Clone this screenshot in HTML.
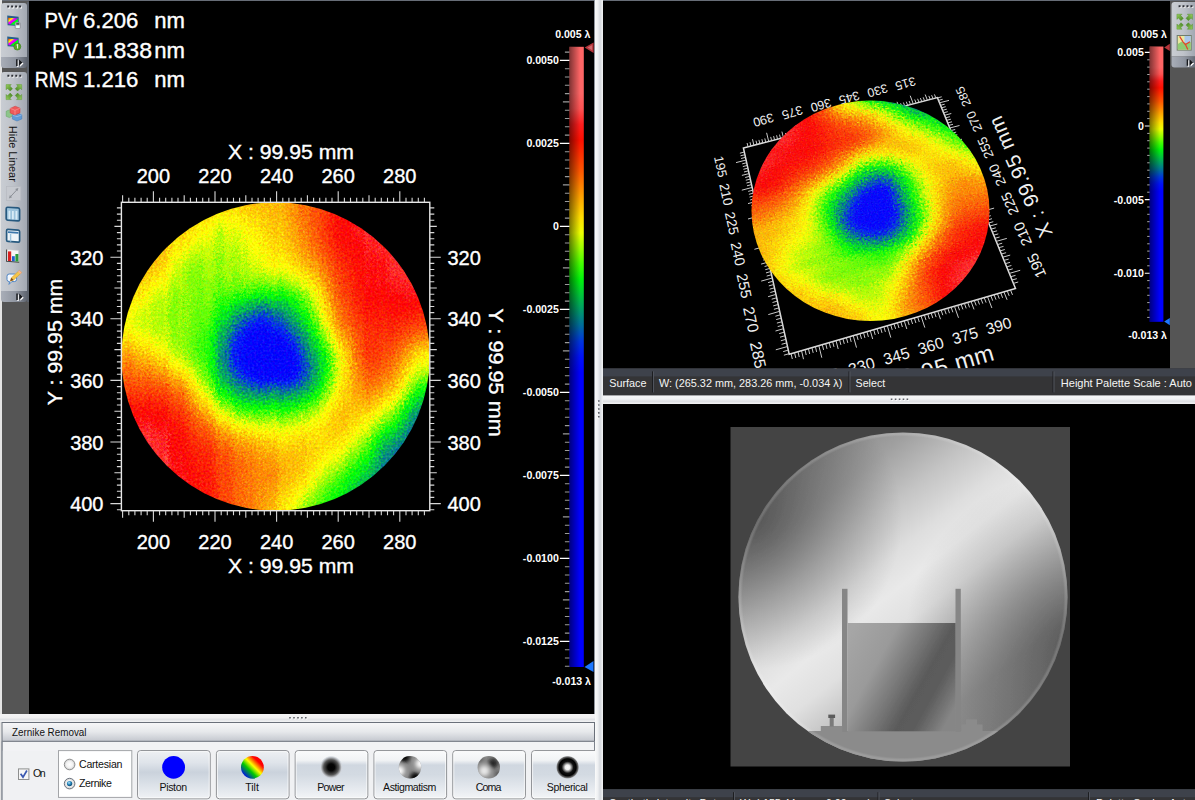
<!DOCTYPE html>
<html><head><meta charset="utf-8"><title>Zernike Removal</title>
<style>
html,body{margin:0;padding:0;background:#f0f0f0;}
body{width:1195px;height:800px;overflow:hidden;position:relative;font-family:"Liberation Sans",sans-serif;font-size:11px;color:#000;}
.abs{position:absolute;}
svg{position:absolute;left:0;top:0;}
svg text{font-family:"Liberation Sans",sans-serif;}
.tb{position:absolute;left:1px;width:26px;border-radius:3px 3px 0 0;background:linear-gradient(90deg,#c9cdd3 0%,#bfc3ca 45%,#a2a8b2 100%);}
.tbc{position:absolute;left:1px;width:26px;background:linear-gradient(90deg,#a9aeb8 0%,#9096a1 55%,#5f6570 100%);border-radius:0 0 3px 3px;}
</style></head><body>


<div class="abs" style="left:0;top:0;width:1195px;height:1px;background:#676d77"></div>
<!-- left toolbar strip -->
<div class="abs" style="left:1px;top:1px;width:28px;height:713px;background:#555"></div>
<div class="abs" style="left:0;top:0;width:2px;height:800px;background:#e4e4e4"></div>
<div class="tb" style="top:3px;height:54px"></div><div class="tbc" style="top:57px;height:11px"></div>
<div class="tb" style="top:72px;height:219px"></div><div class="tbc" style="top:291px;height:11px"></div>
<div class="abs" style="left:27px;top:2px;width:2px;height:300px;background:#5b616b"></div>
<!-- main black panels -->
<div class="abs" style="left:29px;top:1px;width:566px;height:713px;background:#000"></div>
<div class="abs" style="left:603px;top:1px;width:567px;height:368px;background:#000"></div>
<div class="abs" style="left:1170px;top:1px;width:25px;height:368px;background:#555"></div>
<div class="abs" style="left:603px;top:404px;width:592px;height:386px;background:#000"></div>
<!-- splitters -->
<div class="abs" style="left:595px;top:0;width:8px;height:800px;background:linear-gradient(90deg,#fafafa 0%,#eef0f2 35%,#d6d9de 65%,#f2f3f4 100%)"></div>
<div class="abs" style="left:594px;top:0;width:1px;height:714px;background:#8d929a"></div>
<div class="abs" style="left:603px;top:395px;width:592px;height:9px;background:linear-gradient(180deg,#f7f7f8 0%,#f1f2f3 45%,#dddfe3 70%,#f4f4f5 100%)"></div>
<div class="abs" style="left:0;top:714px;width:595px;height:8px;background:linear-gradient(180deg,#f4f4f5 0%,#f0f0f1 50%,#dfe1e5 65%,#f3f3f4 100%)"></div>

<svg width="1195" height="800" viewBox="0 0 1195 800">
<defs>
<g id="hm" stroke-width=".45" stroke-linejoin="miter"><path fill="#0000ff" stroke="#0000ff" d="M70 78v13h1v-13zM71 80v9h1v-9zM72 76v17h1v-17zM73 78v13h1v-13zM74 75v19h1v-19zM75 74v20h1v-20zM76 74v21h1v-21zM77 73v23h1v-23zM78 71v26h1v-26zM79 74v21h1v-21zM80 72v25h1v-25zM81 74v22h1v-22zM82 75v21h1v-21zM83 74v23h1v-23zM84 76v20h1v-20zM85 77v18h1v-18zM86 77v19h1v-19zM87 77v19h1v-19zM88 76v21h1v-21zM89 79v17h1v-17zM90 80v16h1v-16zM91 81v14h1v-14zM92 82v13h1v-13zM93 86v8h1v-8zM94 87v7h1v-7z"/>
<path fill="#0000ff" stroke="#0000ff" d="M70 75v3h1v-3zM70 91v2h1v-2zM71 77v3h1v-3zM71 89v3h1v-3zM72 74v2h1v-2zM72 93v1h1v-1zM73 75v3h1v-3zM73 91v2h1v-2zM74 73v2h1v-2zM74 94v1h1v-1zM75 73v1h1v-1zM75 94v2h1v-2zM76 72v2h1v-2zM76 95v1h1v-1zM77 72v1h1v-1zM77 96v1h1v-1zM78 70v1h1v-1zM78 97v1h1v-1zM79 73v1h1v-1zM79 95v1h1v-1zM80 70v2h1v-2zM80 97v1h1v-1zM81 72v2h1v-2zM81 96v1h1v-1zM82 73v2h1v-2zM82 96v1h1v-1zM83 73v1h1v-1zM84 74v2h1v-2zM84 96v1h1v-1zM85 76v1h1v-1zM85 95v1h1v-1zM86 76v1h1v-1zM86 96v1h1v-1zM87 75v2h1v-2zM87 96v1h1v-1zM88 74v2h1v-2zM88 97v1h1v-1zM89 77v2h1v-2zM89 96v1h1v-1zM90 78v2h1v-2zM90 96v1h1v-1zM91 79v2h1v-2zM91 95v2h1v-2zM92 80v2h1v-2zM92 95v2h1v-2zM93 83v3h1v-3zM93 94v1h1v-1zM94 84v3h1v-3zM94 94v2h1v-2zM95 87v7h1v-7zM163 163v9h1v-9zM166 159v13h1v-13zM168 161v11h1v-11zM171 164v8h1v-8z"/>
<path fill="#000afa" stroke="#000afa" d="M67 79v12h1v-12zM68 79v11h1v-11zM69 80v9h1v-9zM70 73v2h1v-2zM70 93v2h1v-2zM71 74v3h1v-3zM71 92v2h1v-2zM72 72v2h1v-2zM72 94v2h1v-2zM73 73v2h1v-2zM73 93v2h1v-2zM74 71v2h1v-2zM74 95v2h1v-2zM75 71v2h1v-2zM75 96v1h1v-1zM76 71v1h1v-1zM76 96v1h1v-1zM77 70v2h1v-2zM77 97v1h1v-1zM78 68v2h1v-2zM78 98v1h1v-1zM79 71v2h1v-2zM79 96v1h1v-1zM80 68v2h1v-2zM80 98v1h1v-1zM81 71v1h1v-1zM81 97v1h1v-1zM82 72v1h1v-1zM82 97v1h1v-1zM83 71v2h1v-2zM83 97v1h1v-1zM84 73v1h1v-1zM84 97v1h1v-1zM85 74v2h1v-2zM85 96v1h1v-1zM86 74v2h1v-2zM86 97v1h1v-1zM87 74v1h1v-1zM87 97v1h1v-1zM88 73v1h1v-1zM88 98v1h1v-1zM89 75v2h1v-2zM89 97v1h1v-1zM90 77v1h1v-1zM90 97v1h1v-1zM91 78v1h1v-1zM91 97v1h1v-1zM92 78v2h1v-2zM92 97v1h1v-1zM93 81v2h1v-2zM93 95v2h1v-2zM94 81v3h1v-3zM94 96v1h1v-1zM95 84v3h1v-3zM95 94v2h1v-2zM96 88v6h1v-6zM97 87v7h1v-7zM156 161v11h1v-11zM160 155v17h1v-17zM161 162v10h1v-10zM162 158v14h1v-14zM163 151v12h1v-12zM165 157v15h1v-15zM166 150v9h1v-9zM168 151v10h1v-10zM169 160v12h1v-12zM170 163v9h1v-9zM171 153v11h1v-11z"/>
<path fill="#0016f4" stroke="#0016f4" d="M66 81v8h1v-8zM67 76v3h1v-3zM67 91v2h1v-2zM68 76v3h1v-3zM68 90v3h1v-3zM69 77v3h1v-3zM69 89v3h1v-3zM70 71v2h1v-2zM70 95v1h1v-1zM71 72v2h1v-2zM71 94v2h1v-2zM72 70v2h1v-2zM72 96v1h1v-1zM73 72v1h1v-1zM73 95v1h1v-1zM74 70v1h1v-1zM74 97v1h1v-1zM75 69v2h1v-2zM75 97v1h1v-1zM76 69v2h1v-2zM76 97v1h1v-1zM77 68v2h1v-2zM77 98v1h1v-1zM78 67v1h1v-1zM78 99v1h1v-1zM79 69v2h1v-2zM79 97v1h1v-1zM80 67v1h1v-1zM80 99v1h1v-1zM81 69v2h1v-2zM81 98v1h1v-1zM82 70v2h1v-2zM82 98v1h1v-1zM83 69v2h1v-2zM83 98v1h1v-1zM84 71v2h1v-2zM84 98v1h1v-1zM85 73v1h1v-1zM85 97v1h1v-1zM86 73v1h1v-1zM87 73v1h1v-1zM87 98v1h1v-1zM88 72v1h1v-1zM88 99v1h1v-1zM89 74v1h1v-1zM89 98v1h1v-1zM90 75v2h1v-2zM90 98v1h1v-1zM91 76v2h1v-2zM91 98v1h1v-1zM92 77v1h1v-1zM92 98v1h1v-1zM93 79v2h1v-2zM93 97v1h1v-1zM94 79v2h1v-2zM94 97v1h1v-1zM95 81v3h1v-3zM95 96v1h1v-1zM96 84v4h1v-4zM96 94v2h1v-2zM97 84v3h1v-3zM97 94v2h1v-2zM98 88v6h1v-6zM150 155v17h1v-17zM152 148v24h1v-24zM153 157v15h1v-15zM154 154v18h1v-18zM155 157v15h1v-15zM156 148v13h1v-13zM157 151v21h1v-21zM158 150v22h1v-22zM159 157v15h1v-15zM160 146v9h1v-9zM161 150v12h1v-12zM162 148v10h1v-10zM163 144v7h1v-7zM165 149v8h1v-8zM166 143v7h1v-7zM167 156v16h1v-16zM168 145v6h1v-6zM169 150v10h1v-10zM170 153v10h1v-10zM171 146v7h1v-7z"/>
<path fill="#0022ee" stroke="#0022ee" d="M64 81v9h1v-9zM65 80v10h1v-10zM66 77v4h1v-4zM66 89v3h1v-3zM67 74v2h1v-2zM67 93v2h1v-2zM68 74v2h1v-2zM68 93v2h1v-2zM69 74v3h1v-3zM69 92v2h1v-2zM70 70v1h1v-1zM70 96v2h1v-2zM71 71v1h1v-1zM71 96v1h1v-1zM72 69v1h1v-1zM72 97v1h1v-1zM73 70v2h1v-2zM73 96v2h1v-2zM74 68v2h1v-2zM74 98v1h1v-1zM75 68v1h1v-1zM75 98v1h1v-1zM76 67v2h1v-2zM76 98v1h1v-1zM77 67v1h1v-1zM77 99v1h1v-1zM78 65v2h1v-2zM78 100v1h1v-1zM79 68v1h1v-1zM79 98v1h1v-1zM80 65v2h1v-2zM80 100v1h1v-1zM81 67v2h1v-2zM81 99v1h1v-1zM82 68v2h1v-2zM82 99v1h1v-1zM83 68v1h1v-1zM83 99v1h1v-1zM84 70v1h1v-1zM85 72v1h1v-1zM85 98v1h1v-1zM86 71v2h1v-2zM86 98v1h1v-1zM87 71v2h1v-2zM87 99v1h1v-1zM88 70v2h1v-2zM88 100v1h1v-1zM89 73v1h1v-1zM89 99v1h1v-1zM90 74v1h1v-1zM90 99v1h1v-1zM91 74v2h1v-2zM91 99v1h1v-1zM92 75v2h1v-2zM92 99v1h1v-1zM93 77v2h1v-2zM93 98v1h1v-1zM94 77v2h1v-2zM94 98v1h1v-1zM95 79v2h1v-2zM95 97v2h1v-2zM96 82v2h1v-2zM96 96v1h1v-1zM97 82v2h1v-2zM97 96v2h1v-2zM98 85v3h1v-3zM98 94v2h1v-2zM147 154v18h1v-18zM149 154v18h1v-18zM150 144v11h1v-11zM151 155v17h1v-17zM152 141v7h1v-7zM153 146v11h1v-11zM154 145v9h1v-9zM155 146v11h1v-11zM156 141v7h1v-7zM157 143v8h1v-8zM158 143v7h1v-7zM159 147v10h1v-10zM160 140v6h1v-6zM161 143v7h1v-7zM162 142v6h1v-6zM163 138v6h1v-6zM164 154v18h1v-18zM165 142v7h1v-7zM166 137v6h1v-6zM167 148v8h1v-8zM168 139v6h1v-6zM169 144v6h1v-6zM170 146v7h1v-7zM171 140v6h1v-6z"/>
<path fill="#0033de" stroke="#0033de" d="M64 78v3h1v-3zM64 90v2h1v-2zM65 77v3h1v-3zM65 90v3h1v-3zM66 75v2h1v-2zM66 92v2h1v-2zM67 72v2h1v-2zM67 95v2h1v-2zM68 72v2h1v-2zM68 95v1h1v-1zM69 72v2h1v-2zM69 94v2h1v-2zM70 68v2h1v-2zM70 98v1h1v-1zM71 69v2h1v-2zM71 97v1h1v-1zM72 68v1h1v-1zM72 98v2h1v-2zM73 69v1h1v-1zM73 98v1h1v-1zM74 67v1h1v-1zM74 99v1h1v-1zM75 67v1h1v-1zM75 99v1h1v-1zM76 66v1h1v-1zM76 99v2h1v-2zM77 66v1h1v-1zM77 100v1h1v-1zM78 64v1h1v-1zM78 101v1h1v-1zM79 66v2h1v-2zM79 99v1h1v-1zM80 64v1h1v-1zM80 101v1h1v-1zM81 66v1h1v-1zM81 100v1h1v-1zM82 67v1h1v-1zM83 66v2h1v-2zM83 100v1h1v-1zM84 68v2h1v-2zM84 99v1h1v-1zM85 70v2h1v-2zM85 99v1h1v-1zM86 70v1h1v-1zM86 99v1h1v-1zM87 70v1h1v-1zM87 100v1h1v-1zM88 68v2h1v-2zM88 101v1h1v-1zM89 71v2h1v-2zM89 100v1h1v-1zM90 72v2h1v-2zM90 100v1h1v-1zM91 73v1h1v-1zM91 100v1h1v-1zM92 73v2h1v-2zM92 100v1h1v-1zM93 76v1h1v-1zM93 99v1h1v-1zM94 76v1h1v-1zM94 99v1h1v-1zM95 77v2h1v-2zM95 99v1h1v-1zM96 80v2h1v-2zM96 97v2h1v-2zM97 80v2h1v-2zM97 98v1h1v-1zM98 82v3h1v-3zM98 96v2h1v-2zM101 90v3h1v-3zM139 159v13h1v-13zM144 148v24h1v-24zM145 154v18h1v-18zM146 149v23h1v-23zM147 144v10h1v-10zM148 147v25h1v-25zM149 144v10h1v-10zM150 137v7h1v-7zM151 144v11h1v-11zM152 135v6h1v-6zM153 139v7h1v-7zM154 138v7h1v-7zM155 140v6h1v-6zM156 136v5h1v-5zM157 138v5h1v-5zM158 138v5h1v-5zM159 141v6h1v-6zM160 135v5h1v-5zM161 138v5h1v-5zM162 136v6h1v-6zM163 131v7h1v-7zM164 146v8h1v-8zM165 136v6h1v-6zM166 129v8h1v-8zM167 142v6h1v-6zM168 132v7h1v-7zM169 138v6h1v-6zM170 140v6h1v-6zM171 134v6h1v-6z"/>
<path fill="#0048c5" stroke="#0048c5" d="M62 82v7h1v-7zM63 83v5h1v-5zM64 75v3h1v-3zM64 92v3h1v-3zM65 74v3h1v-3zM65 93v2h1v-2zM66 73v2h1v-2zM66 94v2h1v-2zM67 70v2h1v-2zM67 97v1h1v-1zM68 70v2h1v-2zM68 96v2h1v-2zM69 71v1h1v-1zM69 96v1h1v-1zM70 67v1h1v-1zM70 99v2h1v-2zM71 68v1h1v-1zM71 98v2h1v-2zM72 66v2h1v-2zM72 100v1h1v-1zM73 67v2h1v-2zM73 99v1h1v-1zM74 66v1h1v-1zM74 100v1h1v-1zM75 65v2h1v-2zM75 100v1h1v-1zM76 65v1h1v-1zM76 101v1h1v-1zM77 64v2h1v-2zM77 101v1h1v-1zM78 63v1h1v-1zM78 102v1h1v-1zM79 65v1h1v-1zM79 100v1h1v-1zM80 63v1h1v-1zM80 102v1h1v-1zM81 64v2h1v-2zM81 101v1h1v-1zM82 65v2h1v-2zM82 100v1h1v-1zM83 65v1h1v-1zM83 101v1h1v-1zM84 66v2h1v-2zM84 100v1h1v-1zM85 68v2h1v-2zM86 68v2h1v-2zM86 100v1h1v-1zM87 68v2h1v-2zM87 101v1h1v-1zM88 66v2h1v-2zM88 102v1h1v-1zM89 69v2h1v-2zM89 101v1h1v-1zM90 70v2h1v-2zM90 101v1h1v-1zM91 71v2h1v-2zM91 101v1h1v-1zM92 72v1h1v-1zM92 101v1h1v-1zM93 74v2h1v-2zM93 100v1h1v-1zM94 74v2h1v-2zM94 100v1h1v-1zM95 76v1h1v-1zM95 100v1h1v-1zM96 78v2h1v-2zM96 99v1h1v-1zM97 77v3h1v-3zM97 99v2h1v-2zM98 80v2h1v-2zM98 98v2h1v-2zM99 86v10h1v-10zM100 87v9h1v-9zM101 86v4h1v-4zM101 93v4h1v-4zM138 160v12h1v-12zM139 149v10h1v-10zM140 150v22h1v-22zM141 152v20h1v-20zM142 149v23h1v-23zM143 152v20h1v-20zM144 140v8h1v-8zM145 144v10h1v-10zM146 140v9h1v-9zM147 136v8h1v-8zM148 139v8h1v-8zM149 137v7h1v-7zM150 132v5h1v-5zM151 137v7h1v-7zM152 130v5h1v-5zM153 133v6h1v-6zM154 133v5h1v-5zM155 134v6h1v-6zM156 129v7h1v-7zM157 133v5h1v-5zM158 132v6h1v-6zM159 136v5h1v-5zM160 121v14h1v-14zM161 131v7h1v-7zM162 125v11h1v-11zM163 120v11h1v-11zM164 140v6h1v-6zM165 127v9h1v-9zM166 121v8h1v-8zM167 136v6h1v-6zM168 124v8h1v-8zM169 131v7h1v-7zM170 133v7h1v-7zM171 128v6h1v-6z"/>
<path fill="#005cad" stroke="#005cad" d="M62 78v4h1v-4zM62 89v3h1v-3zM63 79v4h1v-4zM63 88v4h1v-4zM64 73v2h1v-2zM64 95v2h1v-2zM65 72v2h1v-2zM65 95v2h1v-2zM66 71v2h1v-2zM66 96v2h1v-2zM67 68v2h1v-2zM67 98v2h1v-2zM68 69v1h1v-1zM68 98v1h1v-1zM69 69v2h1v-2zM69 97v2h1v-2zM70 66v1h1v-1zM70 101v1h1v-1zM71 66v2h1v-2zM71 100v1h1v-1zM72 65v1h1v-1zM72 101v1h1v-1zM73 66v1h1v-1zM73 100v1h1v-1zM74 65v1h1v-1zM74 101v1h1v-1zM75 64v1h1v-1zM75 101v1h1v-1zM76 64v1h1v-1zM76 102v1h1v-1zM77 63v1h1v-1zM77 102v1h1v-1zM78 62v1h1v-1zM78 103v1h1v-1zM79 64v1h1v-1zM79 101v1h1v-1zM80 62v1h1v-1zM80 103v1h1v-1zM81 63v1h1v-1zM81 102v1h1v-1zM82 64v1h1v-1zM82 101v1h1v-1zM83 63v2h1v-2zM83 102v1h1v-1zM84 65v1h1v-1zM84 101v1h1v-1zM85 66v2h1v-2zM85 100v1h1v-1zM86 66v2h1v-2zM86 101v1h1v-1zM87 66v2h1v-2zM87 102v1h1v-1zM88 65v1h1v-1zM88 103v1h1v-1zM89 68v1h1v-1zM89 102v1h1v-1zM90 69v1h1v-1zM90 102v1h1v-1zM91 70v1h1v-1zM91 102v1h1v-1zM92 70v2h1v-2zM92 102v1h1v-1zM93 72v2h1v-2zM93 101v1h1v-1zM94 72v2h1v-2zM94 101v1h1v-1zM95 74v2h1v-2zM95 101v1h1v-1zM96 76v2h1v-2zM96 100v1h1v-1zM97 75v2h1v-2zM97 101v1h1v-1zM98 78v2h1v-2zM98 100v1h1v-1zM99 83v3h1v-3zM99 96v2h1v-2zM100 84v3h1v-3zM100 96v2h1v-2zM101 83v3h1v-3zM101 97v2h1v-2zM102 88v7h1v-7zM135 161v11h1v-11zM136 156v16h1v-16zM138 150v10h1v-10zM139 143v6h1v-6zM140 143v7h1v-7zM141 144v8h1v-8zM142 142v7h1v-7zM143 144v8h1v-8zM144 134v6h1v-6zM145 137v7h1v-7zM146 134v6h1v-6zM147 132v4h1v-4zM148 134v5h1v-5zM149 132v5h1v-5zM150 129v3h1v-3zM151 132v5h1v-5zM152 126v4h1v-4zM153 128v5h1v-5zM154 126v7h1v-7zM155 127v7h1v-7zM156 119v10h1v-10zM157 120v13h1v-13zM158 118v14h1v-14zM159 123v13h1v-13zM160 117v4h1v-4zM161 118v13h1v-13zM162 118v7h1v-7zM163 116v4h1v-4zM164 135v5h1v-5zM165 120v7h1v-7zM166 117v4h1v-4zM167 127v9h1v-9zM168 119v5h1v-5zM169 124v7h1v-7zM170 127v6h1v-6zM171 123v5h1v-5z"/>
<path fill="#007194" stroke="#007194" d="M59 83v6h1v-6zM61 82v8h1v-8zM62 75v3h1v-3zM62 92v3h1v-3zM63 76v3h1v-3zM63 92v2h1v-2zM64 71v2h1v-2zM64 97v1h1v-1zM65 70v2h1v-2zM65 97v2h1v-2zM66 69v2h1v-2zM66 98v2h1v-2zM67 67v1h1v-1zM67 100v1h1v-1zM68 67v2h1v-2zM68 99v2h1v-2zM69 67v2h1v-2zM69 99v1h1v-1zM70 64v2h1v-2zM70 102v1h1v-1zM71 65v1h1v-1zM71 101v1h1v-1zM72 64v1h1v-1zM72 102v1h1v-1zM73 65v1h1v-1zM73 101v1h1v-1zM74 63v2h1v-2zM74 102v1h1v-1zM75 63v1h1v-1zM75 102v1h1v-1zM76 63v1h1v-1zM76 103v1h1v-1zM77 62v1h1v-1zM77 103v1h1v-1zM78 61v1h1v-1zM78 104v1h1v-1zM79 63v1h1v-1zM79 102v1h1v-1zM80 61v1h1v-1zM80 104v1h1v-1zM81 62v1h1v-1zM81 103v1h1v-1zM82 63v1h1v-1zM82 102v1h1v-1zM83 62v1h1v-1zM83 103v1h1v-1zM84 63v2h1v-2zM84 102v1h1v-1zM85 65v1h1v-1zM85 101v1h1v-1zM86 64v2h1v-2zM86 102v1h1v-1zM87 64v2h1v-2zM87 103v1h1v-1zM88 63v2h1v-2zM88 104v1h1v-1zM89 66v2h1v-2zM89 103v1h1v-1zM90 67v2h1v-2zM90 103v1h1v-1zM91 68v2h1v-2zM91 103v1h1v-1zM92 68v2h1v-2zM92 103v1h1v-1zM93 71v1h1v-1zM93 102v1h1v-1zM94 70v2h1v-2zM94 102v1h1v-1zM95 72v2h1v-2zM95 102v1h1v-1zM96 74v2h1v-2zM96 101v1h1v-1zM97 74v1h1v-1zM97 102v1h1v-1zM98 76v2h1v-2zM98 101v1h1v-1zM99 81v2h1v-2zM99 98v2h1v-2zM100 81v3h1v-3zM100 98v2h1v-2zM101 80v3h1v-3zM101 99v2h1v-2zM102 85v3h1v-3zM102 95v3h1v-3zM103 91v2h1v-2zM133 158v14h1v-14zM134 161v11h1v-11zM135 152v9h1v-9zM136 150v6h1v-6zM137 152v20h1v-20zM138 144v6h1v-6zM139 139v4h1v-4zM140 138v5h1v-5zM141 139v5h1v-5zM142 136v6h1v-6zM143 137v7h1v-7zM144 131v3h1v-3zM145 133v4h1v-4zM146 131v3h1v-3zM147 130v2h1v-2zM148 130v4h1v-4zM149 129v3h1v-3zM150 126v3h1v-3zM151 128v4h1v-4zM152 122v4h1v-4zM153 123v5h1v-5zM154 121v5h1v-5zM155 119v8h1v-8zM156 116v3h1v-3zM157 116v4h1v-4zM158 115v3h1v-3zM159 117v6h1v-6zM160 114v3h1v-3zM161 115v3h1v-3zM162 115v3h1v-3zM163 114v2h1v-2zM164 123v12h1v-12zM165 116v4h1v-4zM166 114v3h1v-3zM167 121v6h1v-6zM168 116v3h1v-3zM169 120v4h1v-4zM170 122v5h1v-5zM171 119v4h1v-4z"/>
<path fill="#008480" stroke="#008480" d="M59 78v5h1v-5zM59 89v4h1v-4zM60 81v9h1v-9zM61 78v4h1v-4zM61 90v3h1v-3zM62 73v2h1v-2zM62 95v2h1v-2zM63 74v2h1v-2zM63 94v2h1v-2zM64 69v2h1v-2zM64 98v2h1v-2zM65 68v2h1v-2zM65 99v1h1v-1zM66 67v2h1v-2zM66 100v1h1v-1zM67 65v2h1v-2zM67 101v2h1v-2zM68 66v1h1v-1zM68 101v1h1v-1zM69 66v1h1v-1zM69 100v1h1v-1zM70 63v1h1v-1zM70 103v1h1v-1zM71 64v1h1v-1zM71 102v1h1v-1zM72 63v1h1v-1zM72 103v1h1v-1zM73 64v1h1v-1zM73 102v1h1v-1zM74 62v1h1v-1zM74 103v1h1v-1zM75 62v1h1v-1zM75 103v2h1v-2zM76 62v1h1v-1zM76 104v1h1v-1zM77 61v1h1v-1zM77 104v1h1v-1zM78 60v1h1v-1zM78 105v1h1v-1zM79 62v1h1v-1zM79 103v1h1v-1zM80 60v1h1v-1zM80 105v1h1v-1zM81 61v1h1v-1zM81 104v1h1v-1zM82 62v1h1v-1zM82 103v1h1v-1zM83 61v1h1v-1zM83 104v1h1v-1zM84 62v1h1v-1zM84 103v1h1v-1zM85 63v2h1v-2zM85 102v1h1v-1zM86 63v1h1v-1zM86 103v1h1v-1zM87 63v1h1v-1zM87 104v1h1v-1zM88 62v1h1v-1zM88 105v1h1v-1zM89 64v2h1v-2zM89 104v1h1v-1zM90 65v2h1v-2zM90 104v1h1v-1zM91 66v2h1v-2zM91 104v1h1v-1zM92 66v2h1v-2zM92 104v1h1v-1zM93 69v2h1v-2zM93 103v1h1v-1zM94 69v1h1v-1zM94 103v2h1v-2zM95 70v2h1v-2zM95 103v1h1v-1zM96 72v2h1v-2zM96 102v1h1v-1zM97 72v2h1v-2zM97 103v1h1v-1zM98 74v2h1v-2zM98 102v1h1v-1zM99 78v3h1v-3zM99 100v1h1v-1zM100 79v2h1v-2zM100 100v1h1v-1zM101 78v2h1v-2zM101 101v1h1v-1zM102 82v3h1v-3zM102 98v2h1v-2zM103 86v5h1v-5zM103 93v4h1v-4zM129 163v9h1v-9zM130 162v10h1v-10zM132 160v12h1v-12zM133 151v7h1v-7zM134 152v9h1v-9zM135 147v5h1v-5zM136 145v5h1v-5zM137 146v6h1v-6zM138 140v4h1v-4zM139 135v4h1v-4zM140 134v4h1v-4zM141 134v5h1v-5zM142 133v3h1v-3zM143 133v4h1v-4zM144 129v2h1v-2zM145 130v3h1v-3zM146 129v2h1v-2zM147 127v3h1v-3zM148 128v2h1v-2zM149 126v3h1v-3zM150 123v3h1v-3zM151 125v3h1v-3zM152 119v3h1v-3zM153 119v4h1v-4zM154 117v4h1v-4zM155 116v3h1v-3zM156 114v2h1v-2zM157 114v2h1v-2zM158 113v2h1v-2zM159 114v3h1v-3zM160 112v2h1v-2zM161 113v2h1v-2zM162 113v2h1v-2zM163 112v2h1v-2zM164 118v5h1v-5zM165 114v2h1v-2zM166 112v2h1v-2zM167 117v4h1v-4zM168 114v2h1v-2zM169 117v3h1v-3zM170 118v4h1v-4zM171 116v3h1v-3z"/>
<path fill="#00956e" stroke="#00956e" d="M58 81v8h1v-8zM59 74v4h1v-4zM59 93v3h1v-3zM60 77v4h1v-4zM60 90v4h1v-4zM61 75v3h1v-3zM61 93v3h1v-3zM62 71v2h1v-2zM62 97v2h1v-2zM63 71v3h1v-3zM63 96v2h1v-2zM64 67v2h1v-2zM64 100v2h1v-2zM65 67v1h1v-1zM65 100v2h1v-2zM66 66v1h1v-1zM66 101v1h1v-1zM67 64v1h1v-1zM67 103v1h1v-1zM68 64v2h1v-2zM68 102v1h1v-1zM69 65v1h1v-1zM69 101v2h1v-2zM70 62v1h1v-1zM70 104v1h1v-1zM71 63v1h1v-1zM71 103v1h1v-1zM72 62v1h1v-1zM72 104v2h1v-2zM73 63v1h1v-1zM73 103v1h1v-1zM74 61v1h1v-1zM74 104v2h1v-2zM75 61v1h1v-1zM75 105v1h1v-1zM76 61v1h1v-1zM76 105v1h1v-1zM77 60v1h1v-1zM77 105v1h1v-1zM78 59v1h1v-1zM78 106v1h1v-1zM79 61v1h1v-1zM79 104v1h1v-1zM80 59v1h1v-1zM80 106v1h1v-1zM81 60v1h1v-1zM81 105v1h1v-1zM82 61v1h1v-1zM82 104v1h1v-1zM83 60v1h1v-1zM83 105v1h1v-1zM84 61v1h1v-1zM84 104v1h1v-1zM85 62v1h1v-1zM85 103v2h1v-2zM86 62v1h1v-1zM86 104v1h1v-1zM87 62v1h1v-1zM87 105v1h1v-1zM88 61v1h1v-1zM88 106v1h1v-1zM89 63v1h1v-1zM89 105v1h1v-1zM90 64v1h1v-1zM90 105v1h1v-1zM91 64v2h1v-2zM91 105v1h1v-1zM92 65v1h1v-1zM92 105v1h1v-1zM93 67v2h1v-2zM93 104v1h1v-1zM94 67v2h1v-2zM94 105v1h1v-1zM95 68v2h1v-2zM95 104v1h1v-1zM96 70v2h1v-2zM96 103v1h1v-1zM97 70v2h1v-2zM97 104v1h1v-1zM98 72v2h1v-2zM98 103v1h1v-1zM99 76v2h1v-2zM99 101v1h1v-1zM100 76v3h1v-3zM100 101v2h1v-2zM101 75v3h1v-3zM101 102v2h1v-2zM102 79v3h1v-3zM102 100v2h1v-2zM103 83v3h1v-3zM103 97v3h1v-3zM104 87v9h1v-9zM105 89v6h1v-6zM128 157v15h1v-15zM129 154v9h1v-9zM130 154v8h1v-8zM131 160v12h1v-12zM132 153v7h1v-7zM133 147v4h1v-4zM134 148v4h1v-4zM135 143v4h1v-4zM136 141v4h1v-4zM137 142v4h1v-4zM138 136v4h1v-4zM139 132v3h1v-3zM140 132v2h1v-2zM141 132v2h1v-2zM142 130v3h1v-3zM143 131v2h1v-2zM144 128v1h1v-1zM145 128v2h1v-2zM146 127v2h1v-2zM147 125v2h1v-2zM148 126v2h1v-2zM149 124v2h1v-2zM150 121v2h1v-2zM151 122v3h1v-3zM152 117v2h1v-2zM153 116v3h1v-3zM154 115v2h1v-2zM155 114v2h1v-2zM156 112v2h1v-2zM157 112v2h1v-2zM158 112v1h1v-1zM159 112v2h1v-2zM160 110v2h1v-2zM161 111v2h1v-2zM162 111v2h1v-2zM163 110v2h1v-2zM164 115v3h1v-3zM165 112v2h1v-2zM166 110v2h1v-2zM167 114v3h1v-3zM168 112v2h1v-2zM169 114v3h1v-3zM170 115v3h1v-3zM171 114v2h1v-2z"/>
<path fill="#00a75c" stroke="#00a75c" d="M57 77v17h1v-17zM58 77v4h1v-4zM58 89v5h1v-5zM59 72v2h1v-2zM59 96v3h1v-3zM60 74v3h1v-3zM60 94v2h1v-2zM61 72v3h1v-3zM61 96v2h1v-2zM62 68v3h1v-3zM62 99v2h1v-2zM63 69v2h1v-2zM63 98v2h1v-2zM64 65v2h1v-2zM64 102v1h1v-1zM65 65v2h1v-2zM65 102v1h1v-1zM66 64v2h1v-2zM66 102v2h1v-2zM67 62v2h1v-2zM67 104v1h1v-1zM68 63v1h1v-1zM68 103v2h1v-2zM69 64v1h1v-1zM69 103v1h1v-1zM70 61v1h1v-1zM70 105v2h1v-2zM71 62v1h1v-1zM71 104v2h1v-2zM72 61v1h1v-1zM72 106v1h1v-1zM73 61v2h1v-2zM73 104v2h1v-2zM74 60v1h1v-1zM74 106v1h1v-1zM75 60v1h1v-1zM75 106v1h1v-1zM76 60v1h1v-1zM76 106v1h1v-1zM77 59v1h1v-1zM77 106v1h1v-1zM78 58v1h1v-1zM78 107v1h1v-1zM79 60v1h1v-1zM79 105v1h1v-1zM80 58v1h1v-1zM80 107v1h1v-1zM81 59v1h1v-1zM81 106v1h1v-1zM82 60v1h1v-1zM82 105v1h1v-1zM83 59v1h1v-1zM83 106v1h1v-1zM84 60v1h1v-1zM84 105v1h1v-1zM85 61v1h1v-1zM85 105v1h1v-1zM86 61v1h1v-1zM86 105v1h1v-1zM87 60v2h1v-2zM87 106v1h1v-1zM88 59v2h1v-2zM88 107v1h1v-1zM89 61v2h1v-2zM89 106v1h1v-1zM90 62v2h1v-2zM90 106v1h1v-1zM91 63v1h1v-1zM91 106v1h1v-1zM92 63v2h1v-2zM92 106v1h1v-1zM93 65v2h1v-2zM93 105v1h1v-1zM94 65v2h1v-2zM94 106v1h1v-1zM95 66v2h1v-2zM95 105v1h1v-1zM96 68v2h1v-2zM96 104v2h1v-2zM97 68v2h1v-2zM97 105v1h1v-1zM98 70v2h1v-2zM98 104v2h1v-2zM99 74v2h1v-2zM99 102v1h1v-1zM100 74v2h1v-2zM100 103v1h1v-1zM101 73v2h1v-2zM101 104v1h1v-1zM102 77v2h1v-2zM102 102v1h1v-1zM103 80v3h1v-3zM103 100v1h1v-1zM104 84v3h1v-3zM104 96v3h1v-3zM105 84v5h1v-5zM105 95v3h1v-3zM106 86v11h1v-11zM123 159v13h1v-13zM125 165v7h1v-7zM126 158v14h1v-14zM127 157v15h1v-15zM128 152v5h1v-5zM129 150v4h1v-4zM130 150v4h1v-4zM131 153v7h1v-7zM132 148v5h1v-5zM133 143v4h1v-4zM134 144v4h1v-4zM135 139v4h1v-4zM136 137v4h1v-4zM137 138v4h1v-4zM138 133v3h1v-3zM139 130v2h1v-2zM140 130v2h1v-2zM141 130v2h1v-2zM142 129v1h1v-1zM143 129v2h1v-2zM144 126v2h1v-2zM145 126v2h1v-2zM146 125v2h1v-2zM147 124v1h1v-1zM148 124v2h1v-2zM149 122v2h1v-2zM150 119v2h1v-2zM151 119v3h1v-3zM152 115v2h1v-2zM153 115v1h1v-1zM154 113v2h1v-2zM155 113v1h1v-1zM156 111v1h1v-1zM157 111v1h1v-1zM158 110v2h1v-2zM159 111v1h1v-1zM160 108v2h1v-2zM161 109v2h1v-2zM162 109v2h1v-2zM163 108v2h1v-2zM164 113v2h1v-2zM165 110v2h1v-2zM166 109v1h1v-1zM167 112v2h1v-2zM168 110v2h1v-2zM169 112v2h1v-2zM170 113v2h1v-2zM171 112v2h1v-2z"/>
<path fill="#00b849" stroke="#00b849" d="M57 73v4h1v-4zM57 94v3h1v-3zM58 73v4h1v-4zM58 94v3h1v-3zM59 69v3h1v-3zM59 99v2h1v-2zM60 72v2h1v-2zM60 96v3h1v-3zM61 70v2h1v-2zM61 98v2h1v-2zM62 66v2h1v-2zM62 101v1h1v-1zM63 67v2h1v-2zM63 100v1h1v-1zM64 64v1h1v-1zM64 103v1h1v-1zM65 64v1h1v-1zM65 103v1h1v-1zM66 63v1h1v-1zM66 104v1h1v-1zM67 61v1h1v-1zM67 105v2h1v-2zM68 62v1h1v-1zM68 105v1h1v-1zM69 62v2h1v-2zM69 104v1h1v-1zM70 60v1h1v-1zM70 107v1h1v-1zM71 61v1h1v-1zM71 106v1h1v-1zM72 59v2h1v-2zM72 107v1h1v-1zM73 60v1h1v-1zM73 106v1h1v-1zM74 59v1h1v-1zM74 107v1h1v-1zM75 59v1h1v-1zM75 107v1h1v-1zM76 59v1h1v-1zM76 107v1h1v-1zM77 58v1h1v-1zM77 107v1h1v-1zM78 57v1h1v-1zM78 108v1h1v-1zM79 59v1h1v-1zM79 106v1h1v-1zM80 57v1h1v-1zM80 108v1h1v-1zM81 58v1h1v-1zM81 107v1h1v-1zM82 59v1h1v-1zM82 106v2h1v-2zM83 58v1h1v-1zM83 107v1h1v-1zM84 59v1h1v-1zM84 106v2h1v-2zM85 60v1h1v-1zM85 106v1h1v-1zM86 59v2h1v-2zM86 106v2h1v-2zM87 59v1h1v-1zM87 107v1h1v-1zM88 58v1h1v-1zM88 108v2h1v-2zM89 60v1h1v-1zM89 107v1h1v-1zM90 61v1h1v-1zM90 107v1h1v-1zM91 61v2h1v-2zM91 107v1h1v-1zM92 61v2h1v-2zM92 107v1h1v-1zM93 63v2h1v-2zM93 106v1h1v-1zM94 63v2h1v-2zM94 107v1h1v-1zM95 65v1h1v-1zM95 106v1h1v-1zM96 66v2h1v-2zM96 106v1h1v-1zM97 66v2h1v-2zM97 106v1h1v-1zM98 68v2h1v-2zM98 106v1h1v-1zM99 72v2h1v-2zM99 103v2h1v-2zM100 72v2h1v-2zM100 104v1h1v-1zM101 71v2h1v-2zM101 105v1h1v-1zM102 75v2h1v-2zM102 103v1h1v-1zM103 78v2h1v-2zM103 101v2h1v-2zM104 81v3h1v-3zM104 99v2h1v-2zM105 82v2h1v-2zM105 98v2h1v-2zM106 83v3h1v-3zM106 97v2h1v-2zM107 86v11h1v-11zM122 159v13h1v-13zM123 153v6h1v-6zM124 158v14h1v-14zM125 155v10h1v-10zM126 153v5h1v-5zM127 152v5h1v-5zM128 148v4h1v-4zM129 146v4h1v-4zM130 146v4h1v-4zM131 149v4h1v-4zM132 144v4h1v-4zM133 140v3h1v-3zM134 140v4h1v-4zM135 136v3h1v-3zM136 135v2h1v-2zM137 135v3h1v-3zM138 131v2h1v-2zM139 128v2h1v-2zM140 128v2h1v-2zM141 128v2h1v-2zM142 127v2h1v-2zM143 127v2h1v-2zM144 124v2h1v-2zM145 125v1h1v-1zM146 123v2h1v-2zM147 122v2h1v-2zM148 122v2h1v-2zM149 120v2h1v-2zM150 117v2h1v-2zM151 117v2h1v-2zM152 113v2h1v-2zM153 113v2h1v-2zM154 112v1h1v-1zM155 111v2h1v-2zM156 109v2h1v-2zM157 109v2h1v-2zM158 108v2h1v-2zM159 109v2h1v-2zM160 107v1h1v-1zM161 107v2h1v-2zM162 107v2h1v-2zM163 106v2h1v-2zM164 111v2h1v-2zM165 108v2h1v-2zM166 107v2h1v-2zM167 110v2h1v-2zM168 108v2h1v-2zM169 110v2h1v-2zM170 111v2h1v-2zM171 110v2h1v-2z"/>
<path fill="#00ca37" stroke="#00ca37" d="M55 77v15h1v-15zM56 80v10h1v-10zM57 70v3h1v-3zM57 97v3h1v-3zM58 70v3h1v-3zM58 97v3h1v-3zM59 66v3h1v-3zM59 101v1h1v-1zM60 69v3h1v-3zM60 99v1h1v-1zM61 68v2h1v-2zM61 100v1h1v-1zM62 64v2h1v-2zM62 102v2h1v-2zM63 65v2h1v-2zM63 101v2h1v-2zM64 62v2h1v-2zM64 104v2h1v-2zM65 62v2h1v-2zM65 104v2h1v-2zM66 61v2h1v-2zM66 105v1h1v-1zM67 60v1h1v-1zM67 107v1h1v-1zM68 60v2h1v-2zM68 106v1h1v-1zM69 61v1h1v-1zM69 105v2h1v-2zM70 58v2h1v-2zM70 108v1h1v-1zM71 59v2h1v-2zM71 107v1h1v-1zM72 58v1h1v-1zM72 108v1h1v-1zM73 59v1h1v-1zM73 107v1h1v-1zM74 58v1h1v-1zM74 108v1h1v-1zM75 58v1h1v-1zM75 108v1h1v-1zM76 58v1h1v-1zM76 108v1h1v-1zM77 57v1h1v-1zM77 108v1h1v-1zM78 56v1h1v-1zM78 109v1h1v-1zM79 58v1h1v-1zM79 107v1h1v-1zM80 56v1h1v-1zM80 109v1h1v-1zM81 57v1h1v-1zM81 108v1h1v-1zM82 58v1h1v-1zM82 108v1h1v-1zM83 57v1h1v-1zM83 108v2h1v-2zM84 58v1h1v-1zM84 108v1h1v-1zM85 59v1h1v-1zM85 107v1h1v-1zM86 58v1h1v-1zM86 108v1h1v-1zM87 58v1h1v-1zM87 108v1h1v-1zM88 57v1h1v-1zM88 110v1h1v-1zM89 59v1h1v-1zM89 108v1h1v-1zM90 59v2h1v-2zM90 108v1h1v-1zM91 60v1h1v-1zM91 108v1h1v-1zM92 60v1h1v-1zM92 108v1h1v-1zM93 62v1h1v-1zM93 107v1h1v-1zM94 61v2h1v-2zM94 108v1h1v-1zM95 63v2h1v-2zM95 107v1h1v-1zM96 65v1h1v-1zM96 107v1h1v-1zM97 64v2h1v-2zM97 107v2h1v-2zM98 66v2h1v-2zM98 107v1h1v-1zM99 70v2h1v-2zM99 105v1h1v-1zM100 70v2h1v-2zM100 105v1h1v-1zM101 69v2h1v-2zM101 106v1h1v-1zM102 72v3h1v-3zM102 104v2h1v-2zM103 75v3h1v-3zM103 103v1h1v-1zM104 78v3h1v-3zM104 101v2h1v-2zM105 79v3h1v-3zM105 100v2h1v-2zM106 80v3h1v-3zM106 99v2h1v-2zM107 83v3h1v-3zM107 97v3h1v-3zM118 164v8h1v-8zM120 157v15h1v-15zM121 160v12h1v-12zM122 153v6h1v-6zM123 149v4h1v-4zM124 152v6h1v-6zM125 151v4h1v-4zM126 149v4h1v-4zM127 148v4h1v-4zM128 145v3h1v-3zM129 143v3h1v-3zM130 143v3h1v-3zM131 145v4h1v-4zM132 141v3h1v-3zM133 137v3h1v-3zM134 137v3h1v-3zM135 134v2h1v-2zM136 132v3h1v-3zM137 132v3h1v-3zM138 129v2h1v-2zM139 127v1h1v-1zM140 126v2h1v-2zM141 126v2h1v-2zM142 125v2h1v-2zM143 126v1h1v-1zM144 123v1h1v-1zM145 123v2h1v-2zM146 122v1h1v-1zM147 120v2h1v-2zM148 120v2h1v-2zM149 118v2h1v-2zM150 115v2h1v-2zM151 115v2h1v-2zM152 111v2h1v-2zM153 111v2h1v-2zM154 110v2h1v-2zM155 110v1h1v-1zM156 107v2h1v-2zM157 107v2h1v-2zM158 106v2h1v-2zM159 107v2h1v-2zM160 105v2h1v-2zM161 106v1h1v-1zM162 105v2h1v-2zM163 104v2h1v-2zM164 109v2h1v-2zM165 106v2h1v-2zM166 105v2h1v-2zM167 109v1h1v-1zM168 107v1h1v-1zM169 109v1h1v-1zM170 110v1h1v-1zM171 109v1h1v-1z"/>
<path fill="#00db25" stroke="#00db25" d="M55 73v4h1v-4zM55 92v5h1v-5zM56 75v5h1v-5zM56 90v6h1v-6zM57 66v4h1v-4zM57 100v2h1v-2zM58 67v3h1v-3zM58 100v2h1v-2zM59 63v3h1v-3zM59 102v2h1v-2zM60 66v3h1v-3zM60 100v2h1v-2zM61 65v3h1v-3zM61 101v2h1v-2zM62 62v2h1v-2zM62 104v1h1v-1zM63 64v1h1v-1zM63 103v1h1v-1zM64 60v2h1v-2zM64 106v1h1v-1zM65 60v2h1v-2zM65 106v1h1v-1zM66 60v1h1v-1zM66 106v2h1v-2zM67 58v2h1v-2zM67 108v1h1v-1zM68 59v1h1v-1zM68 107v2h1v-2zM69 60v1h1v-1zM69 107v1h1v-1zM70 57v1h1v-1zM70 109v1h1v-1zM71 58v1h1v-1zM71 108v1h1v-1zM72 57v1h1v-1zM72 109v1h1v-1zM73 58v1h1v-1zM73 108v1h1v-1zM74 57v1h1v-1zM74 109v1h1v-1zM75 57v1h1v-1zM75 109v1h1v-1zM76 57v1h1v-1zM76 109v1h1v-1zM77 56v1h1v-1zM77 109v1h1v-1zM78 55v1h1v-1zM78 110v2h1v-2zM79 57v1h1v-1zM79 108v2h1v-2zM80 55v1h1v-1zM80 110v1h1v-1zM81 56v1h1v-1zM81 109v1h1v-1zM82 57v1h1v-1zM82 109v1h1v-1zM83 56v1h1v-1zM83 110v1h1v-1zM84 57v1h1v-1zM84 109v1h1v-1zM85 58v1h1v-1zM85 108v1h1v-1zM86 57v1h1v-1zM86 109v1h1v-1zM87 57v1h1v-1zM87 109v2h1v-2zM88 55v2h1v-2zM88 111v1h1v-1zM89 57v2h1v-2zM89 109v2h1v-2zM90 58v1h1v-1zM90 109v1h1v-1zM91 58v2h1v-2zM91 109v1h1v-1zM92 58v2h1v-2zM92 109v1h1v-1zM93 60v2h1v-2zM93 108v1h1v-1zM94 60v1h1v-1zM94 109v1h1v-1zM95 61v2h1v-2zM95 108v2h1v-2zM96 63v2h1v-2zM96 108v1h1v-1zM97 62v2h1v-2zM97 109v1h1v-1zM98 64v2h1v-2zM98 108v1h1v-1zM99 68v2h1v-2zM99 106v1h1v-1zM100 68v2h1v-2zM100 106v1h1v-1zM101 67v2h1v-2zM101 107v1h1v-1zM102 70v2h1v-2zM102 106v1h1v-1zM103 73v2h1v-2zM103 104v2h1v-2zM104 76v2h1v-2zM104 103v1h1v-1zM105 77v2h1v-2zM105 102v2h1v-2zM106 78v2h1v-2zM106 101v2h1v-2zM107 80v3h1v-3zM107 100v2h1v-2zM108 85v13h1v-13zM109 88v6h1v-6zM118 155v9h1v-9zM119 163v9h1v-9zM120 152v5h1v-5zM121 153v7h1v-7zM122 149v4h1v-4zM123 146v3h1v-3zM124 149v3h1v-3zM125 148v3h1v-3zM126 146v3h1v-3zM127 145v3h1v-3zM128 142v3h1v-3zM129 141v2h1v-2zM130 140v3h1v-3zM131 142v3h1v-3zM132 138v3h1v-3zM133 135v2h1v-2zM134 135v2h1v-2zM135 132v2h1v-2zM136 130v2h1v-2zM137 130v2h1v-2zM138 127v2h1v-2zM139 125v2h1v-2zM140 125v1h1v-1zM141 125v1h1v-1zM142 124v1h1v-1zM143 124v2h1v-2zM144 121v2h1v-2zM145 122v1h1v-1zM146 120v2h1v-2zM147 119v1h1v-1zM148 118v2h1v-2zM149 116v2h1v-2zM150 113v2h1v-2zM151 114v1h1v-1zM152 110v1h1v-1zM153 110v1h1v-1zM154 109v1h1v-1zM155 108v2h1v-2zM156 106v1h1v-1zM157 106v1h1v-1zM158 105v1h1v-1zM159 105v2h1v-2zM160 103v2h1v-2zM161 104v2h1v-2zM162 104v1h1v-1zM163 103v1h1v-1zM164 107v2h1v-2zM165 105v1h1v-1zM166 104v1h1v-1zM167 107v2h1v-2zM168 105v2h1v-2zM169 107v2h1v-2zM170 108v2h1v-2zM171 107v2h1v-2z"/>
<path fill="#00ed13" stroke="#00ed13" d="M54 81v1h1v-1zM55 69v4h1v-4zM55 97v2h1v-2zM56 71v4h1v-4zM56 96v2h1v-2zM57 63v3h1v-3zM57 102v1h1v-1zM58 64v3h1v-3zM58 102v1h1v-1zM59 60v3h1v-3zM59 104v1h1v-1zM60 64v2h1v-2zM60 102v2h1v-2zM61 63v2h1v-2zM61 103v1h1v-1zM62 60v2h1v-2zM62 105v2h1v-2zM63 62v2h1v-2zM63 104v2h1v-2zM64 58v2h1v-2zM64 107v1h1v-1zM65 59v1h1v-1zM65 107v1h1v-1zM66 58v2h1v-2zM66 108v1h1v-1zM67 57v1h1v-1zM67 109v1h1v-1zM68 58v1h1v-1zM68 109v1h1v-1zM69 59v1h1v-1zM69 108v1h1v-1zM70 56v1h1v-1zM70 110v2h1v-2zM71 57v1h1v-1zM71 109v1h1v-1zM72 56v1h1v-1zM72 110v2h1v-2zM73 57v1h1v-1zM73 109v1h1v-1zM74 56v1h1v-1zM74 110v1h1v-1zM75 56v1h1v-1zM75 110v1h1v-1zM76 56v1h1v-1zM76 110v1h1v-1zM77 55v1h1v-1zM77 110v2h1v-2zM78 54v1h1v-1zM78 112v1h1v-1zM79 56v1h1v-1zM79 110v1h1v-1zM80 54v1h1v-1zM80 111v2h1v-2zM81 55v1h1v-1zM81 110v1h1v-1zM82 56v1h1v-1zM82 110v1h1v-1zM83 55v1h1v-1zM83 111v1h1v-1zM84 56v1h1v-1zM84 110v1h1v-1zM85 57v1h1v-1zM85 109v1h1v-1zM86 56v1h1v-1zM86 110v1h1v-1zM87 55v2h1v-2zM87 111v1h1v-1zM88 54v1h1v-1zM88 112v1h1v-1zM89 56v1h1v-1zM89 111v1h1v-1zM90 56v2h1v-2zM90 110v1h1v-1zM91 57v1h1v-1zM91 110v1h1v-1zM92 57v1h1v-1zM92 110v2h1v-2zM93 58v2h1v-2zM93 109v2h1v-2zM94 58v2h1v-2zM94 110v1h1v-1zM95 59v2h1v-2zM95 110v1h1v-1zM96 61v2h1v-2zM96 109v1h1v-1zM97 60v2h1v-2zM97 110v1h1v-1zM98 62v2h1v-2zM98 109v1h1v-1zM99 66v2h1v-2zM99 107v1h1v-1zM100 66v2h1v-2zM100 107v2h1v-2zM101 65v2h1v-2zM101 108v2h1v-2zM102 68v2h1v-2zM102 107v1h1v-1zM103 71v2h1v-2zM103 106v1h1v-1zM104 74v2h1v-2zM104 104v1h1v-1zM105 75v2h1v-2zM105 104v1h1v-1zM106 76v2h1v-2zM106 103v2h1v-2zM107 78v2h1v-2zM107 102v2h1v-2zM108 82v3h1v-3zM108 98v2h1v-2zM109 84v4h1v-4zM109 94v4h1v-4zM110 86v10h1v-10zM114 158v14h1v-14zM115 162v10h1v-10zM116 160v12h1v-12zM117 156v16h1v-16zM118 151v4h1v-4zM119 155v8h1v-8zM120 149v3h1v-3zM121 150v3h1v-3zM122 146v3h1v-3zM123 144v2h1v-2zM124 146v3h1v-3zM125 145v3h1v-3zM126 143v3h1v-3zM127 142v3h1v-3zM128 140v2h1v-2zM129 138v3h1v-3zM130 138v2h1v-2zM131 139v3h1v-3zM132 136v2h1v-2zM133 133v2h1v-2zM134 133v2h1v-2zM135 130v2h1v-2zM136 128v2h1v-2zM137 128v2h1v-2zM138 126v1h1v-1zM139 124v1h1v-1zM140 123v2h1v-2zM141 123v2h1v-2zM142 122v2h1v-2zM143 122v2h1v-2zM144 120v1h1v-1zM145 120v2h1v-2zM146 119v1h1v-1zM147 117v2h1v-2zM148 117v1h1v-1zM149 114v2h1v-2zM150 111v2h1v-2zM151 112v2h1v-2zM152 108v2h1v-2zM153 108v2h1v-2zM154 107v2h1v-2zM155 106v2h1v-2zM156 104v2h1v-2zM157 104v2h1v-2zM158 103v2h1v-2zM159 104v1h1v-1zM160 101v2h1v-2zM161 102v2h1v-2zM162 102v2h1v-2zM163 101v2h1v-2zM164 105v2h1v-2zM165 103v2h1v-2zM166 102v2h1v-2zM167 105v2h1v-2zM168 104v1h1v-1zM169 105v2h1v-2zM170 106v2h1v-2zM171 105v2h1v-2z"/>
<path fill="#00fe01" stroke="#00fe01" d="M53 76v15h1v-15zM54 74v7h1v-7zM54 82v13h1v-13zM55 64v5h1v-5zM55 99v3h1v-3zM56 67v4h1v-4zM56 98v3h1v-3zM57 59v4h1v-4zM57 103v2h1v-2zM58 61v3h1v-3zM58 103v2h1v-2zM59 57v3h1v-3zM59 105v2h1v-2zM60 61v3h1v-3zM60 104v1h1v-1zM61 61v2h1v-2zM61 104v2h1v-2zM62 58v2h1v-2zM62 107v1h1v-1zM63 60v2h1v-2zM63 106v1h1v-1zM64 56v2h1v-2zM64 108v2h1v-2zM65 57v2h1v-2zM65 108v2h1v-2zM66 57v1h1v-1zM66 109v1h1v-1zM67 55v2h1v-2zM67 110v2h1v-2zM68 56v2h1v-2zM68 110v1h1v-1zM69 57v2h1v-2zM69 109v1h1v-1zM70 54v2h1v-2zM70 112v1h1v-1zM71 56v1h1v-1zM71 110v2h1v-2zM72 54v2h1v-2zM72 112v1h1v-1zM73 56v1h1v-1zM73 110v1h1v-1zM74 54v2h1v-2zM74 111v2h1v-2zM75 54v2h1v-2zM75 111v1h1v-1zM76 54v2h1v-2zM76 111v2h1v-2zM77 54v1h1v-1zM77 112v1h1v-1zM78 52v2h1v-2zM78 113v1h1v-1zM79 55v1h1v-1zM79 111v1h1v-1zM80 52v2h1v-2zM80 113v1h1v-1zM81 54v1h1v-1zM81 111v2h1v-2zM82 54v2h1v-2zM82 111v1h1v-1zM83 53v2h1v-2zM83 112v1h1v-1zM84 54v2h1v-2zM84 111v1h1v-1zM85 55v2h1v-2zM85 110v2h1v-2zM86 55v1h1v-1zM86 111v1h1v-1zM87 54v1h1v-1zM87 112v1h1v-1zM88 52v2h1v-2zM88 113v2h1v-2zM89 54v2h1v-2zM89 112v1h1v-1zM90 55v1h1v-1zM90 111v2h1v-2zM91 55v2h1v-2zM91 111v2h1v-2zM92 55v2h1v-2zM92 112v1h1v-1zM93 57v1h1v-1zM93 111v1h1v-1zM94 56v2h1v-2zM94 111v1h1v-1zM95 57v2h1v-2zM95 111v1h1v-1zM96 59v2h1v-2zM96 110v1h1v-1zM97 58v2h1v-2zM97 111v1h1v-1zM98 59v3h1v-3zM98 110v1h1v-1zM99 64v2h1v-2zM99 108v1h1v-1zM100 64v2h1v-2zM100 109v1h1v-1zM101 62v3h1v-3zM101 110v1h1v-1zM102 66v2h1v-2zM102 108v1h1v-1zM103 69v2h1v-2zM103 107v1h1v-1zM104 72v2h1v-2zM104 105v2h1v-2zM105 72v3h1v-3zM105 105v2h1v-2zM106 74v2h1v-2zM106 105v1h1v-1zM107 76v2h1v-2zM107 104v1h1v-1zM108 80v2h1v-2zM108 100v2h1v-2zM109 81v3h1v-3zM109 98v3h1v-3zM110 83v3h1v-3zM110 96v4h1v-4zM110 163v5h1v-5zM111 86v9h1v-9zM111 161v11h1v-11zM112 158v14h1v-14zM113 160v12h1v-12zM114 153v5h1v-5zM115 155v7h1v-7zM116 154v6h1v-6zM117 152v4h1v-4zM118 148v3h1v-3zM119 151v4h1v-4zM120 146v3h1v-3zM121 147v3h1v-3zM122 144v2h1v-2zM123 142v2h1v-2zM124 143v3h1v-3zM125 142v3h1v-3zM126 141v2h1v-2zM127 140v2h1v-2zM128 137v3h1v-3zM129 136v2h1v-2zM130 135v3h1v-3zM131 137v2h1v-2zM132 134v2h1v-2zM133 131v2h1v-2zM134 130v3h1v-3zM135 128v2h1v-2zM136 126v2h1v-2zM137 127v1h1v-1zM138 124v2h1v-2zM139 122v2h1v-2zM140 122v1h1v-1zM141 122v1h1v-1zM142 121v1h1v-1zM143 121v1h1v-1zM144 118v2h1v-2zM145 119v1h1v-1zM146 117v2h1v-2zM147 115v2h1v-2zM148 115v2h1v-2zM149 113v1h1v-1zM150 110v1h1v-1zM151 110v2h1v-2zM152 107v1h1v-1zM153 107v1h1v-1zM154 105v2h1v-2zM155 105v1h1v-1zM156 102v2h1v-2zM157 102v2h1v-2zM158 101v2h1v-2zM159 102v2h1v-2zM160 100v1h1v-1zM161 101v1h1v-1zM162 101v1h1v-1zM163 100v1h1v-1zM164 104v1h1v-1zM165 102v1h1v-1zM166 101v1h1v-1zM167 104v1h1v-1zM168 102v2h1v-2zM169 104v1h1v-1zM170 105v1h1v-1zM171 104v1h1v-1z"/>
<path fill="#20ff00" stroke="#20ff00" d="M48 69v20h1v-20zM49 78v5h1v-5zM51 75v13h1v-13zM52 73v20h1v-20zM53 71v5h1v-5zM53 91v5h1v-5zM54 70v4h1v-4zM54 95v3h1v-3zM55 59v5h1v-5zM55 102v1h1v-1zM56 63v4h1v-4zM56 101v2h1v-2zM57 55v4h1v-4zM57 105v1h1v-1zM58 57v4h1v-4zM58 105v1h1v-1zM59 53v4h1v-4zM59 107v1h1v-1zM60 59v2h1v-2zM60 105v2h1v-2zM61 58v3h1v-3zM61 106v1h1v-1zM62 55v3h1v-3zM62 108v1h1v-1zM63 58v2h1v-2zM63 107v1h1v-1zM64 54v2h1v-2zM64 110v1h1v-1zM65 55v2h1v-2zM65 110v1h1v-1zM66 55v2h1v-2zM66 110v2h1v-2zM67 53v2h1v-2zM67 112v1h1v-1zM68 54v2h1v-2zM68 111v1h1v-1zM69 56v1h1v-1zM69 110v2h1v-2zM70 52v2h1v-2zM70 113v1h1v-1zM71 54v2h1v-2zM71 112v1h1v-1zM72 53v1h1v-1zM72 113v1h1v-1zM73 54v2h1v-2zM73 111v2h1v-2zM74 53v1h1v-1zM74 113v1h1v-1zM75 53v1h1v-1zM75 112v2h1v-2zM76 53v1h1v-1zM76 113v1h1v-1zM77 52v2h1v-2zM77 113v1h1v-1zM78 51v1h1v-1zM78 114v1h1v-1zM79 53v2h1v-2zM79 112v1h1v-1zM80 51v1h1v-1zM80 114v1h1v-1zM81 53v1h1v-1zM81 113v1h1v-1zM82 53v1h1v-1zM82 112v1h1v-1zM83 52v1h1v-1zM83 113v1h1v-1zM84 53v1h1v-1zM84 112v2h1v-2zM85 54v1h1v-1zM85 112v1h1v-1zM86 53v2h1v-2zM86 112v2h1v-2zM87 53v1h1v-1zM87 113v1h1v-1zM88 51v1h1v-1zM88 115v1h1v-1zM89 53v1h1v-1zM89 113v1h1v-1zM90 53v2h1v-2zM90 113v1h1v-1zM91 54v1h1v-1zM91 113v1h1v-1zM92 54v1h1v-1zM92 113v1h1v-1zM93 55v2h1v-2zM93 112v1h1v-1zM94 55v1h1v-1zM94 112v2h1v-2zM95 56v1h1v-1zM95 112v1h1v-1zM96 57v2h1v-2zM96 111v1h1v-1zM97 56v2h1v-2zM97 112v1h1v-1zM98 57v2h1v-2zM98 111v2h1v-2zM99 62v2h1v-2zM99 109v1h1v-1zM100 61v3h1v-3zM100 110v1h1v-1zM101 60v2h1v-2zM101 111v1h1v-1zM102 63v3h1v-3zM102 109v2h1v-2zM103 66v3h1v-3zM103 108v2h1v-2zM104 69v3h1v-3zM104 107v1h1v-1zM105 70v2h1v-2zM105 107v1h1v-1zM106 71v3h1v-3zM106 106v2h1v-2zM107 73v3h1v-3zM107 105v2h1v-2zM107 161v9h1v-9zM108 77v3h1v-3zM108 102v2h1v-2zM109 79v2h1v-2zM109 101v2h1v-2zM109 161v10h1v-10zM110 80v3h1v-3zM110 100v2h1v-2zM110 156v7h1v-7zM110 168v4h1v-4zM111 83v3h1v-3zM111 95v4h1v-4zM111 155v6h1v-6zM112 85v11h1v-11zM112 153v5h1v-5zM113 154v6h1v-6zM114 150v3h1v-3zM115 151v4h1v-4zM116 150v4h1v-4zM117 148v4h1v-4zM118 145v3h1v-3zM119 148v3h1v-3zM120 144v2h1v-2zM121 144v3h1v-3zM122 142v2h1v-2zM123 139v3h1v-3zM124 141v2h1v-2zM125 140v2h1v-2zM126 138v3h1v-3zM127 138v2h1v-2zM128 135v2h1v-2zM129 134v2h1v-2zM130 133v2h1v-2zM131 135v2h1v-2zM132 132v2h1v-2zM133 128v3h1v-3zM134 128v2h1v-2zM135 126v2h1v-2zM136 125v1h1v-1zM137 125v2h1v-2zM138 123v1h1v-1zM139 121v1h1v-1zM140 120v2h1v-2zM141 120v2h1v-2zM142 119v2h1v-2zM143 120v1h1v-1zM144 117v1h1v-1zM145 117v2h1v-2zM146 116v1h1v-1zM147 113v2h1v-2zM148 113v2h1v-2zM149 111v2h1v-2zM150 108v2h1v-2zM151 109v1h1v-1zM152 105v2h1v-2zM153 105v2h1v-2zM154 104v1h1v-1zM155 103v2h1v-2zM156 101v1h1v-1zM157 100v2h1v-2zM158 100v1h1v-1zM159 100v2h1v-2zM160 99v1h1v-1zM161 99v2h1v-2zM162 99v2h1v-2zM163 99v1h1v-1zM164 102v2h1v-2zM165 100v2h1v-2zM166 100v1h1v-1zM167 103v1h1v-1zM168 101v1h1v-1zM169 103v1h1v-1zM170 103v2h1v-2zM171 103v1h1v-1z"/>
<path fill="#42ff00" stroke="#42ff00" d="M43 77v5h1v-5zM46 74v11h1v-11zM47 77v7h1v-7zM48 49v20h1v-20zM48 89v4h1v-4zM49 68v10h1v-10zM49 83v8h1v-8zM50 72v18h1v-18zM51 69v6h1v-6zM51 88v6h1v-6zM52 67v6h1v-6zM52 93v4h1v-4zM53 64v7h1v-7zM53 96v3h1v-3zM54 64v6h1v-6zM54 98v3h1v-3zM55 52v7h1v-7zM55 103v2h1v-2zM56 58v5h1v-5zM56 103v1h1v-1zM57 48v7h1v-7zM57 106v2h1v-2zM58 53v4h1v-4zM58 106v2h1v-2zM59 47v6h1v-6zM59 108v2h1v-2zM60 56v3h1v-3zM60 107v1h1v-1zM61 56v2h1v-2zM61 107v2h1v-2zM62 52v3h1v-3zM62 109v2h1v-2zM63 56v2h1v-2zM63 108v2h1v-2zM64 51v3h1v-3zM64 111v1h1v-1zM65 52v3h1v-3zM65 111v1h1v-1zM66 52v3h1v-3zM66 112v1h1v-1zM67 49v4h1v-4zM67 113v1h1v-1zM68 52v2h1v-2zM68 112v2h1v-2zM69 54v2h1v-2zM69 112v1h1v-1zM70 49v3h1v-3zM70 114v2h1v-2zM71 52v2h1v-2zM71 113v1h1v-1zM72 51v2h1v-2zM72 114v1h1v-1zM73 53v1h1v-1zM73 113v1h1v-1zM74 51v2h1v-2zM74 114v1h1v-1zM75 51v2h1v-2zM75 114v1h1v-1zM76 51v2h1v-2zM76 114v1h1v-1zM77 51v1h1v-1zM77 114v1h1v-1zM78 49v2h1v-2zM78 115v2h1v-2zM79 52v1h1v-1zM79 113v1h1v-1zM80 49v2h1v-2zM80 115v1h1v-1zM81 51v2h1v-2zM81 114v1h1v-1zM82 52v1h1v-1zM82 113v2h1v-2zM83 50v2h1v-2zM83 114v2h1v-2zM84 51v2h1v-2zM84 114v1h1v-1zM85 53v1h1v-1zM85 113v1h1v-1zM86 52v1h1v-1zM86 114v1h1v-1zM87 51v2h1v-2zM87 114v2h1v-2zM88 49v2h1v-2zM88 116v1h1v-1zM89 51v2h1v-2zM89 114v2h1v-2zM90 52v1h1v-1zM90 114v1h1v-1zM91 52v2h1v-2zM91 114v1h1v-1zM92 52v2h1v-2zM92 114v2h1v-2zM93 54v1h1v-1zM93 113v1h1v-1zM94 53v2h1v-2zM94 114v1h1v-1zM95 54v2h1v-2zM95 113v2h1v-2zM96 55v2h1v-2zM96 112v2h1v-2zM97 54v2h1v-2zM97 113v2h1v-2zM98 55v2h1v-2zM98 113v1h1v-1zM99 59v3h1v-3zM99 110v2h1v-2zM100 59v2h1v-2zM100 111v1h1v-1zM101 57v3h1v-3zM101 112v2h1v-2zM102 61v2h1v-2zM102 111v1h1v-1zM103 64v2h1v-2zM103 110v1h1v-1zM104 67v2h1v-2zM104 108v2h1v-2zM105 68v2h1v-2zM105 108v2h1v-2zM105 162v4h1v-4zM106 69v2h1v-2zM106 108v1h1v-1zM106 158v14h1v-14zM107 71v2h1v-2zM107 107v2h1v-2zM107 156v5h1v-5zM107 170v2h1v-2zM108 75v2h1v-2zM108 104v2h1v-2zM108 158v14h1v-14zM109 77v2h1v-2zM109 103v2h1v-2zM109 156v5h1v-5zM109 171v1h1v-1zM110 78v2h1v-2zM110 102v2h1v-2zM110 153v3h1v-3zM111 81v2h1v-2zM111 99v3h1v-3zM111 152v3h1v-3zM112 83v2h1v-2zM112 96v3h1v-3zM112 150v3h1v-3zM113 151v3h1v-3zM114 147v3h1v-3zM115 148v3h1v-3zM116 147v3h1v-3zM117 146v2h1v-2zM118 143v2h1v-2zM119 145v3h1v-3zM120 141v3h1v-3zM121 142v2h1v-2zM122 139v3h1v-3zM123 137v2h1v-2zM124 139v2h1v-2zM125 138v2h1v-2zM126 136v2h1v-2zM127 135v3h1v-3zM128 133v2h1v-2zM129 132v2h1v-2zM130 131v2h1v-2zM131 132v3h1v-3zM132 129v3h1v-3zM133 126v2h1v-2zM134 126v2h1v-2zM135 124v2h1v-2zM136 123v2h1v-2zM137 123v2h1v-2zM138 121v2h1v-2zM139 119v2h1v-2zM140 119v1h1v-1zM141 119v1h1v-1zM142 118v1h1v-1zM143 118v2h1v-2zM144 115v2h1v-2zM145 115v2h1v-2zM146 114v2h1v-2zM147 112v1h1v-1zM148 111v2h1v-2zM149 110v1h1v-1zM150 107v1h1v-1zM151 107v2h1v-2zM152 104v1h1v-1zM153 104v1h1v-1zM154 102v2h1v-2zM155 101v2h1v-2zM156 99v2h1v-2zM157 99v1h1v-1zM158 98v2h1v-2zM159 99v1h1v-1zM160 97v2h1v-2zM161 98v1h1v-1zM162 98v1h1v-1zM163 97v2h1v-2zM164 101v1h1v-1zM165 99v1h1v-1zM166 98v2h1v-2zM167 101v2h1v-2zM168 100v1h1v-1zM169 101v2h1v-2zM170 102v1h1v-1zM171 101v2h1v-2z"/>
<path fill="#64ff00" stroke="#64ff00" d="M35 55v21h1v-21zM40 53v31h1v-31zM43 44v33h1v-33zM43 82v6h1v-6zM44 64v22h1v-22zM45 57v31h1v-31zM46 48v26h1v-26zM46 85v5h1v-5zM47 62v15h1v-15zM47 84v6h1v-6zM48 39v10h1v-10zM48 93v3h1v-3zM49 52v16h1v-16zM49 91v4h1v-4zM50 62v10h1v-10zM50 90v5h1v-5zM51 59v10h1v-10zM51 94v4h1v-4zM52 59v8h1v-8zM52 97v2h1v-2zM53 57v7h1v-7zM53 99v2h1v-2zM54 57v7h1v-7zM54 101v2h1v-2zM55 43v9h1v-9zM55 105v1h1v-1zM56 53v5h1v-5zM56 104v2h1v-2zM57 37v11h1v-11zM57 108v1h1v-1zM58 46v7h1v-7zM58 108v1h1v-1zM59 36v11h1v-11zM59 110v1h1v-1zM60 52v4h1v-4zM60 108v1h1v-1zM61 52v4h1v-4zM61 109v1h1v-1zM62 47v5h1v-5zM62 111v1h1v-1zM63 53v3h1v-3zM63 110v1h1v-1zM64 46v5h1v-5zM64 112v2h1v-2zM65 48v4h1v-4zM65 112v2h1v-2zM66 48v4h1v-4zM66 113v1h1v-1zM67 45v4h1v-4zM67 114v2h1v-2zM68 49v3h1v-3zM68 114v1h1v-1zM69 52v2h1v-2zM69 113v1h1v-1zM70 46v3h1v-3zM70 116v1h1v-1zM71 50v2h1v-2zM71 114v2h1v-2zM72 48v3h1v-3zM72 115v2h1v-2zM73 51v2h1v-2zM73 114v1h1v-1zM74 49v2h1v-2zM74 115v1h1v-1zM75 49v2h1v-2zM75 115v1h1v-1zM76 49v2h1v-2zM76 115v1h1v-1zM77 49v2h1v-2zM77 115v2h1v-2zM78 47v2h1v-2zM78 117v1h1v-1zM79 50v2h1v-2zM79 114v2h1v-2zM80 47v2h1v-2zM80 116v2h1v-2zM81 49v2h1v-2zM81 115v1h1v-1zM82 50v2h1v-2zM82 115v1h1v-1zM83 49v1h1v-1zM83 116v1h1v-1zM84 50v1h1v-1zM84 115v1h1v-1zM85 51v2h1v-2zM85 114v1h1v-1zM86 50v2h1v-2zM86 115v1h1v-1zM87 49v2h1v-2zM87 116v1h1v-1zM88 47v2h1v-2zM88 117v2h1v-2zM89 50v1h1v-1zM89 116v1h1v-1zM90 50v2h1v-2zM90 115v2h1v-2zM91 51v1h1v-1zM91 115v2h1v-2zM92 50v2h1v-2zM92 116v1h1v-1zM93 52v2h1v-2zM93 114v2h1v-2zM94 51v2h1v-2zM94 115v1h1v-1zM95 52v2h1v-2zM95 115v1h1v-1zM96 53v2h1v-2zM96 114v1h1v-1zM97 52v2h1v-2zM97 115v1h1v-1zM98 54v1h1v-1zM98 114v2h1v-2zM99 57v2h1v-2zM99 112v1h1v-1zM100 57v2h1v-2zM100 112v2h1v-2zM101 55v2h1v-2zM101 114v1h1v-1zM101 159v10h1v-10zM102 58v3h1v-3zM102 112v2h1v-2zM102 161v5h1v-5zM103 61v3h1v-3zM103 111v1h1v-1zM103 161v5h1v-5zM104 65v2h1v-2zM104 110v1h1v-1zM104 162v4h1v-4zM105 65v3h1v-3zM105 110v1h1v-1zM105 157v5h1v-5zM105 166v6h1v-6zM106 67v2h1v-2zM106 109v2h1v-2zM106 154v4h1v-4zM107 69v2h1v-2zM107 109v1h1v-1zM107 153v3h1v-3zM108 73v2h1v-2zM108 106v2h1v-2zM108 154v4h1v-4zM109 75v2h1v-2zM109 105v2h1v-2zM109 152v4h1v-4zM110 76v2h1v-2zM110 104v2h1v-2zM110 150v3h1v-3zM111 78v3h1v-3zM111 102v2h1v-2zM111 149v3h1v-3zM112 80v3h1v-3zM112 99v3h1v-3zM112 147v3h1v-3zM113 84v13h1v-13zM113 148v3h1v-3zM114 85v11h1v-11zM114 145v2h1v-2zM115 145v3h1v-3zM116 145v2h1v-2zM117 143v3h1v-3zM118 141v2h1v-2zM119 143v2h1v-2zM120 139v2h1v-2zM121 140v2h1v-2zM122 137v2h1v-2zM123 135v2h1v-2zM124 136v3h1v-3zM125 135v3h1v-3zM126 134v2h1v-2zM127 133v2h1v-2zM128 131v2h1v-2zM129 129v3h1v-3zM130 129v2h1v-2zM131 130v2h1v-2zM132 127v2h1v-2zM133 124v2h1v-2zM134 124v2h1v-2zM135 122v2h1v-2zM136 121v2h1v-2zM137 122v1h1v-1zM138 119v2h1v-2zM139 117v2h1v-2zM140 117v2h1v-2zM141 117v2h1v-2zM142 116v2h1v-2zM143 117v1h1v-1zM144 114v1h1v-1zM145 114v1h1v-1zM146 112v2h1v-2zM147 110v2h1v-2zM148 110v1h1v-1zM149 108v2h1v-2zM150 105v2h1v-2zM151 106v1h1v-1zM152 102v2h1v-2zM153 102v2h1v-2zM154 100v2h1v-2zM155 100v1h1v-1zM156 98v1h1v-1zM157 97v2h1v-2zM158 97v1h1v-1zM159 97v2h1v-2zM160 96v1h1v-1zM161 96v2h1v-2zM162 96v2h1v-2zM163 96v1h1v-1zM164 100v1h1v-1zM165 98v1h1v-1zM166 97v1h1v-1zM167 100v1h1v-1zM168 98v2h1v-2zM169 100v1h1v-1zM170 101v1h1v-1zM171 100v1h1v-1z"/>
<path fill="#86ff00" stroke="#86ff00" d="M32 56v19h1v-19zM33 59v12h1v-12zM34 56v18h1v-18zM35 49v6h1v-6zM35 76v7h1v-7zM36 53v26h1v-26zM37 51v31h1v-31zM39 54v28h1v-28zM40 40v13h1v-13zM40 84v3h1v-3zM41 73v10h1v-10zM42 43v44h1v-44zM43 38v6h1v-6zM43 88v2h1v-2zM44 40v24h1v-24zM44 86v4h1v-4zM45 40v17h1v-17zM45 88v3h1v-3zM46 39v9h1v-9zM46 90v3h1v-3zM47 41v21h1v-21zM47 90v3h1v-3zM48 34v5h1v-5zM48 96v2h1v-2zM49 39v13h1v-13zM49 95v3h1v-3zM50 47v15h1v-15zM50 95v3h1v-3zM51 45v14h1v-14zM51 98v2h1v-2zM52 47v12h1v-12zM52 99v3h1v-3zM53 47v10h1v-10zM53 101v2h1v-2zM54 49v8h1v-8zM54 103v1h1v-1zM55 32v11h1v-11zM55 106v2h1v-2zM56 45v8h1v-8zM56 106v1h1v-1zM57 27v10h1v-10zM57 109v2h1v-2zM58 34v12h1v-12zM58 109v2h1v-2zM59 26v10h1v-10zM59 111v2h1v-2zM60 46v6h1v-6zM60 109v2h1v-2zM61 47v5h1v-5zM61 110v1h1v-1zM62 38v9h1v-9zM62 112v1h1v-1zM63 49v4h1v-4zM63 111v1h1v-1zM64 35v11h1v-11zM64 114v1h1v-1zM65 42v6h1v-6zM65 114v1h1v-1zM66 42v6h1v-6zM66 114v2h1v-2zM67 36v9h1v-9zM67 116v1h1v-1zM68 44v5h1v-5zM68 115v1h1v-1zM69 49v3h1v-3zM69 114v1h1v-1zM70 39v7h1v-7zM70 117v1h1v-1zM71 46v4h1v-4zM71 116v1h1v-1zM72 44v4h1v-4zM72 117v1h1v-1zM73 48v3h1v-3zM73 115v2h1v-2zM74 46v3h1v-3zM74 116v2h1v-2zM75 47v2h1v-2zM75 116v2h1v-2zM76 47v2h1v-2zM76 116v2h1v-2zM77 47v2h1v-2zM77 117v1h1v-1zM78 44v3h1v-3zM78 118v1h1v-1zM79 48v2h1v-2zM79 116v1h1v-1zM80 45v2h1v-2zM80 118v1h1v-1zM81 47v2h1v-2zM81 116v2h1v-2zM82 48v2h1v-2zM82 116v1h1v-1zM83 47v2h1v-2zM83 117v2h1v-2zM84 48v2h1v-2zM84 116v2h1v-2zM85 49v2h1v-2zM85 115v2h1v-2zM86 48v2h1v-2zM86 116v2h1v-2zM87 48v1h1v-1zM87 117v1h1v-1zM88 45v2h1v-2zM88 119v1h1v-1zM89 48v2h1v-2zM89 117v2h1v-2zM90 49v1h1v-1zM90 117v1h1v-1zM91 49v2h1v-2zM91 117v1h1v-1zM92 49v1h1v-1zM92 117v1h1v-1zM93 50v2h1v-2zM93 116v1h1v-1zM94 50v1h1v-1zM94 116v2h1v-2zM95 51v1h1v-1zM95 116v1h1v-1zM96 52v1h1v-1zM96 115v2h1v-2zM97 51v1h1v-1zM97 116v2h1v-2zM98 52v2h1v-2zM98 116v1h1v-1zM99 55v2h1v-2zM99 113v2h1v-2zM100 55v2h1v-2zM100 114v1h1v-1zM101 53v2h1v-2zM101 115v2h1v-2zM101 156v3h1v-3zM101 169v3h1v-3zM102 56v2h1v-2zM102 114v1h1v-1zM102 157v4h1v-4zM102 166v6h1v-6zM103 59v2h1v-2zM103 112v2h1v-2zM103 157v4h1v-4zM103 166v6h1v-6zM104 62v3h1v-3zM104 111v2h1v-2zM104 157v5h1v-5zM104 166v6h1v-6zM105 63v2h1v-2zM105 111v2h1v-2zM105 154v3h1v-3zM106 64v3h1v-3zM106 111v2h1v-2zM106 152v2h1v-2zM107 66v3h1v-3zM107 110v2h1v-2zM107 150v3h1v-3zM108 71v2h1v-2zM108 108v1h1v-1zM108 151v3h1v-3zM109 73v2h1v-2zM109 107v1h1v-1zM109 149v3h1v-3zM110 74v2h1v-2zM110 106v2h1v-2zM110 147v3h1v-3zM111 76v2h1v-2zM111 104v2h1v-2zM111 146v3h1v-3zM112 78v2h1v-2zM112 102v3h1v-3zM112 145v2h1v-2zM113 82v2h1v-2zM113 97v3h1v-3zM113 145v3h1v-3zM114 82v3h1v-3zM114 96v4h1v-4zM114 142v3h1v-3zM115 88v3h1v-3zM115 143v2h1v-2zM116 143v2h1v-2zM117 141v2h1v-2zM118 139v2h1v-2zM119 141v2h1v-2zM120 137v2h1v-2zM121 138v2h1v-2zM122 135v2h1v-2zM123 133v2h1v-2zM124 134v2h1v-2zM125 133v2h1v-2zM126 132v2h1v-2zM127 131v2h1v-2zM128 128v3h1v-3zM129 127v2h1v-2zM130 127v2h1v-2zM131 128v2h1v-2zM132 125v2h1v-2zM133 122v2h1v-2zM134 123v1h1v-1zM135 120v2h1v-2zM136 120v1h1v-1zM137 120v2h1v-2zM138 118v1h1v-1zM139 116v1h1v-1zM140 116v1h1v-1zM141 116v1h1v-1zM142 115v1h1v-1zM143 115v2h1v-2zM144 112v2h1v-2zM145 112v2h1v-2zM146 110v2h1v-2zM147 109v1h1v-1zM148 108v2h1v-2zM149 106v2h1v-2zM150 104v1h1v-1zM151 104v2h1v-2zM152 100v2h1v-2zM153 100v2h1v-2zM154 99v1h1v-1zM155 98v2h1v-2zM156 96v2h1v-2zM157 96v1h1v-1zM158 95v2h1v-2zM159 96v1h1v-1zM160 94v2h1v-2zM161 95v1h1v-1zM162 95v1h1v-1zM163 94v2h1v-2zM164 98v2h1v-2zM165 96v2h1v-2zM166 95v2h1v-2zM167 99v1h1v-1zM168 97v1h1v-1zM169 99v1h1v-1zM170 99v2h1v-2zM171 99v1h1v-1z"/>
<path fill="#a7ff00" stroke="#a7ff00" d="M20 66v4h1v-4zM24 60v14h1v-14zM25 59v14h1v-14zM27 58v15h1v-15zM28 55v21h1v-21zM29 56v19h1v-19zM30 60v11h1v-11zM32 51v5h1v-5zM32 75v6h1v-6zM33 52v7h1v-7zM33 71v9h1v-9zM34 50v6h1v-6zM34 74v8h1v-8zM35 43v6h1v-6zM35 83v3h1v-3zM36 46v7h1v-7zM36 79v6h1v-6zM37 43v8h1v-8zM37 82v4h1v-4zM38 53v29h1v-29zM39 42v12h1v-12zM39 82v5h1v-5zM40 37v3h1v-3zM40 87v3h1v-3zM41 41v32h1v-32zM41 83v4h1v-4zM42 38v5h1v-5zM42 87v3h1v-3zM43 35v3h1v-3zM43 90v2h1v-2zM44 36v4h1v-4zM44 90v2h1v-2zM45 36v4h1v-4zM45 91v2h1v-2zM46 35v4h1v-4zM46 93v2h1v-2zM47 36v5h1v-5zM47 93v3h1v-3zM48 30v4h1v-4zM48 98v3h1v-3zM49 34v5h1v-5zM49 98v2h1v-2zM50 38v9h1v-9zM50 98v2h1v-2zM51 36v9h1v-9zM51 100v2h1v-2zM52 37v10h1v-10zM52 102v1h1v-1zM53 37v10h1v-10zM53 103v2h1v-2zM54 38v11h1v-11zM54 104v2h1v-2zM55 25v7h1v-7zM55 108v1h1v-1zM56 33v12h1v-12zM56 107v2h1v-2zM57 22v5h1v-5zM57 111v1h1v-1zM58 25v9h1v-9zM58 111v1h1v-1zM59 22v4h1v-4zM59 113v1h1v-1zM60 34v12h1v-12zM60 111v1h1v-1zM61 36v11h1v-11zM61 111v2h1v-2zM62 28v10h1v-10zM62 113v2h1v-2zM63 41v8h1v-8zM63 112v2h1v-2zM64 27v8h1v-8zM64 115v1h1v-1zM65 31v11h1v-11zM65 115v1h1v-1zM66 32v10h1v-10zM66 116v1h1v-1zM67 28v8h1v-8zM67 117v1h1v-1zM68 36v8h1v-8zM68 116v2h1v-2zM69 44v5h1v-5zM69 115v2h1v-2zM70 32v7h1v-7zM70 118v1h1v-1zM71 41v5h1v-5zM71 117v1h1v-1zM72 38v6h1v-6zM72 118v1h1v-1zM73 45v3h1v-3zM73 117v1h1v-1zM74 42v4h1v-4zM74 118v1h1v-1zM75 44v3h1v-3zM75 118v1h1v-1zM76 44v3h1v-3zM76 118v1h1v-1zM77 44v3h1v-3zM77 118v1h1v-1zM78 41v3h1v-3zM78 119v2h1v-2zM79 46v2h1v-2zM79 117v1h1v-1zM80 42v3h1v-3zM80 119v2h1v-2zM81 45v2h1v-2zM81 118v1h1v-1zM82 46v2h1v-2zM82 117v2h1v-2zM83 45v2h1v-2zM83 119v1h1v-1zM84 46v2h1v-2zM84 118v1h1v-1zM85 48v1h1v-1zM85 117v1h1v-1zM86 46v2h1v-2zM86 118v1h1v-1zM87 46v2h1v-2zM87 118v2h1v-2zM88 43v2h1v-2zM88 120v2h1v-2zM89 46v2h1v-2zM89 119v1h1v-1zM90 47v2h1v-2zM90 118v2h1v-2zM91 47v2h1v-2zM91 118v2h1v-2zM92 47v2h1v-2zM92 118v2h1v-2zM93 49v1h1v-1zM93 117v2h1v-2zM94 48v2h1v-2zM94 118v2h1v-2zM95 49v2h1v-2zM95 117v2h1v-2zM96 50v2h1v-2zM96 117v1h1v-1zM97 49v2h1v-2zM97 118v1h1v-1zM97 161v6h1v-6zM98 50v2h1v-2zM98 117v2h1v-2zM98 160v9h1v-9zM99 53v2h1v-2zM99 115v1h1v-1zM100 53v2h1v-2zM100 115v2h1v-2zM100 158v13h1v-13zM101 51v2h1v-2zM101 117v2h1v-2zM101 154v2h1v-2zM102 54v2h1v-2zM102 115v2h1v-2zM102 154v3h1v-3zM103 56v3h1v-3zM103 114v2h1v-2zM103 154v3h1v-3zM104 59v3h1v-3zM104 113v1h1v-1zM104 154v3h1v-3zM105 60v3h1v-3zM105 113v2h1v-2zM105 151v3h1v-3zM106 61v3h1v-3zM106 113v1h1v-1zM106 149v3h1v-3zM107 64v2h1v-2zM107 112v2h1v-2zM107 148v2h1v-2zM108 68v3h1v-3zM108 109v2h1v-2zM108 149v2h1v-2zM109 71v2h1v-2zM109 108v2h1v-2zM109 147v2h1v-2zM110 72v2h1v-2zM110 108v2h1v-2zM110 144v3h1v-3zM111 74v2h1v-2zM111 106v2h1v-2zM111 144v2h1v-2zM112 76v2h1v-2zM112 105v2h1v-2zM112 142v3h1v-3zM113 80v2h1v-2zM113 100v3h1v-3zM113 143v2h1v-2zM114 80v2h1v-2zM114 100v3h1v-3zM114 140v2h1v-2zM115 84v4h1v-4zM115 91v7h1v-7zM115 141v2h1v-2zM116 140v3h1v-3zM117 139v2h1v-2zM118 136v3h1v-3zM119 138v3h1v-3zM120 135v2h1v-2zM121 135v3h1v-3zM122 133v2h1v-2zM123 130v3h1v-3zM124 132v2h1v-2zM125 131v2h1v-2zM126 129v3h1v-3zM127 129v2h1v-2zM128 126v2h1v-2zM129 125v2h1v-2zM130 124v3h1v-3zM131 126v2h1v-2zM132 123v2h1v-2zM133 121v1h1v-1zM134 121v2h1v-2zM135 119v1h1v-1zM136 118v2h1v-2zM137 118v2h1v-2zM138 116v2h1v-2zM139 114v2h1v-2zM140 114v2h1v-2zM141 114v2h1v-2zM142 113v2h1v-2zM143 113v2h1v-2zM144 110v2h1v-2zM145 110v2h1v-2zM146 109v1h1v-1zM147 107v2h1v-2zM148 107v1h1v-1zM149 105v1h1v-1zM150 102v2h1v-2zM151 103v1h1v-1zM152 98v2h1v-2zM153 98v2h1v-2zM154 97v2h1v-2zM155 96v2h1v-2zM156 94v2h1v-2zM157 94v2h1v-2zM158 93v2h1v-2zM159 94v2h1v-2zM160 92v2h1v-2zM161 93v2h1v-2zM162 93v2h1v-2zM163 92v2h1v-2zM164 97v1h1v-1zM165 95v1h1v-1zM166 94v1h1v-1zM167 97v2h1v-2zM168 96v1h1v-1zM169 97v2h1v-2zM170 98v1h1v-1zM171 97v2h1v-2z"/>
<path fill="#c7ff00" stroke="#c7ff00" d="M16 67v3h1v-3zM17 62v12h1v-12zM19 62v12h1v-12zM20 60v6h1v-6zM20 70v5h1v-5zM21 62v11h1v-11zM23 60v14h1v-14zM24 54v6h1v-6zM24 74v3h1v-3zM25 54v5h1v-5zM25 73v4h1v-4zM26 56v19h1v-19zM27 54v4h1v-4zM27 73v4h1v-4zM28 52v3h1v-3zM28 76v4h1v-4zM29 52v4h1v-4zM29 75v4h1v-4zM30 54v6h1v-6zM30 71v7h1v-7zM31 57v17h1v-17zM32 47v4h1v-4zM32 81v3h1v-3zM33 47v5h1v-5zM33 80v4h1v-4zM34 45v5h1v-5zM34 82v3h1v-3zM35 39v4h1v-4zM35 86v3h1v-3zM36 40v6h1v-6zM36 85v2h1v-2zM37 38v5h1v-5zM37 86v2h1v-2zM38 43v10h1v-10zM38 82v4h1v-4zM39 38v4h1v-4zM39 87v2h1v-2zM40 34v3h1v-3zM40 90v2h1v-2zM41 37v4h1v-4zM41 87v3h1v-3zM42 35v3h1v-3zM42 90v2h1v-2zM43 32v3h1v-3zM43 92v2h1v-2zM44 33v3h1v-3zM44 92v2h1v-2zM45 32v4h1v-4zM45 93v3h1v-3zM46 31v4h1v-4zM46 95v2h1v-2zM47 32v4h1v-4zM47 96v2h1v-2zM48 26v4h1v-4zM48 101v2h1v-2zM49 30v4h1v-4zM49 100v2h1v-2zM50 32v6h1v-6zM50 100v2h1v-2zM51 31v5h1v-5zM51 102v2h1v-2zM52 30v7h1v-7zM52 103v2h1v-2zM53 29v8h1v-8zM53 105v2h1v-2zM54 30v8h1v-8zM54 106v1h1v-1zM55 21v4h1v-4zM55 109v2h1v-2zM56 25v8h1v-8zM56 109v1h1v-1zM57 19v3h1v-3zM57 112v2h1v-2zM58 21v4h1v-4zM58 112v1h1v-1zM59 19v3h1v-3zM59 114v1h1v-1zM60 25v9h1v-9zM60 112v2h1v-2zM61 27v9h1v-9zM61 113v1h1v-1zM62 23v5h1v-5zM62 115v1h1v-1zM63 30v11h1v-11zM63 114v1h1v-1zM64 22v5h1v-5zM64 116v2h1v-2zM65 25v6h1v-6zM65 116v2h1v-2zM66 25v7h1v-7zM66 117v1h1v-1zM67 23v5h1v-5zM67 118v2h1v-2zM68 28v8h1v-8zM68 118v1h1v-1zM69 37v7h1v-7zM69 117v1h1v-1zM70 25v7h1v-7zM70 119v2h1v-2zM71 35v6h1v-6zM71 118v1h1v-1zM72 32v6h1v-6zM72 119v2h1v-2zM73 41v4h1v-4zM73 118v1h1v-1zM74 37v5h1v-5zM74 119v1h1v-1zM75 39v5h1v-5zM75 119v1h1v-1zM76 40v4h1v-4zM76 119v1h1v-1zM77 40v4h1v-4zM77 119v2h1v-2zM78 36v5h1v-5zM78 121v1h1v-1zM79 44v2h1v-2zM79 118v2h1v-2zM80 39v3h1v-3zM80 121v1h1v-1zM81 43v2h1v-2zM81 119v2h1v-2zM82 44v2h1v-2zM82 119v1h1v-1zM83 42v3h1v-3zM83 120v2h1v-2zM84 44v2h1v-2zM84 119v2h1v-2zM85 46v2h1v-2zM85 118v2h1v-2zM86 44v2h1v-2zM86 119v2h1v-2zM87 44v2h1v-2zM87 120v2h1v-2zM88 41v2h1v-2zM88 122v2h1v-2zM89 44v2h1v-2zM89 120v2h1v-2zM90 45v2h1v-2zM90 120v1h1v-1zM91 45v2h1v-2zM91 120v1h1v-1zM92 45v2h1v-2zM92 120v2h1v-2zM93 47v2h1v-2zM93 119v1h1v-1zM94 46v2h1v-2zM94 120v1h1v-1zM95 47v2h1v-2zM95 119v2h1v-2zM96 48v2h1v-2zM96 118v2h1v-2zM97 47v2h1v-2zM97 119v2h1v-2zM97 157v4h1v-4zM97 167v5h1v-5zM98 48v2h1v-2zM98 119v1h1v-1zM98 156v4h1v-4zM98 169v3h1v-3zM99 52v1h1v-1zM99 116v2h1v-2zM99 159v10h1v-10zM100 51v2h1v-2zM100 117v2h1v-2zM100 156v2h1v-2zM100 171v1h1v-1zM101 50v1h1v-1zM101 119v2h1v-2zM101 151v3h1v-3zM102 52v2h1v-2zM102 117v2h1v-2zM102 152v2h1v-2zM103 54v2h1v-2zM103 116v1h1v-1zM103 152v2h1v-2zM104 57v2h1v-2zM104 114v2h1v-2zM104 152v2h1v-2zM105 57v3h1v-3zM105 115v1h1v-1zM105 149v2h1v-2zM106 58v3h1v-3zM106 114v2h1v-2zM106 146v3h1v-3zM107 61v3h1v-3zM107 114v2h1v-2zM107 145v3h1v-3zM108 66v2h1v-2zM108 111v2h1v-2zM108 146v3h1v-3zM109 68v3h1v-3zM109 110v2h1v-2zM109 144v3h1v-3zM110 69v3h1v-3zM110 110v2h1v-2zM110 142v2h1v-2zM111 72v2h1v-2zM111 108v2h1v-2zM111 141v3h1v-3zM112 74v2h1v-2zM112 107v2h1v-2zM112 140v2h1v-2zM113 78v2h1v-2zM113 103v3h1v-3zM113 140v3h1v-3zM114 78v2h1v-2zM114 103v3h1v-3zM114 137v3h1v-3zM115 81v3h1v-3zM115 98v4h1v-4zM115 138v3h1v-3zM116 84v13h1v-13zM116 138v2h1v-2zM117 137v2h1v-2zM118 134v2h1v-2zM119 136v2h1v-2zM120 132v3h1v-3zM121 133v2h1v-2zM122 130v3h1v-3zM123 128v2h1v-2zM124 130v2h1v-2zM125 129v2h1v-2zM126 127v2h1v-2zM127 126v3h1v-3zM128 124v2h1v-2zM129 122v3h1v-3zM130 122v2h1v-2zM131 124v2h1v-2zM132 121v2h1v-2zM133 119v2h1v-2zM134 119v2h1v-2zM135 117v2h1v-2zM136 116v2h1v-2zM137 117v1h1v-1zM138 115v1h1v-1zM139 113v1h1v-1zM140 112v2h1v-2zM141 113v1h1v-1zM142 112v1h1v-1zM143 112v1h1v-1zM144 109v1h1v-1zM145 109v1h1v-1zM146 107v2h1v-2zM147 106v1h1v-1zM148 105v2h1v-2zM149 103v2h1v-2zM150 100v2h1v-2zM151 101v2h1v-2zM152 97v1h1v-1zM153 97v1h1v-1zM154 95v2h1v-2zM155 95v1h1v-1zM156 92v2h1v-2zM157 92v2h1v-2zM158 91v2h1v-2zM159 92v2h1v-2zM160 90v2h1v-2zM161 91v2h1v-2zM162 91v2h1v-2zM163 90v2h1v-2zM164 95v2h1v-2zM165 93v2h1v-2zM166 92v2h1v-2zM167 96v1h1v-1zM168 94v2h1v-2zM169 96v1h1v-1zM170 97v1h1v-1zM171 96v1h1v-1z"/>
<path fill="#e6ff00" stroke="#e6ff00" d="M3 61v10h1v-10zM9 66v4h1v-4zM10 62v11h1v-11zM14 64v8h1v-8zM15 63v11h1v-11zM16 62v5h1v-5zM16 70v5h1v-5zM17 59v3h1v-3zM17 74v3h1v-3zM18 64v8h1v-8zM19 58v4h1v-4zM19 74v3h1v-3zM20 56v4h1v-4zM20 75v3h1v-3zM21 57v5h1v-5zM21 73v4h1v-4zM22 60v14h1v-14zM23 55v5h1v-5zM23 74v3h1v-3zM24 52v2h1v-2zM24 77v3h1v-3zM25 51v3h1v-3zM25 77v3h1v-3zM26 53v3h1v-3zM26 75v4h1v-4zM27 51v3h1v-3zM27 77v4h1v-4zM28 49v3h1v-3zM28 80v3h1v-3zM29 49v3h1v-3zM29 79v3h1v-3zM30 50v4h1v-4zM30 78v4h1v-4zM31 52v5h1v-5zM31 74v6h1v-6zM32 44v3h1v-3zM32 84v3h1v-3zM33 43v4h1v-4zM33 84v3h1v-3zM34 41v4h1v-4zM34 85v3h1v-3zM35 35v4h1v-4zM35 89v1h1v-1zM36 36v4h1v-4zM36 87v2h1v-2zM37 35v3h1v-3zM37 88v2h1v-2zM38 38v5h1v-5zM38 86v3h1v-3zM39 35v3h1v-3zM39 89v2h1v-2zM40 31v3h1v-3zM40 92v1h1v-1zM41 34v3h1v-3zM41 90v2h1v-2zM42 32v3h1v-3zM42 92v2h1v-2zM43 29v3h1v-3zM43 94v2h1v-2zM44 30v3h1v-3zM44 94v2h1v-2zM45 29v3h1v-3zM45 96v2h1v-2zM46 28v3h1v-3zM46 97v3h1v-3zM47 29v3h1v-3zM47 98v2h1v-2zM48 22v4h1v-4zM48 103v1h1v-1zM49 26v4h1v-4zM49 102v2h1v-2zM50 28v4h1v-4zM50 102v2h1v-2zM51 26v5h1v-5zM51 104v2h1v-2zM52 25v5h1v-5zM52 105v2h1v-2zM53 24v5h1v-5zM53 107v1h1v-1zM54 24v6h1v-6zM54 107v2h1v-2zM55 18v3h1v-3zM55 111v1h1v-1zM56 21v4h1v-4zM56 110v2h1v-2zM57 15v4h1v-4zM57 114v1h1v-1zM58 18v3h1v-3zM58 113v2h1v-2zM59 15v4h1v-4zM59 115v2h1v-2zM60 21v4h1v-4zM60 114v1h1v-1zM61 22v5h1v-5zM61 114v2h1v-2zM62 19v4h1v-4zM62 116v2h1v-2zM63 24v6h1v-6zM63 115v2h1v-2zM64 19v3h1v-3zM64 118v1h1v-1zM65 21v4h1v-4zM65 118v1h1v-1zM66 21v4h1v-4zM66 118v2h1v-2zM67 19v4h1v-4zM67 120v1h1v-1zM68 23v5h1v-5zM68 119v1h1v-1zM69 29v8h1v-8zM69 118v1h1v-1zM70 21v4h1v-4zM70 121v1h1v-1zM71 27v8h1v-8zM71 119v2h1v-2zM72 25v7h1v-7zM72 121v1h1v-1zM73 34v7h1v-7zM73 119v1h1v-1zM74 31v6h1v-6zM74 120v2h1v-2zM75 33v6h1v-6zM75 120v2h1v-2zM76 35v5h1v-5zM76 120v2h1v-2zM77 35v5h1v-5zM77 121v1h1v-1zM78 30v6h1v-6zM78 122v2h1v-2zM79 41v3h1v-3zM79 120v1h1v-1zM80 34v5h1v-5zM80 122v2h1v-2zM81 40v3h1v-3zM81 121v1h1v-1zM82 41v3h1v-3zM82 120v2h1v-2zM83 39v3h1v-3zM83 122v1h1v-1zM84 42v2h1v-2zM84 121v1h1v-1zM85 44v2h1v-2zM85 120v1h1v-1zM86 42v2h1v-2zM86 121v2h1v-2zM87 41v3h1v-3zM87 122v2h1v-2zM88 38v3h1v-3zM88 124v2h1v-2zM89 42v2h1v-2zM89 122v2h1v-2zM90 43v2h1v-2zM90 121v2h1v-2zM91 43v2h1v-2zM91 121v2h1v-2zM92 43v2h1v-2zM92 122v2h1v-2zM93 45v2h1v-2zM93 120v2h1v-2zM94 44v2h1v-2zM94 121v2h1v-2zM94 160v9h1v-9zM95 45v2h1v-2zM95 121v2h1v-2zM95 159v13h1v-13zM96 47v1h1v-1zM96 120v2h1v-2zM96 158v14h1v-14zM97 45v2h1v-2zM97 121v2h1v-2zM97 154v3h1v-3zM98 47v1h1v-1zM98 120v2h1v-2zM98 153v3h1v-3zM99 50v2h1v-2zM99 118v1h1v-1zM99 156v3h1v-3zM99 169v3h1v-3zM100 49v2h1v-2zM100 119v1h1v-1zM100 153v3h1v-3zM101 48v2h1v-2zM101 121v2h1v-2zM101 149v2h1v-2zM102 50v2h1v-2zM102 119v2h1v-2zM102 149v3h1v-3zM103 52v2h1v-2zM103 117v2h1v-2zM103 149v3h1v-3zM104 54v3h1v-3zM104 116v2h1v-2zM104 149v3h1v-3zM105 54v3h1v-3zM105 116v3h1v-3zM105 146v3h1v-3zM106 56v2h1v-2zM106 116v3h1v-3zM106 143v3h1v-3zM107 58v3h1v-3zM107 116v2h1v-2zM107 142v3h1v-3zM108 63v3h1v-3zM108 113v2h1v-2zM108 143v3h1v-3zM109 65v3h1v-3zM109 112v2h1v-2zM109 141v3h1v-3zM110 67v2h1v-2zM110 112v2h1v-2zM110 139v3h1v-3zM111 70v2h1v-2zM111 110v2h1v-2zM111 138v3h1v-3zM112 72v2h1v-2zM112 109v2h1v-2zM112 137v3h1v-3zM113 76v2h1v-2zM113 106v2h1v-2zM113 138v2h1v-2zM114 76v2h1v-2zM114 106v3h1v-3zM114 135v2h1v-2zM115 79v2h1v-2zM115 102v3h1v-3zM115 136v2h1v-2zM116 82v2h1v-2zM116 97v4h1v-4zM116 136v2h1v-2zM117 84v14h1v-14zM117 134v3h1v-3zM118 85v13h1v-13zM118 131v3h1v-3zM119 134v2h1v-2zM120 130v2h1v-2zM121 131v2h1v-2zM122 128v2h1v-2zM123 125v3h1v-3zM124 127v3h1v-3zM125 126v3h1v-3zM126 125v2h1v-2zM127 124v2h1v-2zM128 121v3h1v-3zM129 120v2h1v-2zM130 120v2h1v-2zM131 122v2h1v-2zM132 119v2h1v-2zM133 117v2h1v-2zM134 117v2h1v-2zM135 115v2h1v-2zM136 114v2h1v-2zM137 115v2h1v-2zM138 113v2h1v-2zM139 111v2h1v-2zM140 111v1h1v-1zM141 111v2h1v-2zM142 110v2h1v-2zM143 110v2h1v-2zM144 107v2h1v-2zM145 107v2h1v-2zM146 106v1h1v-1zM147 104v2h1v-2zM148 104v1h1v-1zM149 102v1h1v-1zM150 98v2h1v-2zM151 99v2h1v-2zM152 94v3h1v-3zM153 95v2h1v-2zM154 93v2h1v-2zM155 93v2h1v-2zM156 90v2h1v-2zM157 90v2h1v-2zM158 89v2h1v-2zM159 90v2h1v-2zM160 87v3h1v-3zM161 89v2h1v-2zM162 88v3h1v-3zM163 87v3h1v-3zM164 93v2h1v-2zM165 90v3h1v-3zM166 89v3h1v-3zM167 94v2h1v-2zM168 92v2h1v-2zM169 94v2h1v-2zM170 95v2h1v-2zM171 94v2h1v-2z"/>
<path fill="#fffb00" stroke="#fffb00" d="M2 62v7h1v-7zM3 55v6h1v-6zM3 71v4h1v-4zM4 61v11h1v-11zM5 60v12h1v-12zM6 61v11h1v-11zM7 60v14h1v-14zM8 61v12h1v-12zM9 60v6h1v-6zM9 70v4h1v-4zM10 58v4h1v-4zM10 73v3h1v-3zM11 63v10h1v-10zM12 63v10h1v-10zM13 65v7h1v-7zM14 60v4h1v-4zM14 72v4h1v-4zM15 59v4h1v-4zM15 74v3h1v-3zM16 58v4h1v-4zM16 75v2h1v-2zM17 56v3h1v-3zM17 77v2h1v-2zM18 60v4h1v-4zM18 72v4h1v-4zM19 54v4h1v-4zM19 77v3h1v-3zM20 53v3h1v-3zM20 78v2h1v-2zM21 53v4h1v-4zM21 77v2h1v-2zM22 55v5h1v-5zM22 74v3h1v-3zM23 52v3h1v-3zM23 77v3h1v-3zM24 49v3h1v-3zM24 80v3h1v-3zM25 49v2h1v-2zM25 80v3h1v-3zM26 50v3h1v-3zM26 79v3h1v-3zM27 48v3h1v-3zM27 81v2h1v-2zM28 46v3h1v-3zM28 83v2h1v-2zM29 46v3h1v-3zM29 82v3h1v-3zM30 47v3h1v-3zM30 82v2h1v-2zM31 48v4h1v-4zM31 80v3h1v-3zM32 39v5h1v-5zM32 87v2h1v-2zM33 39v4h1v-4zM33 87v2h1v-2zM34 36v5h1v-5zM34 88v2h1v-2zM35 30v5h1v-5zM35 90v2h1v-2zM36 33v3h1v-3zM36 89v2h1v-2zM37 32v3h1v-3zM37 90v2h1v-2zM38 35v3h1v-3zM38 89v2h1v-2zM39 32v3h1v-3zM39 91v2h1v-2zM40 28v3h1v-3zM40 93v2h1v-2zM41 32v2h1v-2zM41 92v1h1v-1zM42 29v3h1v-3zM42 94v2h1v-2zM43 26v3h1v-3zM43 96v2h1v-2zM44 27v3h1v-3zM44 96v2h1v-2zM45 26v3h1v-3zM45 98v2h1v-2zM46 24v4h1v-4zM46 100v1h1v-1zM47 25v4h1v-4zM47 100v2h1v-2zM48 16v6h1v-6zM48 104v2h1v-2zM49 21v5h1v-5zM49 104v2h1v-2zM50 23v5h1v-5zM50 104v2h1v-2zM51 21v5h1v-5zM51 106v1h1v-1zM52 21v4h1v-4zM52 107v1h1v-1zM53 20v4h1v-4zM53 108v2h1v-2zM54 20v4h1v-4zM54 109v1h1v-1zM55 14v4h1v-4zM55 112v2h1v-2zM56 18v3h1v-3zM56 112v1h1v-1zM57 12v3h1v-3zM57 115v2h1v-2zM58 14v4h1v-4zM58 115v1h1v-1zM59 11v4h1v-4zM59 117v1h1v-1zM60 18v3h1v-3zM60 115v1h1v-1zM61 19v3h1v-3zM61 116v1h1v-1zM62 16v3h1v-3zM62 118v1h1v-1zM63 20v4h1v-4zM63 117v1h1v-1zM64 15v4h1v-4zM64 119v2h1v-2zM65 17v4h1v-4zM65 119v1h1v-1zM66 18v3h1v-3zM66 120v1h1v-1zM67 15v4h1v-4zM67 121v1h1v-1zM68 19v4h1v-4zM68 120v2h1v-2zM69 23v6h1v-6zM69 119v2h1v-2zM70 17v4h1v-4zM70 122v1h1v-1zM71 22v5h1v-5zM71 121v1h1v-1zM72 20v5h1v-5zM72 122v1h1v-1zM73 27v7h1v-7zM73 120v2h1v-2zM74 24v7h1v-7zM74 122v1h1v-1zM75 26v7h1v-7zM75 122v1h1v-1zM76 28v7h1v-7zM76 122v1h1v-1zM77 28v7h1v-7zM77 122v2h1v-2zM78 24v6h1v-6zM78 124v2h1v-2zM79 36v5h1v-5zM79 121v2h1v-2zM80 27v7h1v-7zM80 124v2h1v-2zM81 35v5h1v-5zM81 122v2h1v-2zM82 38v3h1v-3zM82 122v2h1v-2zM83 34v5h1v-5zM83 123v2h1v-2zM84 38v4h1v-4zM84 122v2h1v-2zM85 41v3h1v-3zM85 121v2h1v-2zM86 39v3h1v-3zM86 123v2h1v-2zM87 38v3h1v-3zM87 124v2h1v-2zM88 33v5h1v-5zM88 126v3h1v-3zM89 39v3h1v-3zM89 124v2h1v-2zM90 40v3h1v-3zM90 123v2h1v-2zM91 41v2h1v-2zM91 123v2h1v-2zM92 40v3h1v-3zM92 124v2h1v-2zM92 159v12h1v-12zM93 43v2h1v-2zM93 122v2h1v-2zM93 161v7h1v-7zM94 42v2h1v-2zM94 123v2h1v-2zM94 156v4h1v-4zM94 169v3h1v-3zM95 43v2h1v-2zM95 123v2h1v-2zM95 155v4h1v-4zM96 45v2h1v-2zM96 122v2h1v-2zM96 155v3h1v-3zM97 43v2h1v-2zM97 123v3h1v-3zM97 151v3h1v-3zM98 45v2h1v-2zM98 122v3h1v-3zM98 151v2h1v-2zM99 48v2h1v-2zM99 119v2h1v-2zM99 154v2h1v-2zM100 47v2h1v-2zM100 120v3h1v-3zM100 151v2h1v-2zM101 46v2h1v-2zM101 123v3h1v-3zM101 146v3h1v-3zM102 48v2h1v-2zM102 121v2h1v-2zM102 147v2h1v-2zM103 50v2h1v-2zM103 119v3h1v-3zM103 147v2h1v-2zM104 52v2h1v-2zM104 118v2h1v-2zM104 146v3h1v-3zM105 52v2h1v-2zM105 119v2h1v-2zM105 143v3h1v-3zM106 53v3h1v-3zM106 119v3h1v-3zM106 140v3h1v-3zM107 55v3h1v-3zM107 118v3h1v-3zM107 138v4h1v-4zM108 60v3h1v-3zM108 115v2h1v-2zM108 140v3h1v-3zM109 62v3h1v-3zM109 114v3h1v-3zM109 138v3h1v-3zM110 64v3h1v-3zM110 114v3h1v-3zM110 135v4h1v-4zM111 67v3h1v-3zM111 112v3h1v-3zM111 135v3h1v-3zM112 70v2h1v-2zM112 111v3h1v-3zM112 134v3h1v-3zM113 74v2h1v-2zM113 108v3h1v-3zM113 135v3h1v-3zM114 74v2h1v-2zM114 109v3h1v-3zM114 132v3h1v-3zM115 77v2h1v-2zM115 105v3h1v-3zM115 133v3h1v-3zM116 80v2h1v-2zM116 101v4h1v-4zM116 133v3h1v-3zM117 81v3h1v-3zM117 98v5h1v-5zM117 132v2h1v-2zM118 82v3h1v-3zM118 98v5h1v-5zM118 128v3h1v-3zM119 131v3h1v-3zM120 127v3h1v-3zM121 128v3h1v-3zM122 125v3h1v-3zM123 122v3h1v-3zM124 125v2h1v-2zM125 124v2h1v-2zM126 122v3h1v-3zM127 121v3h1v-3zM128 119v2h1v-2zM129 118v2h1v-2zM130 118v2h1v-2zM131 119v3h1v-3zM132 117v2h1v-2zM133 115v2h1v-2zM134 115v2h1v-2zM135 113v2h1v-2zM136 113v1h1v-1zM137 113v2h1v-2zM138 111v2h1v-2zM139 109v2h1v-2zM140 109v2h1v-2zM141 109v2h1v-2zM142 108v2h1v-2zM143 108v2h1v-2zM144 105v2h1v-2zM145 106v1h1v-1zM146 104v2h1v-2zM147 102v2h1v-2zM148 102v2h1v-2zM149 100v2h1v-2zM150 96v2h1v-2zM151 97v2h1v-2zM152 92v2h1v-2zM153 93v2h1v-2zM154 91v2h1v-2zM155 91v2h1v-2zM156 88v2h1v-2zM157 88v2h1v-2zM158 87v2h1v-2zM159 88v2h1v-2zM160 85v2h1v-2zM161 86v3h1v-3zM162 86v2h1v-2zM163 85v2h1v-2zM164 91v2h1v-2zM165 88v2h1v-2zM166 86v3h1v-3zM167 92v2h1v-2zM168 89v3h1v-3zM169 92v2h1v-2zM170 94v1h1v-1zM171 92v2h1v-2z"/>
<path fill="#ffea00" stroke="#ffea00" d="M0 63v4h1v-4zM1 57v16h1v-16zM2 56v6h1v-6zM2 69v5h1v-5zM3 50v5h1v-5zM3 75v3h1v-3zM4 56v5h1v-5zM4 72v4h1v-4zM5 56v4h1v-4zM5 72v4h1v-4zM6 57v4h1v-4zM6 72v4h1v-4zM7 55v5h1v-5zM7 74v3h1v-3zM8 57v4h1v-4zM8 73v3h1v-3zM9 56v4h1v-4zM9 74v3h1v-3zM10 54v4h1v-4zM10 76v3h1v-3zM11 60v3h1v-3zM11 73v3h1v-3zM12 59v4h1v-4zM12 73v3h1v-3zM13 61v4h1v-4zM13 72v3h1v-3zM14 57v3h1v-3zM14 76v2h1v-2zM15 56v3h1v-3zM15 77v2h1v-2zM16 55v3h1v-3zM16 77v3h1v-3zM17 51v5h1v-5zM17 79v2h1v-2zM18 57v3h1v-3zM18 76v2h1v-2zM19 50v4h1v-4zM19 80v2h1v-2zM20 49v4h1v-4zM20 80v3h1v-3zM21 50v3h1v-3zM21 79v3h1v-3zM22 52v3h1v-3zM22 77v3h1v-3zM23 49v3h1v-3zM23 80v3h1v-3zM24 46v3h1v-3zM24 83v2h1v-2zM25 46v3h1v-3zM25 83v2h1v-2zM26 47v3h1v-3zM26 82v2h1v-2zM27 45v3h1v-3zM27 83v3h1v-3zM28 43v3h1v-3zM28 85v2h1v-2zM29 43v3h1v-3zM29 85v2h1v-2zM30 44v3h1v-3zM30 84v3h1v-3zM31 45v3h1v-3zM31 83v3h1v-3zM32 33v6h1v-6zM32 89v2h1v-2zM33 34v5h1v-5zM33 89v2h1v-2zM34 32v4h1v-4zM34 90v1h1v-1zM35 26v4h1v-4zM35 92v2h1v-2zM36 29v4h1v-4zM36 91v2h1v-2zM37 28v4h1v-4zM37 92v2h1v-2zM38 32v3h1v-3zM38 91v1h1v-1zM39 29v3h1v-3zM39 93v1h1v-1zM40 25v3h1v-3zM40 95v2h1v-2zM41 29v3h1v-3zM41 93v2h1v-2zM42 26v3h1v-3zM42 96v1h1v-1zM43 20v6h1v-6zM43 98v2h1v-2zM44 24v3h1v-3zM44 98v2h1v-2zM45 22v4h1v-4zM45 100v2h1v-2zM46 19v5h1v-5zM46 101v2h1v-2zM47 20v5h1v-5zM47 102v2h1v-2zM48 10v6h1v-6zM48 106v2h1v-2zM49 16v5h1v-5zM49 106v1h1v-1zM50 19v4h1v-4zM50 106v1h1v-1zM51 17v4h1v-4zM51 107v2h1v-2zM52 17v4h1v-4zM52 108v2h1v-2zM53 16v4h1v-4zM53 110v1h1v-1zM54 17v3h1v-3zM54 110v2h1v-2zM55 10v4h1v-4zM55 114v1h1v-1zM56 14v4h1v-4zM56 113v2h1v-2zM57 7v5h1v-5zM57 117v1h1v-1zM58 10v4h1v-4zM58 116v2h1v-2zM59 6v5h1v-5zM59 118v2h1v-2zM60 14v4h1v-4zM60 116v2h1v-2zM61 15v4h1v-4zM61 117v1h1v-1zM62 12v4h1v-4zM62 119v1h1v-1zM63 16v4h1v-4zM63 118v1h1v-1zM64 11v4h1v-4zM64 121v1h1v-1zM65 14v3h1v-3zM65 120v2h1v-2zM66 14v4h1v-4zM66 121v1h1v-1zM67 11v4h1v-4zM67 122v2h1v-2zM68 16v3h1v-3zM68 122v1h1v-1zM69 19v4h1v-4zM69 121v1h1v-1zM70 13v4h1v-4zM70 123v2h1v-2zM71 18v4h1v-4zM71 122v2h1v-2zM72 16v4h1v-4zM72 123v2h1v-2zM73 22v5h1v-5zM73 122v1h1v-1zM74 19v5h1v-5zM74 123v2h1v-2zM75 21v5h1v-5zM75 123v2h1v-2zM76 22v6h1v-6zM76 123v2h1v-2zM77 22v6h1v-6zM77 124v1h1v-1zM78 17v7h1v-7zM78 126v1h1v-1zM79 30v6h1v-6zM79 123v1h1v-1zM80 20v7h1v-7zM80 126v2h1v-2zM81 29v6h1v-6zM81 124v2h1v-2zM82 32v6h1v-6zM82 124v2h1v-2zM83 28v6h1v-6zM83 125v2h1v-2zM84 33v5h1v-5zM84 124v2h1v-2zM85 38v3h1v-3zM85 123v2h1v-2zM86 35v4h1v-4zM86 125v2h1v-2zM87 34v4h1v-4zM87 126v2h1v-2zM88 27v6h1v-6zM88 129v2h1v-2zM88 156v16h1v-16zM89 35v4h1v-4zM89 126v2h1v-2zM89 163v1h1v-1zM90 37v3h1v-3zM90 125v3h1v-3zM90 160v8h1v-8zM91 38v3h1v-3zM91 125v3h1v-3zM91 157v15h1v-15zM92 37v3h1v-3zM92 126v2h1v-2zM92 154v5h1v-5zM92 171v1h1v-1zM93 40v3h1v-3zM93 124v2h1v-2zM93 156v5h1v-5zM93 168v4h1v-4zM94 39v3h1v-3zM94 125v3h1v-3zM94 152v4h1v-4zM95 41v2h1v-2zM95 125v2h1v-2zM95 152v3h1v-3zM96 42v3h1v-3zM96 124v2h1v-2zM96 152v3h1v-3zM97 41v2h1v-2zM97 126v3h1v-3zM97 148v3h1v-3zM98 42v3h1v-3zM98 125v2h1v-2zM98 148v3h1v-3zM99 46v2h1v-2zM99 121v2h1v-2zM99 151v3h1v-3zM100 45v2h1v-2zM100 123v2h1v-2zM100 148v3h1v-3zM101 43v3h1v-3zM101 126v4h1v-4zM101 140v6h1v-6zM102 46v2h1v-2zM102 123v4h1v-4zM102 143v4h1v-4zM103 48v2h1v-2zM103 122v3h1v-3zM103 143v4h1v-4zM104 50v2h1v-2zM104 120v3h1v-3zM104 143v3h1v-3zM105 50v2h1v-2zM105 121v4h1v-4zM105 138v5h1v-5zM106 51v2h1v-2zM106 122v4h1v-4zM106 134v6h1v-6zM107 52v3h1v-3zM107 121v6h1v-6zM107 132v6h1v-6zM108 57v3h1v-3zM108 117v4h1v-4zM108 136v4h1v-4zM109 59v3h1v-3zM109 117v3h1v-3zM109 134v4h1v-4zM110 61v3h1v-3zM110 117v5h1v-5zM110 130v5h1v-5zM111 64v3h1v-3zM111 115v4h1v-4zM111 131v4h1v-4zM112 67v3h1v-3zM112 114v4h1v-4zM112 129v5h1v-5zM113 72v2h1v-2zM113 111v2h1v-2zM113 132v3h1v-3zM114 72v2h1v-2zM114 112v3h1v-3zM114 127v5h1v-5zM115 75v2h1v-2zM115 108v3h1v-3zM115 130v3h1v-3zM116 78v2h1v-2zM116 105v3h1v-3zM116 130v3h1v-3zM117 79v2h1v-2zM117 103v4h1v-4zM117 128v4h1v-4zM118 80v2h1v-2zM118 103v5h1v-5zM118 125v3h1v-3zM119 87v9h1v-9zM119 129v2h1v-2zM120 86v14h1v-14zM120 124v3h1v-3zM121 125v3h1v-3zM122 122v3h1v-3zM123 118v4h1v-4zM124 122v3h1v-3zM125 121v3h1v-3zM126 119v3h1v-3zM127 119v2h1v-2zM128 116v3h1v-3zM129 115v3h1v-3zM130 115v3h1v-3zM131 117v2h1v-2zM132 115v2h1v-2zM133 113v2h1v-2zM134 113v2h1v-2zM135 112v1h1v-1zM136 111v2h1v-2zM137 112v1h1v-1zM138 109v2h1v-2zM139 107v2h1v-2zM140 107v2h1v-2zM141 108v1h1v-1zM142 107v1h1v-1zM143 107v1h1v-1zM144 104v1h1v-1zM145 104v2h1v-2zM146 103v1h1v-1zM147 101v1h1v-1zM148 100v2h1v-2zM149 98v2h1v-2zM150 94v2h1v-2zM151 95v2h1v-2zM152 90v2h1v-2zM153 90v3h1v-3zM154 89v2h1v-2zM155 88v3h1v-3zM156 86v2h1v-2zM157 86v2h1v-2zM158 85v2h1v-2zM159 86v2h1v-2zM160 84v1h1v-1zM161 84v2h1v-2zM162 84v2h1v-2zM163 83v2h1v-2zM164 89v2h1v-2zM165 85v3h1v-3zM166 84v2h1v-2zM167 89v3h1v-3zM168 86v3h1v-3zM169 90v2h1v-2zM170 92v2h1v-2zM171 89v3h1v-3z"/>
<path fill="#ffd900" stroke="#ffd900" d="M0 56v7h1v-7zM0 67v7h1v-7zM1 51v6h1v-6zM1 73v4h1v-4zM2 51v5h1v-5zM2 74v4h1v-4zM3 40v10h1v-10zM3 78v3h1v-3zM4 50v6h1v-6zM4 76v3h1v-3zM5 50v6h1v-6zM5 76v3h1v-3zM6 52v5h1v-5zM6 76v2h1v-2zM7 50v5h1v-5zM7 77v2h1v-2zM8 53v4h1v-4zM8 76v3h1v-3zM9 51v5h1v-5zM9 77v2h1v-2zM10 48v6h1v-6zM10 79v2h1v-2zM11 56v4h1v-4zM11 76v2h1v-2zM12 56v3h1v-3zM12 76v2h1v-2zM13 58v3h1v-3zM13 75v3h1v-3zM14 54v3h1v-3zM14 78v2h1v-2zM15 51v5h1v-5zM15 79v2h1v-2zM16 50v5h1v-5zM16 80v2h1v-2zM17 45v6h1v-6zM17 81v3h1v-3zM18 53v4h1v-4zM18 78v3h1v-3zM19 45v5h1v-5zM19 82v2h1v-2zM20 44v5h1v-5zM20 83v2h1v-2zM21 46v4h1v-4zM21 82v2h1v-2zM22 49v3h1v-3zM22 80v2h1v-2zM23 46v3h1v-3zM23 83v2h1v-2zM24 42v4h1v-4zM24 85v2h1v-2zM25 42v4h1v-4zM25 85v2h1v-2zM26 44v3h1v-3zM26 84v2h1v-2zM27 42v3h1v-3zM27 86v2h1v-2zM28 39v4h1v-4zM28 87v2h1v-2zM29 39v4h1v-4zM29 87v2h1v-2zM30 40v4h1v-4zM30 87v2h1v-2zM31 41v4h1v-4zM31 86v2h1v-2zM32 26v7h1v-7zM32 91v1h1v-1zM33 28v6h1v-6zM33 91v1h1v-1zM34 26v6h1v-6zM34 91v2h1v-2zM35 16v10h1v-10zM35 94v1h1v-1zM36 24v5h1v-5zM36 93v2h1v-2zM37 23v5h1v-5zM37 94v1h1v-1zM38 28v4h1v-4zM38 92v2h1v-2zM39 25v4h1v-4zM39 94v2h1v-2zM40 16v9h1v-9zM40 97v1h1v-1zM41 25v4h1v-4zM41 95v2h1v-2zM42 21v5h1v-5zM42 97v2h1v-2zM43 10v10h1v-10zM43 100v2h1v-2zM44 15v9h1v-9zM44 100v2h1v-2zM45 14v8h1v-8zM45 102v1h1v-1zM46 11v8h1v-8zM46 103v2h1v-2zM47 14v6h1v-6zM47 104v2h1v-2zM48 2v8h1v-8zM48 108v2h1v-2zM49 10v6h1v-6zM49 107v2h1v-2zM50 14v5h1v-5zM50 107v2h1v-2zM51 13v4h1v-4zM51 109v2h1v-2zM52 13v4h1v-4zM52 110v2h1v-2zM53 12v4h1v-4zM53 111v2h1v-2zM54 13v4h1v-4zM54 112v2h1v-2zM55 4v6h1v-6zM55 115v2h1v-2zM56 10v4h1v-4zM56 115v1h1v-1zM57 0v7h1v-7zM57 118v2h1v-2zM58 5v5h1v-5zM58 118v1h1v-1zM59 0v6h1v-6zM59 120v1h1v-1zM60 10v4h1v-4zM60 118v1h1v-1zM61 11v4h1v-4zM61 118v2h1v-2zM62 7v5h1v-5zM62 120v2h1v-2zM63 13v3h1v-3zM63 119v2h1v-2zM64 6v5h1v-5zM64 122v1h1v-1zM65 9v5h1v-5zM65 122v1h1v-1zM66 10v4h1v-4zM66 122v2h1v-2zM67 5v6h1v-6zM67 124v1h1v-1zM68 12v4h1v-4zM68 123v1h1v-1zM69 16v3h1v-3zM69 122v1h1v-1zM70 7v6h1v-6zM70 125v2h1v-2zM71 14v4h1v-4zM71 124v1h1v-1zM72 12v4h1v-4zM72 125v1h1v-1zM73 18v4h1v-4zM73 123v2h1v-2zM74 15v4h1v-4zM74 125v1h1v-1zM75 16v5h1v-5zM75 125v1h1v-1zM76 17v5h1v-5zM76 125v2h1v-2zM77 16v6h1v-6zM77 125v2h1v-2zM78 10v7h1v-7zM78 127v2h1v-2zM79 23v7h1v-7zM79 124v2h1v-2zM80 12v8h1v-8zM80 128v2h1v-2zM81 22v7h1v-7zM81 126v2h1v-2zM82 25v7h1v-7zM82 126v2h1v-2zM83 20v8h1v-8zM83 127v3h1v-3zM84 27v6h1v-6zM84 126v2h1v-2zM85 33v5h1v-5zM85 125v2h1v-2zM86 29v6h1v-6zM86 127v2h1v-2zM87 27v7h1v-7zM87 128v3h1v-3zM87 161v4h1v-4zM88 17v10h1v-10zM88 131v4h1v-4zM88 152v4h1v-4zM89 30v5h1v-5zM89 128v3h1v-3zM89 155v8h1v-8zM89 164v8h1v-8zM90 33v4h1v-4zM90 128v3h1v-3zM90 155v5h1v-5zM90 168v4h1v-4zM91 34v4h1v-4zM91 128v3h1v-3zM91 153v4h1v-4zM92 33v4h1v-4zM92 128v4h1v-4zM92 151v3h1v-3zM93 37v3h1v-3zM93 126v3h1v-3zM93 152v4h1v-4zM94 36v3h1v-3zM94 128v3h1v-3zM94 149v3h1v-3zM95 38v3h1v-3zM95 127v3h1v-3zM95 149v3h1v-3zM96 40v2h1v-2zM96 126v3h1v-3zM96 149v3h1v-3zM97 38v3h1v-3zM97 129v4h1v-4zM97 144v4h1v-4zM98 40v2h1v-2zM98 127v5h1v-5zM98 144v4h1v-4zM99 44v2h1v-2zM99 123v3h1v-3zM99 148v3h1v-3zM100 43v2h1v-2zM100 125v3h1v-3zM100 144v4h1v-4zM101 41v2h1v-2zM101 130v10h1v-10zM102 44v2h1v-2zM102 127v16h1v-16zM103 46v2h1v-2zM103 125v5h1v-5zM103 137v6h1v-6zM104 48v2h1v-2zM104 123v4h1v-4zM104 138v5h1v-5zM105 48v2h1v-2zM105 125v13h1v-13zM106 48v3h1v-3zM106 126v8h1v-8zM107 50v2h1v-2zM107 127v5h1v-5zM108 54v3h1v-3zM108 121v15h1v-15zM109 56v3h1v-3zM109 120v14h1v-14zM110 57v4h1v-4zM110 122v8h1v-8zM111 61v3h1v-3zM111 119v12h1v-12zM112 64v3h1v-3zM112 118v11h1v-11zM113 69v3h1v-3zM113 113v4h1v-4zM113 127v5h1v-5zM114 70v2h1v-2zM114 115v12h1v-12zM115 73v2h1v-2zM115 111v3h1v-3zM115 125v5h1v-5zM116 76v2h1v-2zM116 108v4h1v-4zM116 126v4h1v-4zM117 77v2h1v-2zM117 107v4h1v-4zM117 124v4h1v-4zM118 78v2h1v-2zM118 108v6h1v-6zM118 119v6h1v-6zM119 83v4h1v-4zM119 96v7h1v-7zM119 125v4h1v-4zM120 82v4h1v-4zM120 100v9h1v-9zM120 119v5h1v-5zM121 121v4h1v-4zM122 117v5h1v-5zM123 112v6h1v-6zM124 118v4h1v-4zM125 117v4h1v-4zM126 116v3h1v-3zM127 116v3h1v-3zM128 113v3h1v-3zM129 113v2h1v-2zM130 113v2h1v-2zM131 115v2h1v-2zM132 113v2h1v-2zM133 111v2h1v-2zM134 112v1h1v-1zM135 110v2h1v-2zM136 109v2h1v-2zM137 110v2h1v-2zM138 108v1h1v-1zM139 106v1h1v-1zM140 106v1h1v-1zM141 106v2h1v-2zM142 105v2h1v-2zM143 105v2h1v-2zM144 102v2h1v-2zM145 102v2h1v-2zM146 101v2h1v-2zM147 98v3h1v-3zM148 98v2h1v-2zM149 95v3h1v-3zM150 91v3h1v-3zM151 92v3h1v-3zM152 88v2h1v-2zM153 88v2h1v-2zM154 87v2h1v-2zM155 86v2h1v-2zM156 84v2h1v-2zM157 84v2h1v-2zM158 83v2h1v-2zM159 84v2h1v-2zM160 82v2h1v-2zM161 83v1h1v-1zM162 82v2h1v-2zM163 81v2h1v-2zM164 86v3h1v-3zM165 83v2h1v-2zM166 82v2h1v-2zM167 86v3h1v-3zM168 83v3h1v-3zM169 86v4h1v-4zM170 88v4h1v-4zM171 86v3h1v-3z"/>
<path fill="#ffc800" stroke="#ffc800" d="M0 50v6h1v-6zM0 74v3h1v-3zM1 44v7h1v-7zM1 77v3h1v-3zM2 42v9h1v-9zM2 78v3h1v-3zM3 11v29h1v-29zM3 81v3h1v-3zM4 41v9h1v-9zM4 79v2h1v-2zM5 41v9h1v-9zM5 79v2h1v-2zM6 44v8h1v-8zM6 78v3h1v-3zM7 39v11h1v-11zM7 79v3h1v-3zM8 45v8h1v-8zM8 79v2h1v-2zM9 43v8h1v-8zM9 79v3h1v-3zM10 18v30h1v-30zM10 81v2h1v-2zM11 51v5h1v-5zM11 78v2h1v-2zM12 51v5h1v-5zM12 78v2h1v-2zM13 54v4h1v-4zM13 78v2h1v-2zM14 47v7h1v-7zM14 80v2h1v-2zM15 44v7h1v-7zM15 81v2h1v-2zM16 42v8h1v-8zM16 82v2h1v-2zM17 14v31h1v-31zM17 84v2h1v-2zM18 48v5h1v-5zM18 81v2h1v-2zM19 19v26h1v-26zM19 84v2h1v-2zM20 18v26h1v-26zM20 85v2h1v-2zM21 42v4h1v-4zM21 84v2h1v-2zM22 46v3h1v-3zM22 82v3h1v-3zM23 42v4h1v-4zM23 85v2h1v-2zM24 19v23h1v-23zM24 87v2h1v-2zM25 22v20h1v-20zM25 87v2h1v-2zM26 41v3h1v-3zM26 86v2h1v-2zM27 27v15h1v-15zM27 88v2h1v-2zM28 21v18h1v-18zM28 89v2h1v-2zM29 24v15h1v-15zM29 89v2h1v-2zM30 30v10h1v-10zM30 89v2h1v-2zM31 36v5h1v-5zM31 88v2h1v-2zM32 14v12h1v-12zM32 92v2h1v-2zM33 19v9h1v-9zM33 92v2h1v-2zM34 17v9h1v-9zM34 93v2h1v-2zM35 0v16h1v-16zM35 95v2h1v-2zM36 14v10h1v-10zM36 95v1h1v-1zM37 11v12h1v-12zM37 95v2h1v-2zM38 24v4h1v-4zM38 94v2h1v-2zM39 16v9h1v-9zM39 96v1h1v-1zM40 1v15h1v-15zM40 98v2h1v-2zM41 19v6h1v-6zM41 97v2h1v-2zM42 9v12h1v-12zM42 99v2h1v-2zM43 0v10h1v-10zM43 102v2h1v-2zM44 5v10h1v-10zM44 102v2h1v-2zM45 4v10h1v-10zM45 103v2h1v-2zM46 2v9h1v-9zM46 105v2h1v-2zM47 6v8h1v-8zM47 106v2h1v-2zM48 0v2h1v-2zM48 110v2h1v-2zM49 3v7h1v-7zM49 109v2h1v-2zM50 8v6h1v-6zM50 109v2h1v-2zM51 7v6h1v-6zM51 111v1h1v-1zM52 7v6h1v-6zM52 112v1h1v-1zM53 7v5h1v-5zM53 113v1h1v-1zM54 8v5h1v-5zM54 114v1h1v-1zM55 0v4h1v-4zM55 117v2h1v-2zM56 5v5h1v-5zM56 116v2h1v-2zM57 120v1h1v-1zM58 0v5h1v-5zM58 119v2h1v-2zM59 121v2h1v-2zM60 5v5h1v-5zM60 119v2h1v-2zM61 6v5h1v-5zM61 120v1h1v-1zM62 0v7h1v-7zM62 122v1h1v-1zM63 8v5h1v-5zM63 121v1h1v-1zM64 0v6h1v-6zM64 123v2h1v-2zM65 2v7h1v-7zM65 123v2h1v-2zM66 2v8h1v-8zM66 124v1h1v-1zM67 0v5h1v-5zM67 125v2h1v-2zM68 5v7h1v-7zM68 124v2h1v-2zM69 12v4h1v-4zM69 123v2h1v-2zM70 0v7h1v-7zM70 127v1h1v-1zM71 9v5h1v-5zM71 125v2h1v-2zM72 3v9h1v-9zM72 126v2h1v-2zM73 13v5h1v-5zM73 125v1h1v-1zM74 8v7h1v-7zM74 126v2h1v-2zM75 10v6h1v-6zM75 126v2h1v-2zM76 11v6h1v-6zM76 127v1h1v-1zM77 9v7h1v-7zM77 127v2h1v-2zM78 0v10h1v-10zM78 129v3h1v-3zM79 17v6h1v-6zM79 126v2h1v-2zM80 0v12h1v-12zM80 130v3h1v-3zM81 13v9h1v-9zM81 128v2h1v-2zM82 17v8h1v-8zM82 128v2h1v-2zM83 8v12h1v-12zM83 130v3h1v-3zM84 18v9h1v-9zM84 128v3h1v-3zM85 26v7h1v-7zM85 127v3h1v-3zM86 21v8h1v-8zM86 129v3h1v-3zM86 160v6h1v-6zM87 18v9h1v-9zM87 131v3h1v-3zM87 154v7h1v-7zM87 165v7h1v-7zM88 0v17h1v-17zM88 135v6h1v-6zM88 146v6h1v-6zM89 22v8h1v-8zM89 131v4h1v-4zM89 151v4h1v-4zM90 26v7h1v-7zM90 131v3h1v-3zM90 151v4h1v-4zM91 28v6h1v-6zM91 131v3h1v-3zM91 149v4h1v-4zM92 28v5h1v-5zM92 132v4h1v-4zM92 146v5h1v-5zM93 34v3h1v-3zM93 129v4h1v-4zM93 149v3h1v-3zM94 32v4h1v-4zM94 131v6h1v-6zM94 144v5h1v-5zM95 34v4h1v-4zM95 130v6h1v-6zM95 144v5h1v-5zM96 37v3h1v-3zM96 129v4h1v-4zM96 145v4h1v-4zM97 35v3h1v-3zM97 133v11h1v-11zM98 37v3h1v-3zM98 132v12h1v-12zM99 42v2h1v-2zM99 126v3h1v-3zM99 145v3h1v-3zM100 41v2h1v-2zM100 128v16h1v-16zM101 38v3h1v-3zM102 41v3h1v-3zM103 44v2h1v-2zM103 130v7h1v-7zM104 46v2h1v-2zM104 127v11h1v-11zM105 45v3h1v-3zM106 46v2h1v-2zM107 47v3h1v-3zM108 51v3h1v-3zM109 53v3h1v-3zM110 54v3h1v-3zM111 58v3h1v-3zM112 60v4h1v-4zM113 66v3h1v-3zM113 117v10h1v-10zM114 66v4h1v-4zM115 71v2h1v-2zM115 114v11h1v-11zM116 74v2h1v-2zM116 112v14h1v-14zM117 75v2h1v-2zM117 111v13h1v-13zM118 75v3h1v-3zM118 114v5h1v-5zM119 80v3h1v-3zM119 103v7h1v-7zM119 121v4h1v-4zM120 80v2h1v-2zM120 109v10h1v-10zM121 85v24h1v-24zM121 116v5h1v-5zM122 86v31h1v-31zM123 89v23h1v-23zM124 113v5h1v-5zM125 113v4h1v-4zM126 112v4h1v-4zM127 112v4h1v-4zM128 110v3h1v-3zM129 110v3h1v-3zM130 110v3h1v-3zM131 113v2h1v-2zM132 111v2h1v-2zM133 109v2h1v-2zM134 110v2h1v-2zM135 108v2h1v-2zM136 107v2h1v-2zM137 108v2h1v-2zM138 106v2h1v-2zM139 104v2h1v-2zM140 104v2h1v-2zM141 104v2h1v-2zM142 103v2h1v-2zM143 103v2h1v-2zM144 100v2h1v-2zM145 101v1h1v-1zM146 98v3h1v-3zM147 96v2h1v-2zM148 95v3h1v-3zM149 93v2h1v-2zM150 89v2h1v-2zM151 90v2h1v-2zM152 85v3h1v-3zM153 86v2h1v-2zM154 85v2h1v-2zM155 84v2h1v-2zM156 82v2h1v-2zM157 82v2h1v-2zM158 82v1h1v-1zM159 83v1h1v-1zM160 81v1h1v-1zM161 81v2h1v-2zM162 81v1h1v-1zM163 80v1h1v-1zM164 84v2h1v-2zM165 81v2h1v-2zM166 80v2h1v-2zM167 84v2h1v-2zM168 81v2h1v-2zM169 83v3h1v-3zM170 85v3h1v-3zM171 83v3h1v-3z"/>
<path fill="#ffb700" stroke="#ffb700" d="M0 41v9h1v-9zM0 77v4h1v-4zM1 21v23h1v-23zM1 80v3h1v-3zM2 16v26h1v-26zM2 81v3h1v-3zM3 0v11h1v-11zM3 84v3h1v-3zM4 11v30h1v-30zM4 81v3h1v-3zM5 10v31h1v-31zM5 81v3h1v-3zM6 13v31h1v-31zM6 81v2h1v-2zM7 6v33h1v-33zM7 82v2h1v-2zM8 13v32h1v-32zM8 81v2h1v-2zM9 8v35h1v-35zM9 82v2h1v-2zM10 0v18h1v-18zM10 83v2h1v-2zM11 41v10h1v-10zM11 80v2h1v-2zM12 41v10h1v-10zM12 80v2h1v-2zM13 47v7h1v-7zM13 80v2h1v-2zM14 14v33h1v-33zM14 82v2h1v-2zM15 9v35h1v-35zM15 83v2h1v-2zM16 7v35h1v-35zM16 84v2h1v-2zM17 0v14h1v-14zM17 86v2h1v-2zM18 24v8h1v-8zM18 41v7h1v-7zM18 83v2h1v-2zM19 0v19h1v-19zM19 86v3h1v-3zM20 0v18h1v-18zM20 87v2h1v-2zM21 11v31h1v-31zM21 86v3h1v-3zM22 41v5h1v-5zM22 85v2h1v-2zM23 15v27h1v-27zM23 87v2h1v-2zM24 0v19h1v-19zM24 89v2h1v-2zM25 4v18h1v-18zM25 89v2h1v-2zM26 19v22h1v-22zM26 88v2h1v-2zM27 10v17h1v-17zM27 90v2h1v-2zM28 2v19h1v-19zM28 91v2h1v-2zM29 9v15h1v-15zM29 91v2h1v-2zM30 19v11h1v-11zM30 91v1h1v-1zM31 26v10h1v-10zM31 90v2h1v-2zM32 0v14h1v-14zM32 94v2h1v-2zM33 1v18h1v-18zM33 94v2h1v-2zM34 0v17h1v-17zM34 95v1h1v-1zM35 97v1h1v-1zM36 0v14h1v-14zM36 96v2h1v-2zM37 0v11h1v-11zM37 97v1h1v-1zM38 15v9h1v-9zM38 96v1h1v-1zM39 1v15h1v-15zM39 97v2h1v-2zM40 0v1h1v-1zM40 100v2h1v-2zM41 6v13h1v-13zM41 99v1h1v-1zM42 0v9h1v-9zM42 101v2h1v-2zM43 104v2h1v-2zM44 0v5h1v-5zM44 104v2h1v-2zM45 0v4h1v-4zM45 105v2h1v-2zM46 0v2h1v-2zM46 107v2h1v-2zM47 0v6h1v-6zM47 108v2h1v-2zM48 112v2h1v-2zM49 0v3h1v-3zM49 111v2h1v-2zM50 0v8h1v-8zM50 111v2h1v-2zM51 0v7h1v-7zM51 112v2h1v-2zM52 0v7h1v-7zM52 113v2h1v-2zM53 0v7h1v-7zM53 114v2h1v-2zM54 1v7h1v-7zM54 115v2h1v-2zM55 119v1h1v-1zM56 0v5h1v-5zM56 118v1h1v-1zM57 121v2h1v-2zM58 121v1h1v-1zM59 123v2h1v-2zM60 0v5h1v-5zM60 121v1h1v-1zM61 0v6h1v-6zM61 121v2h1v-2zM62 123v2h1v-2zM63 2v6h1v-6zM63 122v2h1v-2zM64 125v2h1v-2zM65 0v2h1v-2zM65 125v1h1v-1zM66 0v2h1v-2zM66 125v2h1v-2zM67 127v2h1v-2zM68 0v5h1v-5zM68 126v2h1v-2zM69 4v8h1v-8zM69 125v2h1v-2zM70 128v2h1v-2zM71 0v9h1v-9zM71 127v1h1v-1zM72 0v3h1v-3zM72 128v2h1v-2zM73 6v7h1v-7zM73 126v2h1v-2zM74 0v8h1v-8zM74 128v2h1v-2zM75 0v10h1v-10zM75 128v2h1v-2zM76 0v11h1v-11zM76 128v3h1v-3zM77 0v9h1v-9zM77 129v3h1v-3zM78 132v3h1v-3zM79 7v10h1v-10zM79 128v2h1v-2zM80 133v3h1v-3zM81 0v13h1v-13zM81 130v3h1v-3zM82 4v13h1v-13zM82 130v3h1v-3zM83 0v8h1v-8zM83 133v3h1v-3zM83 155v14h1v-14zM84 2v16h1v-16zM84 131v3h1v-3zM84 158v9h1v-9zM85 16v10h1v-10zM85 130v2h1v-2zM85 161v3h1v-3zM86 7v14h1v-14zM86 132v3h1v-3zM86 154v6h1v-6zM86 166v6h1v-6zM87 0v18h1v-18zM87 134v4h1v-4zM87 150v4h1v-4zM88 141v5h1v-5zM89 5v17h1v-17zM89 135v6h1v-6zM89 145v6h1v-6zM90 15v11h1v-11zM90 134v7h1v-7zM90 145v6h1v-6zM91 18v10h1v-10zM91 134v15h1v-15zM92 18v10h1v-10zM92 136v10h1v-10zM93 28v6h1v-6zM93 133v16h1v-16zM94 25v7h1v-7zM94 137v7h1v-7zM95 29v5h1v-5zM95 136v8h1v-8zM96 33v4h1v-4zM96 133v12h1v-12zM97 30v5h1v-5zM98 33v4h1v-4zM99 39v3h1v-3zM99 129v16h1v-16zM100 38v3h1v-3zM101 35v3h1v-3zM102 39v2h1v-2zM103 41v3h1v-3zM104 43v3h1v-3zM105 43v2h1v-2zM106 43v3h1v-3zM107 45v2h1v-2zM108 49v2h1v-2zM109 50v3h1v-3zM110 51v3h1v-3zM111 54v4h1v-4zM112 57v3h1v-3zM113 63v3h1v-3zM114 63v3h1v-3zM115 69v2h1v-2zM116 72v2h1v-2zM117 73v2h1v-2zM118 73v2h1v-2zM119 78v2h1v-2zM119 110v11h1v-11zM120 77v3h1v-3zM121 81v4h1v-4zM121 109v7h1v-7zM122 82v4h1v-4zM123 83v6h1v-6zM124 104v9h1v-9zM125 107v6h1v-6zM126 107v5h1v-5zM127 109v3h1v-3zM128 107v3h1v-3zM129 107v3h1v-3zM130 108v2h1v-2zM131 111v2h1v-2zM132 109v2h1v-2zM133 107v2h1v-2zM134 108v2h1v-2zM135 106v2h1v-2zM136 105v2h1v-2zM137 106v2h1v-2zM138 104v2h1v-2zM139 102v2h1v-2zM140 102v2h1v-2zM141 102v2h1v-2zM142 101v2h1v-2zM143 102v1h1v-1zM144 97v3h1v-3zM145 98v3h1v-3zM146 96v2h1v-2zM147 93v3h1v-3zM148 92v3h1v-3zM149 90v3h1v-3zM150 86v3h1v-3zM151 88v2h1v-2zM152 83v2h1v-2zM153 84v2h1v-2zM154 83v2h1v-2zM155 83v1h1v-1zM156 81v1h1v-1zM157 81v1h1v-1zM158 80v2h1v-2zM159 81v2h1v-2zM160 79v2h1v-2zM161 80v1h1v-1zM162 79v2h1v-2zM163 78v2h1v-2zM164 82v2h1v-2zM165 79v2h1v-2zM166 78v2h1v-2zM167 82v2h1v-2zM168 79v2h1v-2zM169 81v2h1v-2zM170 82v3h1v-3zM171 80v3h1v-3z"/>
<path fill="#ffa500" stroke="#ffa500" d="M0 16v25h1v-25zM0 81v3h1v-3zM1 0v21h1v-21zM1 83v4h1v-4zM2 0v16h1v-16zM2 84v3h1v-3zM3 87v4h1v-4zM4 0v11h1v-11zM4 84v3h1v-3zM5 0v10h1v-10zM5 84v3h1v-3zM6 0v13h1v-13zM6 83v3h1v-3zM7 0v6h1v-6zM7 84v3h1v-3zM8 0v13h1v-13zM8 83v3h1v-3zM9 0v8h1v-8zM9 84v2h1v-2zM10 85v3h1v-3zM11 4v37h1v-37zM11 82v2h1v-2zM12 4v37h1v-37zM12 82v3h1v-3zM13 14v33h1v-33zM13 82v2h1v-2zM14 0v14h1v-14zM14 84v3h1v-3zM15 0v9h1v-9zM15 85v3h1v-3zM16 0v7h1v-7zM16 86v3h1v-3zM17 88v3h1v-3zM18 6v18h1v-18zM18 32v9h1v-9zM18 85v2h1v-2zM19 89v2h1v-2zM20 89v3h1v-3zM21 0v11h1v-11zM21 89v2h1v-2zM22 11v30h1v-30zM22 87v2h1v-2zM23 0v15h1v-15zM23 89v2h1v-2zM24 91v2h1v-2zM25 0v4h1v-4zM25 91v2h1v-2zM26 0v19h1v-19zM26 90v2h1v-2zM27 0v10h1v-10zM27 92v2h1v-2zM28 0v2h1v-2zM28 93v2h1v-2zM29 0v9h1v-9zM29 93v2h1v-2zM30 0v19h1v-19zM30 92v2h1v-2zM31 14v12h1v-12zM31 92v1h1v-1zM32 96v1h1v-1zM33 0v1h1v-1zM33 96v1h1v-1zM34 96v2h1v-2zM35 98v2h1v-2zM36 98v1h1v-1zM37 98v2h1v-2zM38 0v15h1v-15zM38 97v2h1v-2zM39 0v1h1v-1zM39 99v2h1v-2zM40 102v1h1v-1zM41 0v6h1v-6zM41 100v2h1v-2zM42 103v2h1v-2zM43 106v2h1v-2zM44 106v2h1v-2zM45 107v2h1v-2zM46 109v2h1v-2zM47 110v1h1v-1zM48 114v1h1v-1zM49 113v1h1v-1zM50 113v1h1v-1zM51 114v2h1v-2zM52 115v2h1v-2zM53 116v2h1v-2zM54 0v1h1v-1zM54 117v1h1v-1zM55 120v2h1v-2zM56 119v2h1v-2zM57 123v2h1v-2zM58 122v2h1v-2zM59 125v1h1v-1zM60 122v2h1v-2zM61 123v1h1v-1zM62 125v2h1v-2zM63 0v2h1v-2zM63 124v1h1v-1zM64 127v2h1v-2zM65 126v2h1v-2zM66 127v2h1v-2zM67 129v2h1v-2zM68 128v2h1v-2zM69 0v4h1v-4zM69 127v1h1v-1zM70 130v3h1v-3zM71 128v2h1v-2zM72 130v3h1v-3zM73 0v6h1v-6zM73 128v2h1v-2zM74 130v3h1v-3zM75 130v3h1v-3zM76 131v2h1v-2zM77 132v3h1v-3zM78 135v5h1v-5zM78 151v17h1v-17zM79 0v7h1v-7zM79 130v3h1v-3zM80 136v6h1v-6zM80 149v23h1v-23zM81 133v3h1v-3zM81 156v11h1v-11zM82 0v4h1v-4zM82 133v3h1v-3zM82 156v12h1v-12zM83 136v6h1v-6zM83 149v6h1v-6zM83 169v3h1v-3zM84 0v2h1v-2zM84 134v4h1v-4zM84 152v6h1v-6zM84 167v5h1v-5zM85 0v16h1v-16zM85 132v4h1v-4zM85 154v7h1v-7zM85 164v8h1v-8zM86 0v7h1v-7zM86 135v6h1v-6zM86 148v6h1v-6zM87 138v12h1v-12zM89 0v5h1v-5zM89 141v4h1v-4zM90 0v15h1v-15zM90 141v4h1v-4zM91 0v18h1v-18zM92 0v18h1v-18zM93 19v9h1v-9zM94 14v11h1v-11zM95 21v8h1v-8zM96 27v6h1v-6zM97 22v8h1v-8zM98 27v6h1v-6zM99 36v3h1v-3zM100 35v3h1v-3zM101 31v4h1v-4zM102 36v3h1v-3zM103 38v3h1v-3zM104 41v2h1v-2zM105 40v3h1v-3zM106 41v2h1v-2zM107 42v3h1v-3zM108 46v3h1v-3zM109 47v3h1v-3zM110 48v3h1v-3zM111 51v3h1v-3zM112 53v4h1v-4zM113 59v4h1v-4zM114 59v4h1v-4zM115 65v4h1v-4zM116 69v3h1v-3zM117 71v2h1v-2zM118 71v2h1v-2zM119 76v2h1v-2zM120 75v2h1v-2zM121 79v2h1v-2zM122 79v3h1v-3zM123 80v3h1v-3zM124 90v14h1v-14zM125 98v9h1v-9zM126 101v6h1v-6zM127 104v5h1v-5zM128 103v4h1v-4zM129 103v4h1v-4zM130 105v3h1v-3zM131 108v3h1v-3zM132 106v3h1v-3zM133 104v3h1v-3zM134 105v3h1v-3zM135 104v2h1v-2zM136 103v2h1v-2zM137 104v2h1v-2zM138 102v2h1v-2zM139 100v2h1v-2zM140 100v2h1v-2zM141 100v2h1v-2zM142 99v2h1v-2zM143 99v3h1v-3zM144 95v2h1v-2zM145 95v3h1v-3zM146 93v3h1v-3zM147 90v3h1v-3zM148 90v2h1v-2zM149 87v3h1v-3zM150 84v2h1v-2zM151 85v3h1v-3zM152 81v2h1v-2zM153 82v2h1v-2zM154 81v2h1v-2zM155 81v2h1v-2zM156 79v2h1v-2zM157 79v2h1v-2zM158 79v1h1v-1zM159 80v1h1v-1zM160 78v1h1v-1zM161 78v2h1v-2zM162 78v1h1v-1zM163 77v1h1v-1zM164 81v1h1v-1zM165 78v1h1v-1zM166 76v2h1v-2zM167 80v2h1v-2zM168 77v2h1v-2zM169 79v2h1v-2zM170 80v2h1v-2zM171 78v2h1v-2z"/>
<path fill="#ff9300" stroke="#ff9300" d="M0 0v16h1v-16zM0 84v4h1v-4zM1 87v3h1v-3zM2 87v4h1v-4zM3 91v4h1v-4zM4 87v4h1v-4zM5 87v3h1v-3zM6 86v3h1v-3zM7 87v3h1v-3zM8 86v3h1v-3zM9 86v3h1v-3zM10 88v3h1v-3zM11 0v4h1v-4zM11 84v3h1v-3zM12 0v4h1v-4zM12 85v2h1v-2zM13 0v14h1v-14zM13 84v2h1v-2zM14 87v2h1v-2zM15 88v3h1v-3zM16 89v2h1v-2zM17 91v2h1v-2zM18 0v6h1v-6zM18 87v3h1v-3zM19 91v2h1v-2zM20 92v2h1v-2zM21 91v2h1v-2zM22 0v11h1v-11zM22 89v2h1v-2zM23 91v2h1v-2zM24 93v2h1v-2zM25 93v2h1v-2zM26 92v2h1v-2zM27 94v1h1v-1zM28 95v2h1v-2zM29 95v1h1v-1zM30 94v2h1v-2zM31 0v14h1v-14zM31 93v2h1v-2zM32 97v2h1v-2zM33 97v2h1v-2zM34 98v2h1v-2zM35 100v2h1v-2zM36 99v2h1v-2zM37 100v2h1v-2zM38 99v1h1v-1zM39 101v2h1v-2zM40 103v3h1v-3zM41 102v2h1v-2zM42 105v2h1v-2zM43 108v2h1v-2zM44 108v2h1v-2zM45 109v2h1v-2zM46 111v2h1v-2zM47 111v2h1v-2zM48 115v2h1v-2zM49 114v2h1v-2zM50 114v2h1v-2zM51 116v2h1v-2zM52 117v1h1v-1zM53 118v1h1v-1zM54 118v2h1v-2zM55 122v2h1v-2zM56 121v2h1v-2zM57 125v2h1v-2zM58 124v2h1v-2zM59 126v2h1v-2zM60 124v2h1v-2zM61 124v2h1v-2zM62 127v2h1v-2zM63 125v2h1v-2zM64 129v2h1v-2zM65 128v2h1v-2zM66 129v2h1v-2zM67 131v3h1v-3zM68 130v2h1v-2zM69 128v2h1v-2zM70 133v4h1v-4zM71 130v3h1v-3zM72 133v3h1v-3zM73 130v3h1v-3zM74 133v3h1v-3zM75 133v3h1v-3zM76 133v4h1v-4zM77 135v4h1v-4zM77 153v13h1v-13zM78 140v11h1v-11zM78 168v4h1v-4zM79 133v4h1v-4zM79 158v5h1v-5zM80 142v7h1v-7zM81 136v8h1v-8zM81 147v9h1v-9zM81 167v5h1v-5zM82 136v6h1v-6zM82 149v7h1v-7zM82 168v4h1v-4zM83 142v7h1v-7zM84 138v14h1v-14zM85 136v6h1v-6zM85 148v6h1v-6zM86 141v7h1v-7zM93 0v19h1v-19zM94 0v14h1v-14zM95 2v19h1v-19zM96 18v9h1v-9zM97 6v16h1v-16zM98 18v9h1v-9zM99 32v4h1v-4zM100 30v5h1v-5zM101 23v8h1v-8zM102 31v5h1v-5zM103 35v3h1v-3zM104 38v3h1v-3zM105 37v3h1v-3zM106 37v4h1v-4zM107 39v3h1v-3zM108 43v3h1v-3zM109 44v3h1v-3zM110 44v4h1v-4zM111 47v4h1v-4zM112 49v4h1v-4zM113 55v4h1v-4zM114 55v4h1v-4zM115 61v4h1v-4zM116 65v4h1v-4zM117 68v3h1v-3zM118 68v3h1v-3zM119 73v3h1v-3zM120 72v3h1v-3zM121 76v3h1v-3zM122 76v3h1v-3zM123 76v4h1v-4zM124 84v6h1v-6zM125 89v9h1v-9zM126 93v8h1v-8zM127 98v6h1v-6zM128 98v5h1v-5zM129 99v4h1v-4zM130 102v3h1v-3zM131 106v2h1v-2zM132 104v2h1v-2zM133 102v2h1v-2zM134 103v2h1v-2zM135 101v3h1v-3zM136 101v2h1v-2zM137 102v2h1v-2zM138 100v2h1v-2zM139 97v3h1v-3zM140 97v3h1v-3zM141 98v2h1v-2zM142 96v3h1v-3zM143 97v2h1v-2zM144 91v4h1v-4zM145 92v3h1v-3zM146 90v3h1v-3zM147 87v3h1v-3zM148 87v3h1v-3zM149 85v2h1v-2zM150 82v2h1v-2zM151 83v2h1v-2zM152 79v2h1v-2zM153 80v2h1v-2zM154 79v2h1v-2zM155 79v2h1v-2zM156 78v1h1v-1zM157 78v1h1v-1zM158 77v2h1v-2zM159 78v2h1v-2zM160 76v2h1v-2zM161 77v1h1v-1zM162 76v2h1v-2zM163 75v2h1v-2zM164 79v2h1v-2zM165 76v2h1v-2zM166 74v2h1v-2zM167 78v2h1v-2zM168 75v2h1v-2zM169 76v3h1v-3zM170 77v3h1v-3zM171 75v3h1v-3z"/>
<path fill="#ff8100" stroke="#ff8100" d="M0 88v3h1v-3zM1 90v4h1v-4zM2 91v3h1v-3zM3 95v3h1v-3zM4 91v3h1v-3zM5 90v4h1v-4zM6 89v4h1v-4zM7 90v4h1v-4zM8 89v4h1v-4zM9 89v4h1v-4zM10 91v4h1v-4zM11 87v3h1v-3zM12 87v3h1v-3zM13 86v3h1v-3zM14 89v3h1v-3zM15 91v3h1v-3zM16 91v3h1v-3zM17 93v3h1v-3zM18 90v2h1v-2zM19 93v3h1v-3zM20 94v2h1v-2zM21 93v2h1v-2zM22 91v2h1v-2zM23 93v2h1v-2zM24 95v2h1v-2zM25 95v2h1v-2zM26 94v2h1v-2zM27 95v2h1v-2zM28 97v1h1v-1zM29 96v2h1v-2zM30 96v2h1v-2zM31 95v2h1v-2zM32 99v2h1v-2zM33 99v2h1v-2zM34 100v1h1v-1zM35 102v2h1v-2zM36 101v2h1v-2zM37 102v2h1v-2zM38 100v2h1v-2zM39 103v2h1v-2zM40 106v2h1v-2zM41 104v2h1v-2zM42 107v2h1v-2zM43 110v2h1v-2zM44 110v2h1v-2zM45 111v2h1v-2zM46 113v2h1v-2zM47 113v2h1v-2zM48 117v3h1v-3zM49 116v2h1v-2zM50 116v2h1v-2zM51 118v1h1v-1zM52 118v2h1v-2zM53 119v2h1v-2zM54 120v2h1v-2zM55 124v2h1v-2zM56 123v1h1v-1zM57 127v2h1v-2zM58 126v2h1v-2zM59 128v3h1v-3zM60 126v2h1v-2zM61 126v2h1v-2zM62 129v2h1v-2zM63 127v2h1v-2zM64 131v3h1v-3zM65 130v3h1v-3zM66 131v3h1v-3zM67 134v5h1v-5zM68 132v3h1v-3zM69 130v3h1v-3zM70 137v28h1v-28zM71 133v4h1v-4zM72 136v30h1v-30zM73 133v3h1v-3zM74 136v31h1v-31zM75 136v32h1v-32zM76 137v33h1v-33zM77 139v14h1v-14zM77 166v6h1v-6zM79 137v21h1v-21zM79 163v9h1v-9zM81 144v3h1v-3zM82 142v7h1v-7zM85 142v6h1v-6zM95 0v2h1v-2zM96 0v18h1v-18zM97 0v6h1v-6zM98 0v18h1v-18zM99 26v6h1v-6zM100 22v8h1v-8zM101 4v19h1v-19zM102 24v7h1v-7zM103 30v5h1v-5zM104 34v4h1v-4zM105 34v3h1v-3zM106 34v3h1v-3zM107 35v4h1v-4zM108 40v3h1v-3zM109 41v3h1v-3zM110 41v3h1v-3zM111 44v3h1v-3zM112 45v4h1v-4zM113 51v4h1v-4zM114 50v5h1v-5zM115 57v4h1v-4zM116 61v4h1v-4zM117 64v4h1v-4zM118 63v5h1v-5zM119 71v2h1v-2zM120 69v3h1v-3zM121 73v3h1v-3zM122 73v3h1v-3zM123 73v3h1v-3zM124 80v4h1v-4zM125 84v5h1v-5zM126 87v6h1v-6zM127 92v6h1v-6zM128 93v5h1v-5zM129 95v4h1v-4zM130 98v4h1v-4zM131 103v3h1v-3zM132 101v3h1v-3zM133 99v3h1v-3zM134 101v2h1v-2zM135 99v2h1v-2zM136 98v3h1v-3zM137 100v2h1v-2zM138 97v3h1v-3zM139 94v3h1v-3zM140 94v3h1v-3zM141 95v3h1v-3zM142 93v3h1v-3zM143 94v3h1v-3zM144 88v3h1v-3zM145 89v3h1v-3zM146 87v3h1v-3zM147 84v3h1v-3zM148 84v3h1v-3zM149 82v3h1v-3zM150 80v2h1v-2zM151 81v2h1v-2zM152 78v1h1v-1zM153 78v2h1v-2zM154 78v1h1v-1zM155 78v1h1v-1zM156 76v2h1v-2zM157 76v2h1v-2zM158 76v1h1v-1zM159 77v1h1v-1zM160 74v2h1v-2zM161 75v2h1v-2zM162 75v1h1v-1zM163 73v2h1v-2zM164 77v2h1v-2zM165 74v2h1v-2zM166 72v2h1v-2zM167 76v2h1v-2zM168 72v3h1v-3zM169 74v2h1v-2zM170 75v2h1v-2zM171 72v3h1v-3z"/>
<path fill="#ff6f00" stroke="#ff6f00" d="M0 91v4h1v-4zM1 94v3h1v-3zM2 94v4h1v-4zM3 98v3h1v-3zM4 94v4h1v-4zM5 94v4h1v-4zM6 93v4h1v-4zM7 94v4h1v-4zM8 93v3h1v-3zM9 93v4h1v-4zM10 95v4h1v-4zM11 90v4h1v-4zM12 90v4h1v-4zM13 89v3h1v-3zM14 92v4h1v-4zM15 94v3h1v-3zM16 94v3h1v-3zM17 96v3h1v-3zM18 92v3h1v-3zM19 96v2h1v-2zM20 96v2h1v-2zM21 95v2h1v-2zM22 93v2h1v-2zM23 95v2h1v-2zM24 97v2h1v-2zM25 97v2h1v-2zM26 96v2h1v-2zM27 97v2h1v-2zM28 98v2h1v-2zM29 98v2h1v-2zM30 98v1h1v-1zM31 97v2h1v-2zM32 101v2h1v-2zM33 101v1h1v-1zM34 101v2h1v-2zM35 104v2h1v-2zM36 103v2h1v-2zM37 104v2h1v-2zM38 102v2h1v-2zM39 105v2h1v-2zM40 108v2h1v-2zM41 106v2h1v-2zM42 109v2h1v-2zM43 112v2h1v-2zM44 112v2h1v-2zM45 113v3h1v-3zM46 115v2h1v-2zM47 115v2h1v-2zM48 120v2h1v-2zM49 118v3h1v-3zM50 118v2h1v-2zM51 119v2h1v-2zM52 120v2h1v-2zM53 121v2h1v-2zM54 122v2h1v-2zM55 126v2h1v-2zM56 124v2h1v-2zM57 129v2h1v-2zM58 128v2h1v-2zM59 131v3h1v-3zM60 128v2h1v-2zM61 128v2h1v-2zM62 131v3h1v-3zM63 129v2h1v-2zM64 134v5h1v-5zM65 133v4h1v-4zM66 134v5h1v-5zM67 139v27h1v-27zM68 135v26h1v-26zM69 133v4h1v-4zM70 165v7h1v-7zM71 137v29h1v-29zM72 166v6h1v-6zM73 136v30h1v-30zM74 167v5h1v-5zM75 168v4h1v-4zM76 170v2h1v-2zM99 16v10h1v-10zM100 4v18h1v-18zM101 0v4h1v-4zM102 8v16h1v-16zM103 23v7h1v-7zM104 30v4h1v-4zM105 29v5h1v-5zM106 29v5h1v-5zM107 31v4h1v-4zM108 37v3h1v-3zM109 38v3h1v-3zM110 38v3h1v-3zM111 40v4h1v-4zM112 42v3h1v-3zM113 47v4h1v-4zM114 46v4h1v-4zM115 52v5h1v-5zM116 57v4h1v-4zM117 59v5h1v-5zM118 59v4h1v-4zM119 68v3h1v-3zM120 65v4h1v-4zM121 70v3h1v-3zM122 70v3h1v-3zM123 70v3h1v-3zM124 76v4h1v-4zM125 79v5h1v-5zM126 81v6h1v-6zM127 87v5h1v-5zM128 88v5h1v-5zM129 91v4h1v-4zM130 94v4h1v-4zM131 100v3h1v-3zM132 98v3h1v-3zM133 95v4h1v-4zM134 98v3h1v-3zM135 96v3h1v-3zM136 95v3h1v-3zM137 97v3h1v-3zM138 94v3h1v-3zM139 91v3h1v-3zM140 91v3h1v-3zM141 92v3h1v-3zM142 90v3h1v-3zM143 91v3h1v-3zM144 85v3h1v-3zM145 86v3h1v-3zM146 84v3h1v-3zM147 81v3h1v-3zM148 82v2h1v-2zM149 80v2h1v-2zM150 77v3h1v-3zM151 79v2h1v-2zM152 76v2h1v-2zM153 76v2h1v-2zM154 76v2h1v-2zM155 76v2h1v-2zM156 74v2h1v-2zM157 75v1h1v-1zM158 74v2h1v-2zM159 75v2h1v-2zM160 73v1h1v-1zM161 73v2h1v-2zM162 73v2h1v-2zM163 71v2h1v-2zM164 75v2h1v-2zM165 72v2h1v-2zM166 70v2h1v-2zM167 74v2h1v-2zM168 70v2h1v-2zM169 72v2h1v-2zM170 72v3h1v-3zM171 70v2h1v-2z"/>
<path fill="#ff5d00" stroke="#ff5d00" d="M0 95v3h1v-3zM1 97v3h1v-3zM2 98v2h1v-2zM3 101v2h1v-2zM4 98v3h1v-3zM5 98v3h1v-3zM6 97v3h1v-3zM7 98v3h1v-3zM8 96v4h1v-4zM9 97v3h1v-3zM10 99v3h1v-3zM11 94v3h1v-3zM12 94v3h1v-3zM13 92v4h1v-4zM14 96v3h1v-3zM15 97v3h1v-3zM16 97v3h1v-3zM17 99v2h1v-2zM18 95v2h1v-2zM19 98v3h1v-3zM20 98v3h1v-3zM21 97v2h1v-2zM22 95v2h1v-2zM23 97v2h1v-2zM24 99v2h1v-2zM25 99v2h1v-2zM26 98v2h1v-2zM27 99v2h1v-2zM28 100v2h1v-2zM29 100v2h1v-2zM30 99v2h1v-2zM31 99v1h1v-1zM32 103v2h1v-2zM33 102v2h1v-2zM34 103v2h1v-2zM35 106v2h1v-2zM36 105v2h1v-2zM37 106v2h1v-2zM38 104v2h1v-2zM39 107v2h1v-2zM40 110v2h1v-2zM41 108v3h1v-3zM42 111v2h1v-2zM43 114v3h1v-3zM44 114v2h1v-2zM45 116v2h1v-2zM46 117v3h1v-3zM47 117v3h1v-3zM48 122v3h1v-3zM49 121v2h1v-2zM50 120v2h1v-2zM51 121v3h1v-3zM52 122v2h1v-2zM53 123v2h1v-2zM54 124v2h1v-2zM55 128v3h1v-3zM56 126v3h1v-3zM57 131v4h1v-4zM58 130v3h1v-3zM59 134v6h1v-6zM60 130v2h1v-2zM61 130v3h1v-3zM62 134v5h1v-5zM63 131v3h1v-3zM64 139v25h1v-25zM65 137v26h1v-26zM66 139v27h1v-27zM67 166v6h1v-6zM68 161v8h1v-8zM69 137v28h1v-28zM71 166v6h1v-6zM73 166v6h1v-6zM99 0v16h1v-16zM100 0v4h1v-4zM102 0v8h1v-8zM103 0v23h1v-23zM104 22v8h1v-8zM105 20v9h1v-9zM106 21v8h1v-8zM107 25v6h1v-6zM108 33v4h1v-4zM109 34v4h1v-4zM110 34v4h1v-4zM111 37v3h1v-3zM112 38v4h1v-4zM113 43v4h1v-4zM114 41v5h1v-5zM115 47v5h1v-5zM116 52v5h1v-5zM117 55v4h1v-4zM118 54v5h1v-5zM119 63v5h1v-5zM120 61v4h1v-4zM121 67v3h1v-3zM122 66v4h1v-4zM123 66v4h1v-4zM124 72v4h1v-4zM125 75v4h1v-4zM126 76v5h1v-5zM127 81v6h1v-6zM128 82v6h1v-6zM129 86v5h1v-5zM130 90v4h1v-4zM131 96v4h1v-4zM132 94v4h1v-4zM133 92v3h1v-3zM134 95v3h1v-3zM135 93v3h1v-3zM136 92v3h1v-3zM137 94v3h1v-3zM138 91v3h1v-3zM139 87v4h1v-4zM140 87v4h1v-4zM141 88v4h1v-4zM142 87v3h1v-3zM143 87v4h1v-4zM144 81v4h1v-4zM145 83v3h1v-3zM146 81v3h1v-3zM147 79v2h1v-2zM148 79v3h1v-3zM149 78v2h1v-2zM150 75v2h1v-2zM151 77v2h1v-2zM152 74v2h1v-2zM153 75v1h1v-1zM154 74v2h1v-2zM155 74v2h1v-2zM156 72v2h1v-2zM157 73v2h1v-2zM158 72v2h1v-2zM159 73v2h1v-2zM160 71v2h1v-2zM161 72v1h1v-1zM162 71v2h1v-2zM163 69v2h1v-2zM164 74v1h1v-1zM165 70v2h1v-2zM166 68v2h1v-2zM167 71v3h1v-3zM168 67v3h1v-3zM169 69v3h1v-3zM170 70v2h1v-2zM171 67v3h1v-3z"/>
<path fill="#ff4f00" stroke="#ff4f00" d="M0 98v3h1v-3zM1 100v3h1v-3zM2 100v3h1v-3zM3 103v3h1v-3zM4 101v2h1v-2zM5 101v2h1v-2zM6 100v3h1v-3zM7 101v2h1v-2zM8 100v2h1v-2zM9 100v3h1v-3zM10 102v2h1v-2zM11 97v3h1v-3zM12 97v3h1v-3zM13 96v3h1v-3zM14 99v3h1v-3zM15 100v2h1v-2zM16 100v2h1v-2zM17 101v3h1v-3zM18 97v3h1v-3zM19 101v2h1v-2zM20 101v2h1v-2zM21 99v3h1v-3zM22 97v3h1v-3zM23 99v2h1v-2zM24 101v2h1v-2zM25 101v2h1v-2zM26 100v2h1v-2zM27 101v2h1v-2zM28 102v2h1v-2zM29 102v2h1v-2zM30 101v2h1v-2zM31 100v2h1v-2zM32 105v2h1v-2zM33 104v3h1v-3zM34 105v3h1v-3zM35 108v3h1v-3zM36 107v2h1v-2zM37 108v3h1v-3zM38 106v2h1v-2zM39 109v2h1v-2zM40 112v3h1v-3zM41 111v2h1v-2zM42 113v3h1v-3zM43 117v3h1v-3zM44 116v3h1v-3zM45 118v3h1v-3zM46 120v3h1v-3zM47 120v2h1v-2zM48 125v3h1v-3zM49 123v2h1v-2zM50 122v3h1v-3zM51 124v2h1v-2zM52 124v3h1v-3zM53 125v3h1v-3zM54 126v2h1v-2zM55 131v3h1v-3zM56 129v2h1v-2zM57 135v10h1v-10zM58 133v6h1v-6zM59 140v23h1v-23zM60 132v4h1v-4zM61 133v4h1v-4zM62 139v25h1v-25zM63 134v7h1v-7zM64 164v8h1v-8zM65 163v9h1v-9zM66 166v6h1v-6zM68 169v3h1v-3zM69 165v7h1v-7zM104 0v22h1v-22zM105 0v20h1v-20zM106 0v21h1v-21zM107 0v25h1v-25zM108 28v5h1v-5zM109 30v4h1v-4zM110 30v4h1v-4zM111 33v4h1v-4zM112 34v4h1v-4zM113 39v4h1v-4zM114 37v4h1v-4zM115 42v5h1v-5zM116 46v6h1v-6zM117 48v7h1v-7zM118 47v7h1v-7zM119 59v4h1v-4zM120 55v6h1v-6zM121 62v5h1v-5zM122 61v5h1v-5zM123 61v5h1v-5zM124 69v3h1v-3zM125 71v4h1v-4zM126 72v4h1v-4zM127 75v6h1v-6zM128 74v8h1v-8zM129 77v9h1v-9zM130 85v5h1v-5zM131 92v4h1v-4zM132 91v3h1v-3zM133 89v3h1v-3zM134 91v4h1v-4zM135 89v4h1v-4zM136 89v3h1v-3zM137 91v3h1v-3zM138 87v4h1v-4zM139 82v5h1v-5zM140 83v4h1v-4zM141 84v4h1v-4zM142 83v4h1v-4zM143 84v3h1v-3zM144 78v3h1v-3zM145 80v3h1v-3zM146 78v3h1v-3zM147 76v3h1v-3zM148 77v2h1v-2zM149 75v3h1v-3zM150 73v2h1v-2zM151 75v2h1v-2zM152 71v3h1v-3zM153 73v2h1v-2zM154 72v2h1v-2zM155 72v2h1v-2zM156 71v1h1v-1zM157 71v2h1v-2zM158 71v1h1v-1zM159 72v1h1v-1zM160 69v2h1v-2zM161 70v2h1v-2zM162 69v2h1v-2zM163 67v2h1v-2zM164 72v2h1v-2zM165 68v2h1v-2zM166 65v3h1v-3zM167 69v2h1v-2zM168 65v2h1v-2zM169 67v2h1v-2zM170 67v3h1v-3zM171 64v3h1v-3z"/>
<path fill="#ff4100" stroke="#ff4100" d="M0 101v2h1v-2zM1 103v2h1v-2zM2 103v3h1v-3zM3 106v3h1v-3zM4 103v3h1v-3zM5 103v3h1v-3zM6 103v2h1v-2zM7 103v3h1v-3zM8 102v3h1v-3zM9 103v2h1v-2zM10 104v3h1v-3zM11 100v3h1v-3zM12 100v3h1v-3zM13 99v3h1v-3zM14 102v2h1v-2zM15 102v3h1v-3zM16 102v3h1v-3zM17 104v2h1v-2zM18 100v2h1v-2zM19 103v2h1v-2zM20 103v2h1v-2zM21 102v2h1v-2zM22 100v2h1v-2zM23 101v3h1v-3zM24 103v3h1v-3zM25 103v2h1v-2zM26 102v2h1v-2zM27 103v2h1v-2zM28 104v3h1v-3zM29 104v2h1v-2zM30 103v2h1v-2zM31 102v2h1v-2zM32 107v2h1v-2zM33 107v2h1v-2zM34 108v2h1v-2zM35 111v3h1v-3zM36 109v3h1v-3zM37 111v2h1v-2zM38 108v3h1v-3zM39 111v3h1v-3zM40 115v3h1v-3zM41 113v2h1v-2zM42 116v2h1v-2zM43 120v3h1v-3zM44 119v3h1v-3zM45 121v3h1v-3zM46 123v3h1v-3zM47 122v3h1v-3zM48 128v4h1v-4zM49 125v3h1v-3zM50 125v2h1v-2zM51 126v3h1v-3zM52 127v2h1v-2zM53 128v2h1v-2zM54 128v3h1v-3zM55 134v8h1v-8zM56 131v4h1v-4zM57 145v21h1v-21zM58 139v21h1v-21zM59 163v9h1v-9zM60 136v20h1v-20zM61 137v23h1v-23zM62 164v8h1v-8zM63 141v25h1v-25zM108 0v28h1v-28zM109 0v13h1v-13zM109 21v9h1v-9zM110 0v16h1v-16zM110 21v9h1v-9zM111 0v3h1v-3zM111 28v5h1v-5zM112 30v4h1v-4zM113 35v4h1v-4zM114 33v4h1v-4zM115 38v4h1v-4zM116 41v5h1v-5zM117 43v5h1v-5zM118 41v6h1v-6zM119 53v6h1v-6zM120 47v8h1v-8zM121 57v5h1v-5zM122 55v6h1v-6zM123 54v7h1v-7zM124 64v5h1v-5zM125 66v5h1v-5zM126 67v5h1v-5zM127 70v5h1v-5zM128 69v5h1v-5zM129 70v7h1v-7zM130 74v11h1v-11zM131 89v3h1v-3zM132 87v4h1v-4zM133 83v6h1v-6zM134 88v3h1v-3zM135 84v5h1v-5zM136 84v5h1v-5zM137 87v4h1v-4zM138 81v6h1v-6zM139 75v7h1v-7zM140 77v6h1v-6zM141 79v5h1v-5zM142 78v5h1v-5zM143 80v4h1v-4zM144 74v4h1v-4zM145 76v4h1v-4zM146 75v3h1v-3zM147 73v3h1v-3zM148 74v3h1v-3zM149 73v2h1v-2zM150 70v3h1v-3zM151 73v2h1v-2zM152 69v2h1v-2zM153 71v2h1v-2zM154 70v2h1v-2zM155 70v2h1v-2zM156 68v3h1v-3zM157 69v2h1v-2zM158 69v2h1v-2zM159 70v2h1v-2zM160 67v2h1v-2zM161 68v2h1v-2zM162 67v2h1v-2zM163 65v2h1v-2zM164 70v2h1v-2zM165 65v3h1v-3zM166 63v2h1v-2zM167 67v2h1v-2zM168 62v3h1v-3zM169 64v3h1v-3zM170 64v3h1v-3zM171 61v3h1v-3z"/>
<path fill="#ff3300" stroke="#ff3300" d="M0 103v3h1v-3zM1 105v3h1v-3zM2 106v2h1v-2zM3 109v2h1v-2zM4 106v2h1v-2zM5 106v2h1v-2zM6 105v3h1v-3zM7 106v2h1v-2zM8 105v2h1v-2zM9 105v3h1v-3zM10 107v2h1v-2zM11 103v3h1v-3zM12 103v3h1v-3zM13 102v2h1v-2zM14 104v2h1v-2zM15 105v2h1v-2zM16 105v2h1v-2zM17 106v3h1v-3zM18 102v3h1v-3zM19 105v3h1v-3zM20 105v3h1v-3zM21 104v3h1v-3zM22 102v2h1v-2zM23 104v2h1v-2zM24 106v2h1v-2zM25 105v3h1v-3zM26 104v2h1v-2zM27 105v3h1v-3zM28 107v2h1v-2zM29 106v3h1v-3zM30 105v3h1v-3zM31 104v2h1v-2zM32 109v3h1v-3zM33 109v3h1v-3zM34 110v3h1v-3zM35 114v3h1v-3zM36 112v3h1v-3zM37 113v3h1v-3zM38 111v2h1v-2zM39 114v3h1v-3zM40 118v4h1v-4zM41 115v3h1v-3zM42 118v4h1v-4zM43 123v4h1v-4zM44 122v4h1v-4zM45 124v3h1v-3zM46 126v4h1v-4zM47 125v4h1v-4zM48 132v6h1v-6zM49 128v4h1v-4zM50 127v3h1v-3zM51 129v3h1v-3zM52 129v4h1v-4zM53 130v4h1v-4zM54 131v3h1v-3zM55 142v22h1v-22zM56 135v10h1v-10zM57 166v6h1v-6zM58 160v12h1v-12zM60 156v14h1v-14zM61 160v12h1v-12zM63 166v6h1v-6zM109 13v8h1v-8zM110 16v5h1v-5zM111 3v25h1v-25zM112 0v18h1v-18zM112 23v7h1v-7zM113 31v4h1v-4zM114 0v8h1v-8zM114 29v4h1v-4zM115 34v4h1v-4zM116 37v4h1v-4zM117 38v5h1v-5zM118 36v5h1v-5zM119 45v8h1v-8zM120 40v7h1v-7zM121 49v8h1v-8zM122 46v9h1v-9zM123 44v10h1v-10zM124 59v5h1v-5zM125 61v5h1v-5zM126 62v5h1v-5zM127 65v5h1v-5zM128 64v5h1v-5zM129 65v5h1v-5zM130 68v6h1v-6zM131 82v7h1v-7zM132 76v11h1v-11zM133 71v12h1v-12zM134 79v9h1v-9zM135 73v11h1v-11zM136 74v10h1v-10zM137 81v6h1v-6zM138 74v7h1v-7zM139 69v6h1v-6zM140 72v5h1v-5zM141 74v5h1v-5zM142 74v4h1v-4zM143 76v4h1v-4zM144 70v4h1v-4zM145 73v3h1v-3zM146 72v3h1v-3zM147 70v3h1v-3zM148 71v3h1v-3zM149 70v3h1v-3zM150 68v2h1v-2zM151 70v3h1v-3zM152 67v2h1v-2zM153 68v3h1v-3zM154 68v2h1v-2zM155 68v2h1v-2zM156 66v2h1v-2zM157 67v2h1v-2zM158 66v3h1v-3zM159 67v3h1v-3zM160 64v3h1v-3zM161 65v3h1v-3zM162 64v3h1v-3zM163 62v3h1v-3zM164 68v2h1v-2zM165 63v2h1v-2zM166 60v3h1v-3zM167 64v3h1v-3zM168 59v3h1v-3zM169 61v3h1v-3zM170 61v3h1v-3zM171 58v3h1v-3z"/>
<path fill="#ff2600" stroke="#ff2600" d="M0 106v3h1v-3zM1 108v3h1v-3zM2 108v3h1v-3zM3 111v3h1v-3zM4 108v3h1v-3zM5 108v3h1v-3zM6 108v2h1v-2zM7 108v3h1v-3zM8 107v3h1v-3zM9 108v2h1v-2zM10 109v3h1v-3zM11 106v2h1v-2zM12 106v2h1v-2zM13 104v3h1v-3zM14 106v3h1v-3zM15 107v3h1v-3zM16 107v3h1v-3zM17 109v2h1v-2zM18 105v2h1v-2zM19 108v2h1v-2zM20 108v3h1v-3zM21 107v2h1v-2zM22 104v3h1v-3zM23 106v3h1v-3zM24 108v3h1v-3zM25 108v3h1v-3zM26 106v3h1v-3zM27 108v2h1v-2zM28 109v3h1v-3zM29 109v2h1v-2zM30 108v2h1v-2zM31 106v3h1v-3zM32 112v3h1v-3zM33 112v3h1v-3zM34 113v3h1v-3zM35 117v4h1v-4zM36 115v3h1v-3zM37 116v4h1v-4zM38 113v3h1v-3zM39 117v3h1v-3zM40 122v5h1v-5zM41 118v4h1v-4zM42 122v5h1v-5zM43 127v7h1v-7zM44 126v5h1v-5zM45 127v5h1v-5zM46 130v5h1v-5zM47 129v4h1v-4zM48 138v15h1v-15zM49 132v7h1v-7zM50 130v5h1v-5zM51 132v6h1v-6zM52 133v6h1v-6zM53 134v9h1v-9zM54 134v10h1v-10zM55 164v8h1v-8zM56 145v21h1v-21zM60 170v2h1v-2zM112 18v5h1v-5zM113 0v15h1v-15zM113 25v6h1v-6zM114 8v21h1v-21zM115 0v8h1v-8zM115 30v4h1v-4zM116 33v4h1v-4zM117 33v5h1v-5zM118 0v6h1v-6zM118 31v5h1v-5zM119 39v6h1v-6zM120 35v5h1v-5zM121 41v8h1v-8zM122 38v8h1v-8zM123 36v8h1v-8zM124 50v9h1v-9zM125 55v6h1v-6zM126 56v6h1v-6zM127 60v5h1v-5zM128 58v6h1v-6zM129 60v5h1v-5zM130 63v5h1v-5zM131 71v11h1v-11zM132 68v8h1v-8zM133 65v6h1v-6zM134 69v10h1v-10zM135 67v6h1v-6zM136 67v7h1v-7zM137 73v8h1v-8zM138 68v6h1v-6zM139 64v5h1v-5zM140 66v6h1v-6zM141 69v5h1v-5zM142 69v5h1v-5zM143 72v4h1v-4zM144 66v4h1v-4zM145 70v3h1v-3zM146 68v4h1v-4zM147 67v3h1v-3zM148 69v2h1v-2zM149 68v2h1v-2zM150 65v3h1v-3zM151 68v2h1v-2zM152 64v3h1v-3zM153 66v2h1v-2zM154 65v3h1v-3zM155 66v2h1v-2zM156 64v2h1v-2zM157 64v3h1v-3zM158 64v2h1v-2zM159 65v2h1v-2zM160 62v2h1v-2zM161 63v2h1v-2zM162 62v2h1v-2zM163 59v3h1v-3zM164 65v3h1v-3zM165 60v3h1v-3zM166 57v3h1v-3zM167 61v3h1v-3zM168 56v3h1v-3zM169 58v3h1v-3zM170 59v2h1v-2zM171 55v3h1v-3z"/>
<path fill="#ff1800" stroke="#ff1800" d="M0 109v2h1v-2zM1 111v2h1v-2zM2 111v3h1v-3zM3 114v3h1v-3zM4 111v3h1v-3zM5 111v3h1v-3zM6 110v3h1v-3zM7 111v3h1v-3zM8 110v2h1v-2zM9 110v3h1v-3zM10 112v2h1v-2zM11 108v3h1v-3zM12 108v2h1v-2zM13 107v2h1v-2zM14 109v2h1v-2zM15 110v2h1v-2zM16 110v2h1v-2zM17 111v3h1v-3zM18 107v3h1v-3zM19 110v3h1v-3zM20 111v3h1v-3zM21 109v3h1v-3zM22 107v2h1v-2zM23 109v2h1v-2zM24 111v3h1v-3zM25 111v3h1v-3zM26 109v3h1v-3zM27 110v3h1v-3zM28 112v3h1v-3zM29 111v4h1v-4zM30 110v3h1v-3zM31 109v2h1v-2zM32 115v4h1v-4zM33 115v3h1v-3zM34 116v4h1v-4zM35 121v7h1v-7zM36 118v5h1v-5zM37 120v5h1v-5zM38 116v4h1v-4zM39 120v6h1v-6zM40 127v8h1v-8zM41 122v5h1v-5zM42 127v6h1v-6zM43 134v9h1v-9zM44 131v7h1v-7zM45 132v8h1v-8zM46 135v11h1v-11zM47 133v9h1v-9zM48 153v19h1v-19zM49 139v15h1v-15zM50 135v10h1v-10zM51 138v15h1v-15zM52 139v17h1v-17zM53 143v19h1v-19zM54 144v21h1v-21zM56 166v6h1v-6zM113 15v10h1v-10zM115 8v22h1v-22zM116 0v13h1v-13zM116 28v5h1v-5zM117 0v12h1v-12zM117 29v4h1v-4zM118 6v12h1v-12zM118 26v5h1v-5zM119 34v5h1v-5zM120 0v11h1v-11zM120 30v5h1v-5zM121 35v6h1v-6zM122 0v6h1v-6zM122 32v6h1v-6zM123 0v10h1v-10zM123 30v6h1v-6zM124 39v11h1v-11zM125 42v13h1v-13zM126 43v13h1v-13zM127 51v9h1v-9zM128 45v13h1v-13zM129 50v10h1v-10zM130 57v6h1v-6zM131 66v5h1v-5zM132 63v5h1v-5zM133 59v6h1v-6zM134 64v5h1v-5zM135 61v6h1v-6zM136 61v6h1v-6zM137 66v7h1v-7zM138 62v6h1v-6zM139 57v7h1v-7zM140 61v5h1v-5zM141 64v5h1v-5zM142 64v5h1v-5zM143 67v5h1v-5zM144 61v5h1v-5zM145 66v4h1v-4zM146 65v3h1v-3zM147 63v4h1v-4zM148 65v4h1v-4zM149 64v4h1v-4zM150 61v4h1v-4zM151 65v3h1v-3zM152 61v3h1v-3zM153 63v3h1v-3zM154 63v2h1v-2zM155 63v3h1v-3zM156 61v3h1v-3zM157 62v2h1v-2zM158 61v3h1v-3zM159 63v2h1v-2zM160 59v3h1v-3zM161 60v3h1v-3zM162 59v3h1v-3zM163 56v3h1v-3zM164 62v3h1v-3zM165 57v3h1v-3zM166 53v4h1v-4zM167 58v3h1v-3zM168 53v3h1v-3zM169 55v3h1v-3zM170 55v4h1v-4zM171 52v3h1v-3z"/>
<path fill="#ff0b00" stroke="#ff0b00" d="M0 111v3h1v-3zM1 113v3h1v-3zM2 114v3h1v-3zM3 117v3h1v-3zM4 114v3h1v-3zM5 114v3h1v-3zM6 113v3h1v-3zM7 114v3h1v-3zM8 112v3h1v-3zM9 113v3h1v-3zM10 114v3h1v-3zM11 111v2h1v-2zM12 110v3h1v-3zM13 109v3h1v-3zM14 111v3h1v-3zM15 112v3h1v-3zM16 112v3h1v-3zM17 114v3h1v-3zM18 110v2h1v-2zM19 113v4h1v-4zM20 114v3h1v-3zM21 112v3h1v-3zM22 109v3h1v-3zM23 111v4h1v-4zM24 114v4h1v-4zM25 114v4h1v-4zM26 112v3h1v-3zM27 113v4h1v-4zM28 115v4h1v-4zM29 115v3h1v-3zM30 113v4h1v-4zM31 111v4h1v-4zM32 119v6h1v-6zM33 118v6h1v-6zM34 120v6h1v-6zM35 128v13h1v-13zM36 123v9h1v-9zM37 125v10h1v-10zM38 120v5h1v-5zM39 126v8h1v-8zM40 135v13h1v-13zM41 127v7h1v-7zM42 133v9h1v-9zM43 143v16h1v-16zM44 138v14h1v-14zM45 140v15h1v-15zM46 146v16h1v-16zM47 142v16h1v-16zM49 154v18h1v-18zM50 145v18h1v-18zM51 153v19h1v-19zM52 156v16h1v-16zM53 162v10h1v-10zM54 165v7h1v-7zM116 13v15h1v-15zM117 12v17h1v-17zM118 18v8h1v-8zM119 0v11h1v-11zM119 29v5h1v-5zM120 11v19h1v-19zM121 0v12h1v-12zM121 29v6h1v-6zM122 6v12h1v-12zM122 25v7h1v-7zM123 10v20h1v-20zM124 0v5h1v-5zM124 32v7h1v-7zM125 0v2h1v-2zM125 34v8h1v-8zM126 0v2h1v-2zM126 34v9h1v-9zM127 37v14h1v-14zM128 0v2h1v-2zM128 34v11h1v-11zM129 34v16h1v-16zM130 39v18h1v-18zM131 60v6h1v-6zM132 57v6h1v-6zM133 46v13h1v-13zM134 58v6h1v-6zM135 53v8h1v-8zM136 54v7h1v-7zM137 61v5h1v-5zM138 54v8h1v-8zM139 46v11h1v-11zM140 53v8h1v-8zM141 58v6h1v-6zM142 58v6h1v-6zM143 62v5h1v-5zM144 54v7h1v-7zM145 61v5h1v-5zM146 59v6h1v-6zM147 57v6h1v-6zM148 61v4h1v-4zM149 60v4h1v-4zM150 57v4h1v-4zM151 62v3h1v-3zM152 57v4h1v-4zM153 60v3h1v-3zM154 60v3h1v-3zM155 60v3h1v-3zM156 58v3h1v-3zM157 59v3h1v-3zM158 58v3h1v-3zM159 60v3h1v-3zM160 56v3h1v-3zM161 57v3h1v-3zM162 55v4h1v-4zM163 52v4h1v-4zM164 60v2h1v-2zM165 53v4h1v-4zM166 48v5h1v-5zM167 55v3h1v-3zM168 48v5h1v-5zM169 51v4h1v-4zM170 52v3h1v-3zM171 47v5h1v-5z"/>
<path fill="#ff0505" stroke="#ff0505" d="M0 114v3h1v-3zM1 116v4h1v-4zM2 117v3h1v-3zM3 120v5h1v-5zM4 117v3h1v-3zM5 117v3h1v-3zM6 116v3h1v-3zM7 117v3h1v-3zM8 115v4h1v-4zM9 116v3h1v-3zM10 117v4h1v-4zM11 113v3h1v-3zM12 113v3h1v-3zM13 112v2h1v-2zM14 114v3h1v-3zM15 115v3h1v-3zM16 115v4h1v-4zM17 117v5h1v-5zM18 112v4h1v-4zM19 117v4h1v-4zM20 117v4h1v-4zM21 115v4h1v-4zM22 112v3h1v-3zM23 115v4h1v-4zM24 118v5h1v-5zM25 118v4h1v-4zM26 115v4h1v-4zM27 117v5h1v-5zM28 119v6h1v-6zM29 118v6h1v-6zM30 117v4h1v-4zM31 115v3h1v-3zM32 125v12h1v-12zM33 124v10h1v-10zM34 126v13h1v-13zM35 141v18h1v-18zM36 132v14h1v-14zM37 135v14h1v-14zM38 125v9h1v-9zM39 134v12h1v-12zM40 148v20h1v-20zM41 134v11h1v-11zM42 142v16h1v-16zM43 159v13h1v-13zM44 152v20h1v-20zM45 155v17h1v-17zM46 162v10h1v-10zM47 158v14h1v-14zM50 163v9h1v-9zM119 11v18h1v-18zM121 12v17h1v-17zM122 18v7h1v-7zM124 5v27h1v-27zM125 2v14h1v-14zM125 26v8h1v-8zM126 2v15h1v-15zM126 24v10h1v-10zM127 0v11h1v-11zM127 28v9h1v-9zM128 2v32h1v-32zM129 0v34h1v-34zM130 0v8h1v-8zM130 29v10h1v-10zM131 51v9h1v-9zM132 38v19h1v-19zM133 0v5h1v-5zM133 30v16h1v-16zM134 41v17h1v-17zM135 34v19h1v-19zM136 35v19h1v-19zM137 52v9h1v-9zM138 38v16h1v-16zM139 0v5h1v-5zM139 27v19h1v-19zM140 38v15h1v-15zM141 49v9h1v-9zM142 50v8h1v-8zM143 55v7h1v-7zM144 46v8h1v-8zM145 54v7h1v-7zM146 53v6h1v-6zM147 51v6h1v-6zM148 55v6h1v-6zM149 55v5h1v-5zM150 50v7h1v-7zM151 58v4h1v-4zM152 50v7h1v-7zM153 56v4h1v-4zM154 56v4h1v-4zM155 57v3h1v-3zM156 54v4h1v-4zM157 56v3h1v-3zM158 55v3h1v-3zM159 57v3h1v-3zM160 50v6h1v-6zM161 53v4h1v-4zM162 51v4h1v-4zM163 44v8h1v-8zM164 57v3h1v-3zM165 48v5h1v-5zM166 39v9h1v-9zM167 51v4h1v-4zM168 40v8h1v-8zM169 46v5h1v-5zM170 47v5h1v-5zM171 40v7h1v-7z"/>
<path fill="#ff1919" stroke="#ff1919" d="M0 117v4h1v-4zM1 120v4h1v-4zM2 120v4h1v-4zM3 125v7h1v-7zM4 120v5h1v-5zM5 120v5h1v-5zM6 119v4h1v-4zM7 120v5h1v-5zM8 119v4h1v-4zM9 119v5h1v-5zM10 121v6h1v-6zM11 116v4h1v-4zM12 116v4h1v-4zM13 114v3h1v-3zM14 117v5h1v-5zM15 118v5h1v-5zM16 119v5h1v-5zM17 122v8h1v-8zM18 116v3h1v-3zM19 121v7h1v-7zM20 121v8h1v-8zM21 119v5h1v-5zM22 115v4h1v-4zM23 119v5h1v-5zM24 123v9h1v-9zM25 122v8h1v-8zM26 119v5h1v-5zM27 122v7h1v-7zM28 125v18h1v-18zM29 124v11h1v-11zM30 121v7h1v-7zM31 118v6h1v-6zM32 137v20h1v-20zM33 134v18h1v-18zM34 139v18h1v-18zM35 159v13h1v-13zM36 146v18h1v-18zM37 149v23h1v-23zM38 134v13h1v-13zM39 146v18h1v-18zM40 168v4h1v-4zM41 145v17h1v-17zM42 158v14h1v-14zM125 16v10h1v-10zM126 17v7h1v-7zM127 11v17h1v-17zM130 8v21h1v-21zM131 0v1h1v-1zM131 33v18h1v-18zM132 0v11h1v-11zM132 26v12h1v-12zM133 5v25h1v-25zM134 0v9h1v-9zM134 26v15h1v-15zM135 0v34h1v-34zM136 0v35h1v-35zM137 34v18h1v-18zM138 0v38h1v-38zM139 5v22h1v-22zM140 0v38h1v-38zM141 32v17h1v-17zM142 34v16h1v-16zM143 47v8h1v-8zM144 0v4h1v-4zM144 24v22h1v-22zM145 46v8h1v-8zM146 44v9h1v-9zM147 39v12h1v-12zM148 49v6h1v-6zM149 48v7h1v-7zM150 29v21h1v-21zM151 53v5h1v-5zM152 24v26h1v-26zM153 48v8h1v-8zM154 48v8h1v-8zM155 52v5h1v-5zM156 35v19h1v-19zM157 47v9h1v-9zM158 45v10h1v-10zM159 52v5h1v-5zM160 33v17h1v-17zM161 44v9h1v-9zM162 40v11h1v-11zM163 25v19h1v-19zM164 53v4h1v-4zM165 38v10h1v-10zM166 22v17h1v-17zM167 46v5h1v-5zM168 26v14h1v-14zM169 38v8h1v-8zM170 40v7h1v-7zM171 29v11h1v-11z"/>
<path fill="#ff2e2e" stroke="#ff2e2e" d="M0 121v4h1v-4zM1 124v5h1v-5zM2 124v7h1v-7zM3 132v12h1v-12zM4 125v7h1v-7zM5 125v7h1v-7zM6 123v7h1v-7zM7 125v9h1v-9zM8 123v7h1v-7zM9 124v8h1v-8zM10 127v16h1v-16zM11 120v5h1v-5zM12 120v5h1v-5zM13 117v5h1v-5zM14 122v7h1v-7zM15 123v11h1v-11zM16 124v16h1v-16zM17 130v24h1v-24zM18 119v6h1v-6zM19 128v24h1v-24zM20 129v25h1v-25zM21 124v22h1v-22zM22 119v6h1v-6zM23 124v18h1v-18zM24 132v26h1v-26zM25 130v26h1v-26zM26 124v18h1v-18zM27 129v25h1v-25zM28 143v19h1v-19zM29 135v23h1v-23zM30 128v21h1v-21zM31 124v11h1v-11zM32 157v15h1v-15zM33 152v20h1v-20zM34 157v15h1v-15zM36 164v8h1v-8zM38 147v20h1v-20zM39 164v8h1v-8zM41 162v10h1v-10zM131 1v32h1v-32zM132 11v15h1v-15zM134 9v17h1v-17zM137 0v34h1v-34zM141 0v32h1v-32zM142 0v34h1v-34zM143 0v1h1v-1zM143 28v19h1v-19zM144 4v20h1v-20zM145 0v6h1v-6zM145 22v24h1v-24zM146 0v44h1v-44zM147 0v39h1v-39zM148 28v21h1v-21zM149 22v26h1v-26zM150 0v29h1v-29zM151 36v17h1v-17zM152 0v24h1v-24zM153 16v32h1v-32zM154 16v32h1v-32zM155 26v26h1v-26zM156 0v35h1v-35zM157 18v29h1v-29zM158 16v29h1v-29zM159 36v16h1v-16zM160 0v33h1v-33zM161 21v23h1v-23zM162 15v25h1v-25zM163 0v25h1v-25zM164 47v6h1v-6zM165 19v19h1v-19zM166 0v22h1v-22zM167 35v11h1v-11zM168 0v26h1v-26zM169 23v15h1v-15zM170 28v12h1v-12zM171 7v22h1v-22z"/>
<path fill="#ff4242" stroke="#ff4242" d="M0 125v6h1v-6zM1 129v10h1v-10zM2 131v10h1v-10zM3 144v16h1v-16zM4 132v13h1v-13zM5 132v15h1v-15zM6 130v14h1v-14zM7 134v17h1v-17zM8 130v16h1v-16zM9 132v19h1v-19zM10 143v17h1v-17zM11 125v11h1v-11zM12 125v12h1v-12zM13 122v7h1v-7zM14 129v22h1v-22zM15 134v23h1v-23zM16 140v19h1v-19zM17 154v18h1v-18zM18 125v22h1v-22zM19 152v18h1v-18zM20 154v18h1v-18zM21 146v16h1v-16zM22 125v22h1v-22zM23 142v18h1v-18zM24 158v14h1v-14zM25 156v16h1v-16zM26 142v19h1v-19zM27 154v18h1v-18zM28 162v10h1v-10zM29 158v14h1v-14zM30 149v21h1v-21zM31 135v20h1v-20zM38 167v5h1v-5zM143 1v27h1v-27zM145 6v16h1v-16zM148 0v28h1v-28zM149 0v22h1v-22zM151 0v36h1v-36zM153 0v16h1v-16zM154 0v16h1v-16zM155 0v26h1v-26zM157 0v18h1v-18zM158 0v16h1v-16zM159 0v36h1v-36zM161 0v21h1v-21zM162 0v15h1v-15zM164 34v13h1v-13zM165 0v19h1v-19zM167 16v19h1v-19zM169 0v23h1v-23zM170 4v24h1v-24zM171 0v7h1v-7z"/>
<path fill="#ff5757" stroke="#ff5757" d="M0 131v10h1v-10zM1 139v14h1v-14zM2 141v15h1v-15zM3 160v12h1v-12zM4 145v16h1v-16zM5 147v16h1v-16zM6 144v17h1v-17zM7 151v17h1v-17zM8 146v16h1v-16zM9 151v17h1v-17zM10 160v12h1v-12zM11 136v20h1v-20zM12 137v20h1v-20zM13 129v21h1v-21zM14 151v17h1v-17zM15 157v15h1v-15zM16 159v13h1v-13zM18 147v16h1v-16zM19 170v2h1v-2zM21 162v10h1v-10zM22 147v16h1v-16zM23 160v12h1v-12zM26 161v11h1v-11zM30 170v2h1v-2zM31 155v17h1v-17zM164 5v29h1v-29zM167 0v16h1v-16zM170 0v4h1v-4z"/>
<path fill="#ff6666" stroke="#ff6666" d="M0 141v14h1v-14zM1 153v16h1v-16zM2 156v16h1v-16zM4 161v11h1v-11zM5 163v9h1v-9zM6 161v11h1v-11zM7 168v4h1v-4zM8 162v10h1v-10zM9 168v4h1v-4zM11 156v16h1v-16zM12 157v15h1v-15zM13 150v17h1v-17zM14 168v4h1v-4zM18 163v9h1v-9zM22 163v9h1v-9zM164 0v5h1v-5z"/>
<path fill="#ff6666" stroke="#ff6666" d="M0 155v17h1v-17zM1 169v3h1v-3zM13 167v5h1v-5z"/></g>
<linearGradient id="cb1" x1="0" y1="0" x2="0" y2="1"><stop offset="0.0000" stop-color="#ff6666"/><stop offset="0.0250" stop-color="#ff6666"/><stop offset="0.0500" stop-color="#ff6666"/><stop offset="0.0750" stop-color="#ff6666"/><stop offset="0.1000" stop-color="#ff5353"/><stop offset="0.1250" stop-color="#ff1e1e"/><stop offset="0.1500" stop-color="#ff0f00"/><stop offset="0.1750" stop-color="#ff3200"/><stop offset="0.2000" stop-color="#ff5600"/><stop offset="0.2250" stop-color="#ff8300"/><stop offset="0.2500" stop-color="#ffb100"/><stop offset="0.2750" stop-color="#ffdd00"/><stop offset="0.3000" stop-color="#ecff00"/><stop offset="0.3250" stop-color="#9aff00"/><stop offset="0.3500" stop-color="#43ff00"/><stop offset="0.3750" stop-color="#00f40b"/><stop offset="0.4000" stop-color="#00c73a"/><stop offset="0.4250" stop-color="#009a69"/><stop offset="0.4500" stop-color="#006b9c"/><stop offset="0.4750" stop-color="#0035db"/><stop offset="0.5000" stop-color="#0011f7"/><stop offset="0.5250" stop-color="#0000ff"/><stop offset="0.5500" stop-color="#0000ff"/><stop offset="0.5750" stop-color="#0000ff"/><stop offset="0.6000" stop-color="#0000ff"/><stop offset="0.6250" stop-color="#0000ff"/><stop offset="0.6500" stop-color="#0000ff"/><stop offset="0.6750" stop-color="#0000ff"/><stop offset="0.7000" stop-color="#0000ff"/><stop offset="0.7250" stop-color="#0000ff"/><stop offset="0.7500" stop-color="#0000ff"/><stop offset="0.7750" stop-color="#0000ff"/><stop offset="0.8000" stop-color="#0000ff"/><stop offset="0.8250" stop-color="#0000ff"/><stop offset="0.8500" stop-color="#0000ff"/><stop offset="0.8750" stop-color="#0000ff"/><stop offset="0.9000" stop-color="#0000ff"/><stop offset="0.9250" stop-color="#0000ff"/><stop offset="0.9500" stop-color="#0000ff"/><stop offset="0.9750" stop-color="#0000ff"/><stop offset="1.0000" stop-color="#0000ff"/></linearGradient>
<linearGradient id="cbs" x1="0" y1="0" x2="1" y2="0"><stop offset="0" stop-color="#000" stop-opacity=".5"/><stop offset=".75" stop-color="#000" stop-opacity="0"/></linearGradient>
<clipPath id="hc"><circle cx="86.00" cy="86.00" r="76.786"/></clipPath>
<filter id="grain" x="0" y="0" width="100%" height="100%" color-interpolation-filters="sRGB"><feTurbulence type="fractalNoise" baseFrequency="0.85" numOctaves="2" seed="4" result="n"/><feDisplacementMap in="SourceGraphic" in2="n" scale="9" xChannelSelector="R" yChannelSelector="G" result="d"/><feTurbulence type="fractalNoise" baseFrequency="0.95" numOctaves="1" seed="11" result="m"/><feColorMatrix in="m" type="matrix" values="1 0 0 0 0  0 1 0 0 0  0 0 1 0 0  0 0 0 0 1" result="m1"/><feComposite in="d" in2="m1" operator="arithmetic" k1="0" k2="1" k3=".42" k4="-.19"/></filter>
<filter id="grain2" x="0" y="0" width="100%" height="100%" color-interpolation-filters="sRGB"><feTurbulence type="fractalNoise" baseFrequency="0.8" numOctaves="2" seed="9" result="n"/><feDisplacementMap in="SourceGraphic" in2="n" scale="18" xChannelSelector="R" yChannelSelector="G" result="d"/><feTurbulence type="fractalNoise" baseFrequency="1.3" numOctaves="1" seed="5" result="m"/><feColorMatrix in="m" type="matrix" values="1 0 0 0 0  0 1 0 0 0  0 0 1 0 0  0 0 0 0 1" result="m1"/><feComposite in="d" in2="m1" operator="arithmetic" k1="0" k2="1" k3=".55" k4="-.25"/></filter>
<clipPath id="c1"><rect x="29" y="2" width="566" height="712"/></clipPath>
<clipPath id="c2"><rect x="603" y="2" width="567" height="367"/></clipPath>
</defs>
<g clip-path="url(#c1)">
<g transform="translate(102.90 183.80) scale(2.00819)" clip-path="url(#hc)"><use href="#hm" filter="url(#grain)"/></g>
<rect x="121.4" y="202.3" width="308.4" height="308.4" fill="none" stroke="#e8e8e8" stroke-width="1.4"/>
<path d="M122.6 202.3v-7.0M122.6 510.7v7.0M128.8 202.3v-4.5M128.8 510.7v4.5M134.9 202.3v-4.5M134.9 510.7v4.5M141.1 202.3v-4.5M141.1 510.7v4.5M147.2 202.3v-4.5M147.2 510.7v4.5M153.4 202.3v-11.0M153.4 510.7v11.0M159.6 202.3v-4.5M159.6 510.7v4.5M165.7 202.3v-4.5M165.7 510.7v4.5M171.9 202.3v-4.5M171.9 510.7v4.5M178.0 202.3v-4.5M178.0 510.7v4.5M184.2 202.3v-7.0M184.2 510.7v7.0M190.4 202.3v-4.5M190.4 510.7v4.5M196.5 202.3v-4.5M196.5 510.7v4.5M202.7 202.3v-4.5M202.7 510.7v4.5M208.8 202.3v-4.5M208.8 510.7v4.5M215.0 202.3v-11.0M215.0 510.7v11.0M221.2 202.3v-4.5M221.2 510.7v4.5M227.3 202.3v-4.5M227.3 510.7v4.5M233.5 202.3v-4.5M233.5 510.7v4.5M239.6 202.3v-4.5M239.6 510.7v4.5M245.8 202.3v-7.0M245.8 510.7v7.0M252.0 202.3v-4.5M252.0 510.7v4.5M258.1 202.3v-4.5M258.1 510.7v4.5M264.3 202.3v-4.5M264.3 510.7v4.5M270.4 202.3v-4.5M270.4 510.7v4.5M276.6 202.3v-11.0M276.6 510.7v11.0M282.8 202.3v-4.5M282.8 510.7v4.5M288.9 202.3v-4.5M288.9 510.7v4.5M295.1 202.3v-4.5M295.1 510.7v4.5M301.2 202.3v-4.5M301.2 510.7v4.5M307.4 202.3v-7.0M307.4 510.7v7.0M313.6 202.3v-4.5M313.6 510.7v4.5M319.7 202.3v-4.5M319.7 510.7v4.5M325.9 202.3v-4.5M325.9 510.7v4.5M332.0 202.3v-4.5M332.0 510.7v4.5M338.2 202.3v-11.0M338.2 510.7v11.0M344.4 202.3v-4.5M344.4 510.7v4.5M350.5 202.3v-4.5M350.5 510.7v4.5M356.7 202.3v-4.5M356.7 510.7v4.5M362.8 202.3v-4.5M362.8 510.7v4.5M369.0 202.3v-7.0M369.0 510.7v7.0M375.2 202.3v-4.5M375.2 510.7v4.5M381.3 202.3v-4.5M381.3 510.7v4.5M387.5 202.3v-4.5M387.5 510.7v4.5M393.6 202.3v-4.5M393.6 510.7v4.5M399.8 202.3v-11.0M399.8 510.7v11.0M406.0 202.3v-4.5M406.0 510.7v4.5M412.1 202.3v-4.5M412.1 510.7v4.5M418.3 202.3v-4.5M418.3 510.7v4.5M424.4 202.3v-4.5M424.4 510.7v4.5M121.4 207.9h-4.5M429.8 207.9h4.5M121.4 214.1h-4.5M429.8 214.1h4.5M121.4 220.2h-4.5M429.8 220.2h4.5M121.4 226.4h-7.0M429.8 226.4h7.0M121.4 232.6h-4.5M429.8 232.6h4.5M121.4 238.7h-4.5M429.8 238.7h4.5M121.4 244.9h-4.5M429.8 244.9h4.5M121.4 251.0h-4.5M429.8 251.0h4.5M121.4 257.2h-11.0M429.8 257.2h11.0M121.4 263.4h-4.5M429.8 263.4h4.5M121.4 269.5h-4.5M429.8 269.5h4.5M121.4 275.7h-4.5M429.8 275.7h4.5M121.4 281.8h-4.5M429.8 281.8h4.5M121.4 288.0h-7.0M429.8 288.0h7.0M121.4 294.2h-4.5M429.8 294.2h4.5M121.4 300.3h-4.5M429.8 300.3h4.5M121.4 306.5h-4.5M429.8 306.5h4.5M121.4 312.6h-4.5M429.8 312.6h4.5M121.4 318.8h-11.0M429.8 318.8h11.0M121.4 325.0h-4.5M429.8 325.0h4.5M121.4 331.1h-4.5M429.8 331.1h4.5M121.4 337.3h-4.5M429.8 337.3h4.5M121.4 343.4h-4.5M429.8 343.4h4.5M121.4 349.6h-7.0M429.8 349.6h7.0M121.4 355.8h-4.5M429.8 355.8h4.5M121.4 361.9h-4.5M429.8 361.9h4.5M121.4 368.1h-4.5M429.8 368.1h4.5M121.4 374.2h-4.5M429.8 374.2h4.5M121.4 380.4h-11.0M429.8 380.4h11.0M121.4 386.6h-4.5M429.8 386.6h4.5M121.4 392.7h-4.5M429.8 392.7h4.5M121.4 398.9h-4.5M429.8 398.9h4.5M121.4 405.0h-4.5M429.8 405.0h4.5M121.4 411.2h-7.0M429.8 411.2h7.0M121.4 417.4h-4.5M429.8 417.4h4.5M121.4 423.5h-4.5M429.8 423.5h4.5M121.4 429.7h-4.5M429.8 429.7h4.5M121.4 435.8h-4.5M429.8 435.8h4.5M121.4 442.0h-11.0M429.8 442.0h11.0M121.4 448.2h-4.5M429.8 448.2h4.5M121.4 454.3h-4.5M429.8 454.3h4.5M121.4 460.5h-4.5M429.8 460.5h4.5M121.4 466.6h-4.5M429.8 466.6h4.5M121.4 472.8h-7.0M429.8 472.8h7.0M121.4 479.0h-4.5M429.8 479.0h4.5M121.4 485.1h-4.5M429.8 485.1h4.5M121.4 491.3h-4.5M429.8 491.3h4.5M121.4 497.4h-4.5M429.8 497.4h4.5M121.4 503.6h-11.0M429.8 503.6h11.0M121.4 509.8h-4.5M429.8 509.8h4.5" stroke="#d8d8d8" stroke-width="1.1" fill="none"/>
<g fill="#fff" font-size="20" stroke="#fff" stroke-width=".35">
<text x="153.4" y="182.7" text-anchor="middle">200</text>
<text x="153.4" y="549.3" text-anchor="middle">200</text>
<text x="215.0" y="182.7" text-anchor="middle">220</text>
<text x="215.0" y="549.3" text-anchor="middle">220</text>
<text x="276.6" y="182.7" text-anchor="middle">240</text>
<text x="276.6" y="549.3" text-anchor="middle">240</text>
<text x="338.2" y="182.7" text-anchor="middle">260</text>
<text x="338.2" y="549.3" text-anchor="middle">260</text>
<text x="399.8" y="182.7" text-anchor="middle">280</text>
<text x="399.8" y="549.3" text-anchor="middle">280</text>
<text x="103.5" y="264.8" text-anchor="end">320</text>
<text x="447.5" y="264.8">320</text>
<text x="103.5" y="326.4" text-anchor="end">340</text>
<text x="447.5" y="326.4">340</text>
<text x="103.5" y="388.0" text-anchor="end">360</text>
<text x="447.5" y="388.0">360</text>
<text x="103.5" y="449.6" text-anchor="end">380</text>
<text x="447.5" y="449.6">380</text>
<text x="103.5" y="511.2" text-anchor="end">400</text>
<text x="447.5" y="511.2">400</text>
<text x="291" y="158.6" text-anchor="middle" textLength="126" lengthAdjust="spacingAndGlyphs">X : 99.95 mm</text>
<text x="291" y="572.6" text-anchor="middle" textLength="126" lengthAdjust="spacingAndGlyphs">X : 99.95 mm</text>
<text transform="translate(61.6 342) rotate(-90)" text-anchor="middle" textLength="126.5" lengthAdjust="spacingAndGlyphs">Y : 99.95 mm</text>
<text transform="translate(489.4 372.5) rotate(90)" text-anchor="middle" textLength="128.5" lengthAdjust="spacingAndGlyphs">Y : 99.95 mm</text>
</g>
<g fill="#fff" font-size="21.5" stroke="#fff" stroke-width=".35">
<text x="77.5" y="27.8" text-anchor="end" textLength="33.0" lengthAdjust="spacingAndGlyphs">PVr</text>
<text x="83" y="27.8" textLength="55.4" lengthAdjust="spacingAndGlyphs">6.206</text>
<text x="154.3" y="27.8" textLength="30.7" lengthAdjust="spacingAndGlyphs">nm</text>
<text x="77.5" y="57.5" text-anchor="end" textLength="25.2" lengthAdjust="spacingAndGlyphs">PV</text>
<text x="83" y="57.5" textLength="69.0" lengthAdjust="spacingAndGlyphs">11.838</text>
<text x="154.3" y="57.5" textLength="30.7" lengthAdjust="spacingAndGlyphs">nm</text>
<text x="77.5" y="87.2" text-anchor="end" textLength="42.7" lengthAdjust="spacingAndGlyphs">RMS</text>
<text x="83" y="87.2" textLength="55.4" lengthAdjust="spacingAndGlyphs">1.216</text>
<text x="154.3" y="87.2" textLength="30.7" lengthAdjust="spacingAndGlyphs">nm</text>
</g>
<rect x="569.4" y="46.8" width="14.4" height="620.2" fill="url(#cb1)"/>
<rect x="569.4" y="46.8" width="14.4" height="620.2" fill="url(#cbs)"/>
<path d="M569.4 60.4h-9.5M569.4 143.4h-9.5M569.4 226.4h-9.5M569.4 309.4h-9.5M569.4 392.4h-9.5M569.4 475.4h-9.5M569.4 558.4h-9.5M569.4 641.4h-9.5" stroke="#fff" stroke-width="1.1" fill="none"/>
<path d="M569.4 52.1h-4.5M569.4 68.7h-4.5M569.4 77.0h-4.5M569.4 85.3h-4.5M569.4 93.6h-4.5M569.4 101.9h-6.5M569.4 110.2h-4.5M569.4 118.5h-4.5M569.4 126.8h-4.5M569.4 135.1h-4.5M569.4 151.7h-4.5M569.4 160.0h-4.5M569.4 168.3h-4.5M569.4 176.6h-4.5M569.4 184.9h-6.5M569.4 193.2h-4.5M569.4 201.5h-4.5M569.4 209.8h-4.5M569.4 218.1h-4.5M569.4 234.7h-4.5M569.4 243.0h-4.5M569.4 251.3h-4.5M569.4 259.6h-4.5M569.4 267.9h-6.5M569.4 276.2h-4.5M569.4 284.5h-4.5M569.4 292.8h-4.5M569.4 301.1h-4.5M569.4 317.7h-4.5M569.4 326.0h-4.5M569.4 334.3h-4.5M569.4 342.6h-4.5M569.4 350.9h-6.5M569.4 359.2h-4.5M569.4 367.5h-4.5M569.4 375.8h-4.5M569.4 384.1h-4.5M569.4 400.7h-4.5M569.4 409.0h-4.5M569.4 417.3h-4.5M569.4 425.6h-4.5M569.4 433.9h-6.5M569.4 442.2h-4.5M569.4 450.5h-4.5M569.4 458.8h-4.5M569.4 467.1h-4.5M569.4 483.7h-4.5M569.4 492.0h-4.5M569.4 500.3h-4.5M569.4 508.6h-4.5M569.4 516.9h-6.5M569.4 525.2h-4.5M569.4 533.5h-4.5M569.4 541.8h-4.5M569.4 550.1h-4.5M569.4 566.7h-4.5M569.4 575.0h-4.5M569.4 583.3h-4.5M569.4 591.6h-4.5M569.4 599.9h-6.5M569.4 608.2h-4.5M569.4 616.5h-4.5M569.4 624.8h-4.5M569.4 633.1h-4.5M569.4 649.7h-4.5M569.4 658.0h-4.5M569.4 666.3h-4.5" stroke="#9a9a9a" stroke-width="1.1" fill="none"/>
<g fill="#fff" font-size="10.6" font-weight="bold" text-anchor="end">
<text x="558.8" y="64.3">0.0050</text>
<text x="558.8" y="147.3">0.0025</text>
<text x="558.8" y="230.3">0</text>
<text x="558.8" y="313.3">-0.0025</text>
<text x="558.8" y="396.3">-0.0050</text>
<text x="558.8" y="479.3">-0.0075</text>
<text x="558.8" y="562.3">-0.0100</text>
<text x="558.8" y="645.3">-0.0125</text>
<text x="590.5" y="38.2">0.005 λ</text>
<text x="591" y="684.6">-0.013 λ</text>
</g>
<path d="M584.6 47.6l9 -5.2v10.6z" fill="#b5353b"/><path d="M587.6 47.6l4.6 -2.6v5.2z" fill="#cf6a6e"/>
<path d="M584.5 667l9 -6v11z" fill="#1e78ff"/>
</g>
<g clip-path="url(#c2)">
<path d="M789.2 354.2L1015.5 288.5L937.4 97.6L743.4 148.0z" fill="none" stroke="#dcdcdc" stroke-width="1.5"/>
<path d="M791.1 353.7L792.3 359.0M794.5 352.6L795.8 358.0M798.0 351.6L799.2 357.0M801.5 350.6L803.5 359.2M805.0 349.6L806.2 355.0M808.4 348.6L809.7 354.0M811.9 347.6L813.2 352.9M815.4 346.6L816.6 351.9M818.8 345.6L821.8 357.7M822.3 344.6L823.6 349.9M825.7 343.6L827.0 348.9M829.2 342.6L830.5 347.9M832.6 341.6L834.0 346.9M836.0 340.6L838.2 349.0M839.5 339.6L840.9 344.9M842.9 338.6L844.3 343.9M846.4 337.6L847.8 342.9M849.8 336.6L851.2 341.9M853.2 335.6L856.5 347.6M856.6 334.6L858.1 339.9M860.0 333.6L861.5 338.9M863.5 332.6L864.9 337.9M866.9 331.7L868.4 336.9M870.3 330.7L872.7 339.0M873.7 329.7L875.2 334.9M877.1 328.7L878.6 333.9M880.5 327.7L882.0 332.9M883.9 326.7L885.4 331.9M887.3 325.7L890.8 337.6M890.7 324.7L892.2 329.9M894.0 323.8L895.6 328.9M897.4 322.8L899.0 328.0M900.8 321.8L902.4 327.0M904.2 320.8L906.8 329.0M907.5 319.8L909.2 325.0M910.9 318.9L912.6 324.0M914.3 317.9L915.9 323.0M917.6 316.9L919.3 322.0M921.0 315.9L924.8 327.6M924.4 315.0L926.0 320.1M927.7 314.0L929.4 319.1M931.1 313.0L932.8 318.1M934.4 312.0L936.1 317.1M937.7 311.1L940.5 319.2M941.1 310.1L942.8 315.2M944.4 309.1L946.2 314.2M947.8 308.2L949.5 313.2M951.1 307.2L952.9 312.3M954.4 306.2L958.5 317.8M957.7 305.3L959.6 310.3M961.1 304.3L962.9 309.4M964.4 303.3L966.2 308.4M967.7 302.4L969.5 307.4M971.0 301.4L974.0 309.4M974.3 300.5L976.2 305.5M977.6 299.5L979.5 304.5M980.9 298.5L982.8 303.6M984.2 297.6L986.1 302.6M987.5 296.6L991.9 308.0M990.8 295.7L992.7 300.7M994.1 294.7L996.0 299.7M997.4 293.8L999.3 298.7M1000.7 292.8L1002.6 297.8M1003.9 291.9L1007.1 299.8M1007.2 290.9L1009.2 295.9M1010.5 290.0L1012.5 294.9M935.9 98.0L934.4 94.4M933.1 98.7L931.6 95.2M930.3 99.5L928.8 95.9M927.4 100.2L925.2 94.5M924.6 100.9L923.2 97.3M921.8 101.7L920.4 98.1M919.0 102.4L917.6 98.8M916.1 103.1L914.7 99.5M913.3 103.9L910.2 95.7M910.5 104.6L909.1 101.0M907.6 105.3L906.3 101.7M904.8 106.1L903.4 102.5M901.9 106.8L900.6 103.2M899.1 107.5L897.0 101.8M896.3 108.3L894.9 104.7M893.4 109.0L892.1 105.4M890.6 109.8L889.2 106.1M887.7 110.5L886.4 106.9M884.8 111.3L881.9 103.0M882.0 112.0L880.7 108.4M879.1 112.7L877.8 109.1M876.3 113.5L875.0 109.8M873.4 114.2L872.1 110.6M870.5 115.0L868.5 109.2M867.7 115.7L866.4 112.1M864.8 116.5L863.6 112.8M861.9 117.2L860.7 113.5M859.0 118.0L857.8 114.3M856.2 118.7L853.4 110.4M853.3 119.5L852.1 115.8M850.4 120.2L849.2 116.5M847.5 121.0L846.3 117.3M844.6 121.7L843.4 118.0M841.7 122.5L839.9 116.6M838.8 123.2L837.7 119.5M835.9 124.0L834.8 120.3M833.0 124.7L831.9 121.0M830.1 125.5L829.0 121.8M827.2 126.2L824.7 117.8M824.3 127.0L823.2 123.3M821.4 127.7L820.3 124.0M818.5 128.5L817.4 124.8M815.6 129.2L814.5 125.5M812.7 130.0L811.0 124.1M809.8 130.8L808.7 127.0M806.9 131.5L805.8 127.8M803.9 132.3L802.9 128.5M801.0 133.0L800.0 129.3M798.1 133.8L795.8 125.3M795.1 134.6L794.1 130.8M792.2 135.3L791.2 131.6M789.3 136.1L788.3 132.3M786.3 136.8L785.4 133.1M783.4 137.6L781.9 131.6M780.5 138.4L779.5 134.6M777.5 139.1L776.6 135.3M774.6 139.9L773.6 136.1M771.6 140.7L770.7 136.9M768.7 141.4L766.6 132.8M765.7 142.2L764.8 138.4M762.8 143.0L761.9 139.2M759.8 143.7L758.9 139.9M756.9 144.5L756.0 140.7M753.9 145.3L752.5 139.2M750.9 146.0L750.0 142.2M748.0 146.8L747.1 143.0M744.3 152.0L739.9 153.2M744.9 154.7L740.5 155.8M745.5 157.3L741.1 158.5M746.1 160.0L736.0 162.6M746.7 162.7L742.2 163.9M747.3 165.4L742.8 166.6M747.9 168.1L743.4 169.3M748.5 170.8L744.0 172.0M749.1 173.6L741.9 175.4M749.7 176.3L745.2 177.5M750.3 179.1L745.8 180.2M750.9 181.8L746.4 183.0M751.5 184.6L747.0 185.8M752.2 187.4L741.8 190.2M752.8 190.2L748.2 191.4M753.4 193.1L748.9 194.3M754.0 195.9L749.5 197.1M754.7 198.7L750.1 200.0M755.3 201.6L748.0 203.6M755.9 204.5L751.3 205.7M756.6 207.4L752.0 208.6M757.2 210.3L752.6 211.5M757.9 213.2L753.3 214.5M758.5 216.1L748.0 219.0M759.2 219.1L754.5 220.4M759.8 222.1L755.2 223.3M760.5 225.0L755.8 226.3M761.2 228.0L756.5 229.3M761.8 231.0L754.4 233.1M762.5 234.1L757.8 235.3M763.2 237.1L758.5 238.4M763.9 240.1L759.1 241.4M764.5 243.2L759.8 244.5M765.2 246.3L754.4 249.3M765.9 249.4L761.2 250.7M766.6 252.5L761.8 253.8M767.3 255.6L762.5 257.0M768.0 258.8L763.2 260.1M768.7 261.9L761.1 264.1M769.4 265.1L764.6 266.5M770.1 268.3L765.3 269.7M770.8 271.5L766.0 272.9M771.6 274.7L766.7 276.1M772.3 278.0L761.2 281.1M773.0 281.2L768.1 282.6M773.7 284.5L768.8 285.9M774.5 287.8L769.6 289.2M775.2 291.1L770.3 292.5M775.9 294.4L768.1 296.7M776.7 297.8L771.7 299.2M777.4 301.1L772.5 302.5M778.2 304.5L773.2 305.9M778.9 307.9L773.9 309.3M779.7 311.3L768.3 314.6M780.4 314.8L775.4 316.2M781.2 318.2L776.2 319.6M782.0 321.7L776.9 323.1M782.7 325.2L777.7 326.6M783.5 328.7L775.5 331.0M784.3 332.2L779.2 333.6M785.1 335.7L780.0 337.2M785.9 339.3L780.8 340.8M786.7 342.9L781.6 344.3M787.5 346.5L775.8 349.8M788.3 350.1L783.2 351.6M789.1 353.7L783.9 355.2M1013.4 283.4L1018.2 282.0M1012.0 280.0L1016.8 278.7M1010.7 276.7L1015.5 275.4M1009.3 273.4L1020.2 270.3M1008.0 270.2L1012.8 268.8M1006.7 266.9L1011.4 265.5M1005.3 263.7L1010.1 262.3M1004.0 260.4L1008.7 259.1M1002.7 257.2L1010.2 255.1M1001.4 254.0L1006.1 252.7M1000.1 250.9L1004.8 249.5M998.8 247.7L1003.5 246.4M997.5 244.6L1002.2 243.2M996.2 241.4L1006.8 238.4M995.0 238.3L999.6 237.0M993.7 235.2L998.3 233.9M992.4 232.1L997.1 230.8M991.2 229.1L995.8 227.8M989.9 226.0L997.3 224.0M988.7 223.0L993.3 221.7M987.5 220.0L992.0 218.7M986.2 217.0L990.8 215.7M985.0 214.0L989.6 212.7M983.8 211.0L994.1 208.1M982.6 208.0L987.1 206.8M981.4 205.1L985.9 203.8M980.2 202.1L984.7 200.9M979.0 199.2L983.5 198.0M977.8 196.3L984.9 194.4M976.6 193.4L981.1 192.2M975.4 190.6L979.9 189.3M974.3 187.7L978.7 186.5M973.1 184.8L977.5 183.6M971.9 182.0L982.0 179.2M970.8 179.2L975.2 178.0M969.6 176.4L974.1 175.2M968.5 173.6L972.9 172.4M967.3 170.8L971.8 169.6M966.2 168.0L973.2 166.1M965.1 165.3L969.5 164.1M964.0 162.5L968.3 161.3M962.8 159.8L967.2 158.6M961.7 157.1L966.1 155.9M960.6 154.4L970.5 151.7M959.5 151.7L963.9 150.5M958.4 149.0L962.8 147.8M957.3 146.3L961.7 145.2M956.3 143.7L960.6 142.5M955.2 141.0L962.0 139.2M954.1 138.4L958.4 137.3M953.0 135.8L957.3 134.7M952.0 133.2L956.2 132.1M950.9 130.6L955.2 129.5M949.8 128.0L959.5 125.5M948.8 125.4L953.0 124.3M947.7 122.9L952.0 121.8M946.7 120.3L950.9 119.2M945.7 117.8L949.9 116.7M944.6 115.3L951.3 113.5M943.6 112.8L947.8 111.7M942.6 110.3L946.8 109.2M941.6 107.8L945.7 106.7M940.5 105.3L944.7 104.2M939.5 102.8L949.0 100.4M938.5 100.4L942.7 99.3M937.5 97.9L941.7 96.8" stroke="#c8c8c8" stroke-width="1" fill="none"/>
<g fill="#f0f0f0" text-anchor="middle"><text transform="translate(826.4 376.4) rotate(-16.3)" font-size="16.1" y="5.8">315</text><text transform="translate(861.5 366.0) rotate(-16.3)" font-size="16.0" y="5.8">330</text><text transform="translate(896.3 355.8) rotate(-16.3)" font-size="15.9" y="5.7">345</text><text transform="translate(930.7 345.6) rotate(-16.3)" font-size="15.8" y="5.7">360</text><text transform="translate(964.9 335.5) rotate(-16.3)" font-size="15.7" y="5.6">375</text><text transform="translate(998.6 325.6) rotate(-16.3)" font-size="15.6" y="5.6">390</text><text transform="translate(905.5 83.7) rotate(164.0)" font-size="12.3" y="4.4">315</text><text transform="translate(877.6 90.9) rotate(164.0)" font-size="12.3" y="4.4">330</text><text transform="translate(849.4 98.1) rotate(164.0)" font-size="12.4" y="4.5">345</text><text transform="translate(821.0 105.4) rotate(164.0)" font-size="12.5" y="4.5">360</text><text transform="translate(792.3 112.8) rotate(164.0)" font-size="12.6" y="4.5">375</text><text transform="translate(763.5 120.2) rotate(164.0)" font-size="12.6" y="4.5">390</text><text transform="translate(720.8 166.6) rotate(77.8)" font-size="12.9" y="4.6">195</text><text transform="translate(726.3 194.3) rotate(77.8)" font-size="13.4" y="4.8">210</text><text transform="translate(732.1 223.3) rotate(77.8)" font-size="13.8" y="5.0">225</text><text transform="translate(738.2 253.7) rotate(77.8)" font-size="14.3" y="5.2">240</text><text transform="translate(744.5 285.7) rotate(77.8)" font-size="14.9" y="5.4">255</text><text transform="translate(751.2 319.4) rotate(77.8)" font-size="15.5" y="5.6">270</text><text transform="translate(758.3 354.9) rotate(77.8)" font-size="16.1" y="5.8">285</text><text transform="translate(1036.3 265.7) rotate(-113.6)" font-size="15.2" y="5.5">195</text><text transform="translate(1022.6 234.0) rotate(-113.6)" font-size="14.7" y="5.3">210</text><text transform="translate(1009.6 203.8) rotate(-113.6)" font-size="14.1" y="5.1">225</text><text transform="translate(997.1 175.1) rotate(-113.6)" font-size="13.6" y="4.9">240</text><text transform="translate(985.3 147.8) rotate(-113.6)" font-size="13.2" y="4.7">255</text><text transform="translate(974.0 121.6) rotate(-113.6)" font-size="12.7" y="4.6">270</text><text transform="translate(963.2 96.7) rotate(-113.6)" font-size="12.3" y="4.4">285</text>
<text transform="translate(1020.5 177) rotate(-113.6)" font-size="20.5" y="7" textLength="130">X : 99.95 mm</text>
<text transform="translate(923 372.5) rotate(-16.3)" font-size="23.5" y="8" textLength="146">Y : 99.95 mm</text>
</g>
<clipPath id="dc"><ellipse cx="870.5" cy="210.8" rx="119.0" ry="110.2"/></clipPath>
<g clip-path="url(#dc)"><g transform="translate(874.0 204.3) scale(1.54977 1.43516) rotate(-106.4) translate(-86.0 -86.0)"><use href="#hm" filter="url(#grain2)"/></g></g>
<linearGradient id="cb2" x1="0" y1="0" x2="0" y2="1"><stop offset="0.0000" stop-color="#ff6666"/><stop offset="0.0250" stop-color="#ff6666"/><stop offset="0.0500" stop-color="#ff6666"/><stop offset="0.0750" stop-color="#ff6666"/><stop offset="0.1000" stop-color="#ff5353"/><stop offset="0.1250" stop-color="#ff1e1e"/><stop offset="0.1500" stop-color="#ff0f00"/><stop offset="0.1750" stop-color="#ff3200"/><stop offset="0.2000" stop-color="#ff5600"/><stop offset="0.2250" stop-color="#ff8300"/><stop offset="0.2500" stop-color="#ffb100"/><stop offset="0.2750" stop-color="#ffdd00"/><stop offset="0.3000" stop-color="#ecff00"/><stop offset="0.3250" stop-color="#9aff00"/><stop offset="0.3500" stop-color="#43ff00"/><stop offset="0.3750" stop-color="#00f40b"/><stop offset="0.4000" stop-color="#00c73a"/><stop offset="0.4250" stop-color="#009a69"/><stop offset="0.4500" stop-color="#006b9c"/><stop offset="0.4750" stop-color="#0035db"/><stop offset="0.5000" stop-color="#0011f7"/><stop offset="0.5250" stop-color="#0000ff"/><stop offset="0.5500" stop-color="#0000ff"/><stop offset="0.5750" stop-color="#0000ff"/><stop offset="0.6000" stop-color="#0000ff"/><stop offset="0.6250" stop-color="#0000ff"/><stop offset="0.6500" stop-color="#0000ff"/><stop offset="0.6750" stop-color="#0000ff"/><stop offset="0.7000" stop-color="#0000ff"/><stop offset="0.7250" stop-color="#0000ff"/><stop offset="0.7500" stop-color="#0000ff"/><stop offset="0.7750" stop-color="#0000ff"/><stop offset="0.8000" stop-color="#0000ff"/><stop offset="0.8250" stop-color="#0000ff"/><stop offset="0.8500" stop-color="#0000ff"/><stop offset="0.8750" stop-color="#0000ff"/><stop offset="0.9000" stop-color="#0000ff"/><stop offset="0.9250" stop-color="#0000ff"/><stop offset="0.9500" stop-color="#0000ff"/><stop offset="0.9750" stop-color="#0000ff"/><stop offset="1.0000" stop-color="#0000ff"/></linearGradient>
<rect x="1149.6" y="46.5" width="13.8" height="275.3" fill="url(#cb2)"/>
<rect x="1149.6" y="46.5" width="13.8" height="275.3" fill="url(#cbs)"/>
<path d="M1149.6 52.4h-4.8M1149.6 126.0h-4.8M1149.6 199.6h-4.8M1149.6 273.2h-4.8" stroke="#fff" stroke-width="1.1" fill="none"/>
<path d="M1149.6 59.8h-2.4M1149.6 67.1h-2.4M1149.6 74.5h-2.4M1149.6 81.8h-2.4M1149.6 89.2h-2.4M1149.6 96.6h-2.4M1149.6 103.9h-2.4M1149.6 111.3h-2.4M1149.6 118.6h-2.4M1149.6 133.4h-2.4M1149.6 140.7h-2.4M1149.6 148.1h-2.4M1149.6 155.4h-2.4M1149.6 162.8h-2.4M1149.6 170.2h-2.4M1149.6 177.5h-2.4M1149.6 184.9h-2.4M1149.6 192.2h-2.4M1149.6 207.0h-2.4M1149.6 214.3h-2.4M1149.6 221.7h-2.4M1149.6 229.0h-2.4M1149.6 236.4h-2.4M1149.6 243.8h-2.4M1149.6 251.1h-2.4M1149.6 258.5h-2.4M1149.6 265.8h-2.4M1149.6 280.6h-2.4M1149.6 287.9h-2.4M1149.6 295.3h-2.4M1149.6 302.6h-2.4M1149.6 310.0h-2.4M1149.6 317.4h-2.4" stroke="#a8a8a8" stroke-width="1" fill="none"/>
<g fill="#fff" font-size="10.6" font-weight="bold" text-anchor="end">
<text x="1143.8" y="56.3">0.005</text>
<text x="1143.8" y="129.9">0</text>
<text x="1143.8" y="203.5">-0.005</text>
<text x="1143.8" y="277.1">-0.010</text>
<text x="1167" y="38.2">0.005 λ</text>
<text x="1167" y="339.2">-0.013 λ</text>
</g>
<path d="M1164.2 47.4l5.6 -3.6v7.2z" fill="#b5353b"/>
<path d="M1164.2 321.6l5.6 -3.6v7.2z" fill="#1e78ff"/>
</g>
<defs>
<linearGradient id="ig" gradientUnits="userSpaceOnUse" x1="800.9" y1="467.8" x2="1005.1" y2="726.2">
<stop offset="0" stop-color="#8a8a8a"/><stop offset=".12" stop-color="#a0a0a0"/><stop offset=".26" stop-color="#c4c4c4"/><stop offset=".38" stop-color="#dedede"/><stop offset=".47" stop-color="#e9e9e9"/><stop offset=".57" stop-color="#e0e0e0"/><stop offset=".72" stop-color="#b8b8b8"/><stop offset=".86" stop-color="#969696"/><stop offset="1" stop-color="#868686"/></linearGradient>
<radialGradient id="dk1" gradientUnits="userSpaceOnUse" cx="752" cy="520" r="150"><stop offset="0" stop-color="#000" stop-opacity=".42"/><stop offset=".5" stop-color="#000" stop-opacity=".2"/><stop offset="1" stop-color="#000" stop-opacity="0"/></radialGradient>
<radialGradient id="dk2" gradientUnits="userSpaceOnUse" cx="1075" cy="640" r="170"><stop offset="0" stop-color="#000" stop-opacity=".38"/><stop offset=".5" stop-color="#000" stop-opacity=".18"/><stop offset="1" stop-color="#000" stop-opacity="0"/></radialGradient>
<linearGradient id="sg" gradientUnits="userSpaceOnUse" x1="846" y1="640" x2="958" y2="702">
<stop offset="0" stop-color="#a6a6a6"/><stop offset=".3" stop-color="#9a9a9a"/><stop offset=".52" stop-color="#767676"/><stop offset=".68" stop-color="#5a5a5a"/><stop offset=".8" stop-color="#5c5c5c"/><stop offset=".92" stop-color="#747474"/><stop offset="1" stop-color="#868686"/></linearGradient>
<radialGradient id="rim" cx=".5" cy=".5" r=".5"><stop offset=".975" stop-color="#fff" stop-opacity="0"/><stop offset=".99" stop-color="#fff" stop-opacity=".16"/><stop offset="1" stop-color="#fff" stop-opacity=".1"/></radialGradient>
<clipPath id="ic"><circle cx="903.0" cy="597.0" r="164.6"/></clipPath>
<filter id="ib" x="-5%" y="-5%" width="110%" height="110%"><feGaussianBlur stdDeviation=".6"/></filter>
</defs>
<rect x="730.5" y="427" width="339.5" height="339.5" fill="#444"/>
<g filter="url(#ib)">
<circle cx="903.0" cy="597.0" r="164.6" fill="url(#ig)"/>
<circle cx="903.0" cy="597.0" r="164.6" fill="url(#dk1)"/>
<circle cx="903.0" cy="597.0" r="164.6" fill="url(#dk2)"/>
<g clip-path="url(#ic)">
<rect x="730" y="731" width="340" height="40" fill="#8b8b8b"/>
<rect x="842" y="588.8" width="5.5" height="143" fill="#868686"/>
<rect x="955.5" y="588.8" width="5.3" height="143" fill="#868686"/>
<rect x="847.5" y="623" width="108" height="108.3" fill="url(#sg)"/>
<rect x="820.8" y="726" width="21.5" height="6" fill="#8b8b8b"/>
<rect x="829.7" y="716" width="4" height="10.5" fill="#7a7a7a"/><rect x="828.3" y="714.6" width="6.8" height="3.4" fill="#5c5c5c"/>
<rect x="961.5" y="724.5" width="21" height="7" fill="#8b8b8b"/><rect x="966" y="719.3" width="11" height="6" fill="#8b8b8b"/>
</g>
<circle cx="903.0" cy="597.0" r="164.6" fill="url(#rim)"/>
</g>
<defs>
<linearGradient id="zt" x1="0" y1="0" x2="0" y2="1"><stop offset="0" stop-color="#f7f7f8"/><stop offset=".5" stop-color="#e6e8eb"/><stop offset="1" stop-color="#c3c7ce"/></linearGradient>
<linearGradient id="zb1" x1="0" y1="0" x2="0" y2="1"><stop offset="0" stop-color="#eef0f3"/><stop offset=".25" stop-color="#dfe4ea"/><stop offset=".45" stop-color="#cad2dc"/><stop offset=".7" stop-color="#dbe1e8"/><stop offset="1" stop-color="#f0f2f5"/></linearGradient>
<linearGradient id="zb2" x1="0" y1="0" x2="0" y2="1"><stop offset="0" stop-color="#fafbfc"/><stop offset=".2" stop-color="#f1f3f5"/><stop offset=".3" stop-color="#d0d7e0"/><stop offset=".5" stop-color="#d3dae2"/><stop offset=".8" stop-color="#e6eaef"/><stop offset="1" stop-color="#f3f5f7"/></linearGradient>
<linearGradient id="tilt" x1="0" y1="1" x2="1" y2="0"><stop offset=".12" stop-color="#0000ff"/><stop offset=".38" stop-color="#00c800"/><stop offset=".55" stop-color="#ffff00"/><stop offset=".75" stop-color="#ff0000"/><stop offset=".9" stop-color="#ff0000"/></linearGradient>
<radialGradient id="pow"><stop offset="0" stop-color="#000"/><stop offset=".3" stop-color="#050505"/><stop offset=".65" stop-color="#555"/><stop offset=".9" stop-color="#d0d4da"/><stop offset="1" stop-color="#d0d6de" stop-opacity="0"/></radialGradient>
<radialGradient id="sph"><stop offset="0" stop-color="#fff"/><stop offset=".2" stop-color="#f0f0f0"/><stop offset=".5" stop-color="#111"/><stop offset=".72" stop-color="#000"/><stop offset=".9" stop-color="#777"/><stop offset="1" stop-color="#d0d6de" stop-opacity="0"/></radialGradient>
<radialGradient id="rb" cx=".5" cy=".5" r=".5"><stop offset="0" stop-color="#fff"/><stop offset=".6" stop-color="#f2f2f2"/><stop offset="1" stop-color="#c8c8c8"/></radialGradient>
<radialGradient id="rd" cx=".4" cy=".35" r=".6"><stop offset="0" stop-color="#bfe6f8"/><stop offset=".5" stop-color="#2f8fc4"/><stop offset="1" stop-color="#0f4e78"/></radialGradient>
<filter id="b2" x="-30%" y="-30%" width="160%" height="160%"><feGaussianBlur stdDeviation="2.2"/></filter>
<clipPath id="zc"><rect x="0" y="722" width="595" height="78"/></clipPath>
</defs>
<g clip-path="url(#zc)">
<rect x="1.5" y="722" width="593.5" height="80" fill="#f2f3f5"/>
<rect x="2" y="722.5" width="592.5" height="18.8" fill="url(#zt)" stroke="#6a707a" stroke-width="1"/>
<path d="M2 741.5V800M594.5 741.5V750.4" fill="none" stroke="#7c828c" stroke-width="1"/>
<rect x="2.5" y="750.7" width="593" height="50" fill="#f0f1f3"/>
<path d="M2 741.5V800" fill="none" stroke="#7c828c" stroke-width="1"/>
<text x="12" y="735.6" font-size="10.6" fill="#111" textLength="74.5" lengthAdjust="spacingAndGlyphs">Zernike Removal</text>
<rect x="18.5" y="768.9" width="10.4" height="10.6" fill="#f6f6f6" stroke="#8e8f8f" stroke-width="1"/>
<path d="M20.6 773.7l2.4 3.4l3.9 -6.6" fill="none" stroke="#3b58b0" stroke-width="1.7"/>
<text x="33" y="777.4" font-size="10.6" fill="#111" textLength="12.6">On</text>
<rect x="58.5" y="750.6" width="73.3" height="46.8" fill="#fff" stroke="#a3a5a8" stroke-width="1"/>
<circle cx="69.6" cy="764.5" r="5.3" fill="url(#rb)" stroke="#8e8f8f" stroke-width="1"/>
<circle cx="69.6" cy="783.6" r="5.3" fill="url(#rb)" stroke="#6e7580" stroke-width="1"/>
<circle cx="69.6" cy="783.6" r="2.7" fill="url(#rd)"/>
<text x="79" y="768.3" font-size="10.6" fill="#111" textLength="43.5">Cartesian</text>
<text x="79" y="787.2" font-size="10.6" fill="#111" textLength="32.8">Zernike</text>
<rect x="137.6" y="750.6" width="72.6" height="48.2" rx="3" fill="url(#zb1)" stroke="#8b8d91" stroke-width="1"/>
<rect x="138.6" y="751.6" width="70.6" height="46.2" rx="2" fill="none" stroke="#fff" stroke-opacity=".7" stroke-width="1"/>
<text x="173.3" y="791.4" font-size="10.6" fill="#111" text-anchor="middle" textLength="27.5">Piston</text>
<circle cx="173.6" cy="767.3" r="11.4" fill="#0000ff"/>
<rect x="216.4" y="750.6" width="72.6" height="48.2" rx="3" fill="url(#zb1)" stroke="#8b8d91" stroke-width="1"/>
<rect x="217.4" y="751.6" width="70.6" height="46.2" rx="2" fill="none" stroke="#fff" stroke-opacity=".7" stroke-width="1"/>
<text x="252.1" y="791.4" font-size="10.6" fill="#111" text-anchor="middle" textLength="13.5">Tilt</text>
<circle cx="252.4" cy="767.3" r="11.4" fill="url(#tilt)"/>
<rect x="295.2" y="750.6" width="72.6" height="48.2" rx="3" fill="url(#zb2)" stroke="#8b8d91" stroke-width="1"/>
<rect x="296.2" y="751.6" width="70.6" height="46.2" rx="2" fill="none" stroke="#fff" stroke-opacity=".7" stroke-width="1"/>
<text x="330.9" y="791.4" font-size="10.6" fill="#111" text-anchor="middle" textLength="27.5">Power</text>
<circle cx="331.2" cy="767.3" r="11.6" fill="url(#pow)"/>
<rect x="374.0" y="750.6" width="72.6" height="48.2" rx="3" fill="url(#zb2)" stroke="#8b8d91" stroke-width="1"/>
<rect x="375.0" y="751.6" width="70.6" height="46.2" rx="2" fill="none" stroke="#fff" stroke-opacity=".7" stroke-width="1"/>
<text x="409.7" y="791.4" font-size="10.6" fill="#111" text-anchor="middle" textLength="53.3">Astigmatism</text>
<clipPath id="ca"><circle cx="410.0" cy="767.3" r="11.2"/></clipPath>
<g clip-path="url(#ca)"><rect x="397.0" y="754.3" width="26" height="26" fill="#8c8c8c"/><g filter="url(#b2)">
<circle cx="404.5" cy="756.8" r="5.5" fill="#000"/>
<circle cx="415.5" cy="777.8" r="5.5" fill="#000"/>
<circle cx="399.5" cy="770.8" r="5" fill="#fff"/>
<circle cx="420.5" cy="763.8" r="5" fill="#fff"/>
</g></g>
<rect x="452.8" y="750.6" width="72.6" height="48.2" rx="3" fill="url(#zb2)" stroke="#8b8d91" stroke-width="1"/>
<rect x="453.8" y="751.6" width="70.6" height="46.2" rx="2" fill="none" stroke="#fff" stroke-opacity=".7" stroke-width="1"/>
<text x="488.5" y="791.4" font-size="10.6" fill="#111" text-anchor="middle" textLength="25.6">Coma</text>
<clipPath id="cc"><circle cx="488.8" cy="767.3" r="11.2"/></clipPath>
<g clip-path="url(#cc)"><rect x="475.8" y="754.3" width="26" height="26" fill="#8a8a8a"/><g filter="url(#b2)">
<circle cx="493.3" cy="763.3" r="5" fill="#222"/>
<circle cx="484.3" cy="770.8" r="5.5" fill="#e8e8e8"/>
<circle cx="479.8" cy="759.3" r="3" fill="#555"/>
<circle cx="498.3" cy="774.3" r="3" fill="#444"/>
</g></g>
<rect x="531.6" y="750.6" width="72.6" height="48.2" rx="3" fill="url(#zb2)" stroke="#8b8d91" stroke-width="1"/>
<rect x="532.6" y="751.6" width="70.6" height="46.2" rx="2" fill="none" stroke="#fff" stroke-opacity=".7" stroke-width="1"/>
<text x="567.3" y="791.4" font-size="10.6" fill="#111" text-anchor="middle" textLength="41.0">Spherical</text>
<circle cx="567.6" cy="767.3" r="11.8" fill="url(#sph)"/>
</g>
<defs>
<linearGradient id="rbw" x1="0" y1="0" x2="1" y2="1"><stop offset="0" stop-color="#ff3000"/><stop offset=".14" stop-color="#ff9000"/><stop offset=".26" stop-color="#ffff00"/><stop offset=".38" stop-color="#ff00ff"/><stop offset=".52" stop-color="#d000ff"/><stop offset=".6" stop-color="#00ff00"/><stop offset=".78" stop-color="#00ff40"/><stop offset=".9" stop-color="#00ffff"/><stop offset="1" stop-color="#00c0ff"/></linearGradient>
<linearGradient id="ga" x1="0" y1="0" x2="1" y2="1"><stop offset="0" stop-color="#9ad060"/><stop offset="1" stop-color="#3f7d1c"/></linearGradient>
<linearGradient id="tbr" x1="0" y1="0" x2="1" y2="0"><stop offset="0" stop-color="#c9cdd3"/><stop offset=".5" stop-color="#bfc3ca"/><stop offset="1" stop-color="#a2a8b2"/></linearGradient>
<linearGradient id="tbcr" x1="0" y1="0" x2="1" y2="0"><stop offset="0" stop-color="#a9aeb8"/><stop offset=".55" stop-color="#9096a1"/><stop offset="1" stop-color="#666c77"/></linearGradient>
<g id="grip"><path d="M0 0h2v2h-2zM3.9 0h2v2h-2zM7.9 0h2v2h-2zM11.9 0h2v2h-2z" fill="#fff" transform="translate(.8 .8)"/><path d="M0 0h2v2h-2zM3.9 0h2v2h-2zM7.9 0h2v2h-2zM11.9 0h2v2h-2z" fill="#2c2f36"/></g>
<g id="chev"><path d="M0 -3.2h1.5v6.6h-1.5zM3 -3l3.4 3.1l-3.4 3.1z" fill="#fff" transform="translate(1 1)"/><path d="M0 -3.2h1.5v6.6h-1.5zM3 -3l3.4 3.1l-3.4 3.1z" fill="#15171b"/></g>
<g id="arrows" fill="url(#ga)" stroke="#4f8f26" stroke-width=".4"><path d="M0 0h5.2l-1.4 1.4l2.7 2.7l-2.4 2.4l-2.7 -2.7l-1.4 1.4z"/><path d="M0 0h5.2l-1.4 1.4l2.7 2.7l-2.4 2.4l-2.7 -2.7l-1.4 1.4z" transform="translate(15.6 0) scale(-1 1)"/><path d="M0 0h5.2l-1.4 1.4l2.7 2.7l-2.4 2.4l-2.7 -2.7l-1.4 1.4z" transform="translate(0 15) scale(1 -1)"/><path d="M0 0h5.2l-1.4 1.4l2.7 2.7l-2.4 2.4l-2.7 -2.7l-1.4 1.4z" transform="translate(15.6 15) scale(-1 -1)"/></g>
<g id="pic"><path d="M0 1.2l11.4 1.2l.3 9.2l-11.3 -.8z" fill="#245f8c"/><path d="M1 3.3l9.7 .8l.1 6.5l-9.5 -.7z" fill="url(#rbw)"/></g>
</defs>
<use href="#grip" x="7.2" y="5.6"/>
<use href="#pic" x="7.2" y="14.4"/>
<rect x="15.2" y="22.6" width="5.2" height="5.8" rx=".8" fill="#d6d8dc" stroke="#7a7e86" stroke-width=".6"/><rect x="16.2" y="23" width="3.2" height="1.8" fill="#555"/><rect x="16.2" y="26" width="3.2" height="2" fill="#eaffff"/>
<use href="#pic" x="7.2" y="35.4"/>
<circle cx="17.3" cy="46.6" r="3.5" fill="#58a52c" stroke="#3c7d18" stroke-width=".6"/><path d="M16.6 45.2l1 -.6v4" stroke="#e6f5d8" stroke-width="1.1" fill="none"/>
<use href="#chev" x="16.1" y="62.5"/>
<use href="#grip" x="7.4" y="74.8"/>
<use href="#arrows" x="6.1" y="84.6"/>
<path d="M6.2 111.2l3.2 -1.3l3 1.2v5l-3 1.5l-3.2 -1.3z" fill="#8cc58a" stroke="#5ea35c" stroke-width=".5"/>
<path d="M12.4 115l4.8 -2l4.6 1.8v4.2l-4.8 2l-4.6 -1.9z" fill="#5f9ad6" stroke="#3f78b8" stroke-width=".5"/><path d="M12.4 115l4.6 1.7l4.8 -1.9" fill="none" stroke="#a9cbee" stroke-width=".6"/>
<path d="M10.2 108.4l5 -2.2l4.8 2v4.6l-5 2.2l-4.8 -2z" fill="#ee5a5a" stroke="#cf3535" stroke-width=".5"/><path d="M10.2 108.4l4.8 1.9l5 -2.1M15 110.3v4.6" fill="none" stroke="#f8a0a0" stroke-width=".6"/>
<text transform="translate(9.2 125.8) rotate(90)" font-size="10.6" fill="#111" textLength="56" lengthAdjust="spacingAndGlyphs">Hide Linear</text>
<rect x="6.3" y="186.5" width="14.5" height="14" fill="#c6c9cf" stroke="#b4b8bf" stroke-width=".6"/><path d="M10 197.2l7.6 -8.2" stroke="#8d9198" stroke-width="1"/><path d="M8.9 198.4l1 -3.4l2.2 2.2zM18.4 188l-3.3 .9l2.3 2.3z" fill="#8d9198"/>
<rect x="6.2" y="207.6" width="13.4" height="13" rx="1.6" fill="#9cc3dc" stroke="#27597f" stroke-width="1.7" transform="skewY(4) translate(0 -.9)"/><path d="M9.4 210.5v8.4M12.9 210.7v8.4M16.4 210.9v8.4" stroke="#d8ebf6" stroke-width="1.8" transform="translate(0 .2)"/>
<rect x="6.6" y="229.8" width="13" height="12" rx="1.4" fill="#eef5fa" stroke="#27597f" stroke-width="1.7" transform="skewY(4) translate(0 -.9)"/><path d="M8 232.2l10.4 .7" stroke="#3c78ad" stroke-width="1.8"/><path d="M10.6 234v7.6" stroke="#9cc3dc" stroke-width="1.4"/>
<path d="M6.6 249.6l12 .9v11.6l-12 -.9z" fill="#f6f6f6" stroke="#c8c8c8" stroke-width=".5"/><path d="M6.6 249.4v11.9l12.6 .9" fill="none" stroke="#444" stroke-width="1.1"/><rect x="8" y="251.4" width="3.2" height="9.6" fill="#d92020"/><rect x="12" y="256.2" width="2.8" height="5" fill="#2060d0"/><rect x="15.4" y="254" width="3" height="7.5" fill="#2a9a3a"/>
<path d="M7 276.2q0 -2.2 2.2 -2.2h5.2q2.2 0 2.2 2.2v3.2q0 2.2 -2.2 2.2h-2.6l-2.8 2.8l.6 -2.8h-.4q-2.2 0 -2.2 -2.2z" fill="#f4f8fc" stroke="#4f86c6" stroke-width="1"/>
<path d="M19.4 270.4l2.2 2.2l-8 7.4l-3.4 1.2l1.2 -3.4z" fill="#f6c64a" stroke="#d99a2a" stroke-width=".6"/><path d="M10.2 281.2l1.2 -3.4l2.2 2.2z" fill="#7a4a1e"/><path d="M19.4 270.4l2.2 2.2l-1.3 1.2l-2.2 -2.2z" fill="#f2b0a0"/>
<use href="#chev" x="16.3" y="296.6"/>
<path d="M1195 2H1174.5q-3 0 -3 3V56.5H1195z" fill="url(#tbr)"/><path d="M1195 56.5H1171.5V64.6q0 3 3 3H1195z" fill="url(#tbcr)"/>
<use href="#grip" x="1178.6" y="5.2"/>
<use href="#arrows" x="1176.9" y="14.2"/>
<rect x="1177.2" y="35.5" width="14" height="14.6" fill="#e9e9a0" stroke="#6f7d6c" stroke-width="1"/><path d="M1184.5 36h6.2v7h-6.2z" fill="#a9c6ea"/><path d="M1177.8 44l4 -2.5l4.5 2l4.4 -1.5v7.6h-12.9z" fill="#8fcc72"/><path d="M1179.6 36.4l3.4 5.4l2.6 3l2.2 4.6M1185.4 44.6l4.6 -2.8" stroke="#e5402a" stroke-width="1.2" fill="none"/>
<use href="#chev" x="1186.7" y="62.4"/>
<defs><g id="sg5"><path d="M0 0h1.6v1.6h-1.6zM4 0h1.6v1.6h-1.6zM8 0h1.6v1.6h-1.6zM11.9 0h1.6v1.6h-1.6zM15.8 0h1.6v1.6h-1.6z" fill="#fff" transform="translate(.8 .8)"/><path d="M0 0h1.6v1.6h-1.6zM4 0h1.6v1.6h-1.6zM8 0h1.6v1.6h-1.6zM11.9 0h1.6v1.6h-1.6zM15.8 0h1.6v1.6h-1.6z" fill="#5a5d63"/></g></defs>
<use href="#sg5" x="289.2" y="717"/>
<use href="#sg5" x="890.8" y="398.4"/>
<use href="#sg5" transform="translate(599.6 400.2) rotate(90)"/>
<rect x="603" y="368.4" width="592" height="27.0" fill="#343436"/><rect x="603" y="368.4" width="592" height="8" fill="#3e424b"/><rect x="652.0" y="371.4" width="1" height="21.0" fill="#1c1d20"/><rect x="653.0" y="371.4" width="1" height="21.0" fill="#50545d"/><rect x="848.5" y="371.4" width="1" height="21.0" fill="#1c1d20"/><rect x="849.5" y="371.4" width="1" height="21.0" fill="#50545d"/><rect x="1052.5" y="371.4" width="1" height="21.0" fill="#1c1d20"/><rect x="1053.5" y="371.4" width="1" height="21.0" fill="#50545d"/><g fill="#f4f4f4" font-size="11.6"><text x="609.3" y="386.6" textLength="37.2" lengthAdjust="spacingAndGlyphs">Surface</text><text x="659.0" y="386.6" textLength="183.3" lengthAdjust="spacingAndGlyphs">W: (265.32 mm, 283.26 mm, -0.034 λ)</text><text x="855.6" y="386.6" textLength="29.6" lengthAdjust="spacingAndGlyphs">Select</text><text x="1060.8" y="386.6" textLength="131.2" lengthAdjust="spacingAndGlyphs">Height Palette Scale : Auto</text></g>
<rect x="603" y="789.2" width="592" height="27.0" fill="#343436"/><rect x="603" y="789.2" width="592" height="8" fill="#3e424b"/><rect x="733.0" y="792.2" width="1" height="21.0" fill="#1c1d20"/><rect x="734.0" y="792.2" width="1" height="21.0" fill="#50545d"/><rect x="877.5" y="792.2" width="1" height="21.0" fill="#1c1d20"/><rect x="878.5" y="792.2" width="1" height="21.0" fill="#50545d"/><rect x="1088.0" y="792.2" width="1" height="21.0" fill="#1c1d20"/><rect x="1089.0" y="792.2" width="1" height="21.0" fill="#50545d"/><g fill="#f4f4f4" font-size="11.6"><text x="609.3" y="807.4" textLength="113.0" lengthAdjust="spacingAndGlyphs">Synthetic Intensity Data</text><text x="740.0" y="807.4" textLength="131.0" lengthAdjust="spacingAndGlyphs">W: (-155.44 mm, -6.09 mm)</text><text x="884.0" y="807.4" textLength="29.6" lengthAdjust="spacingAndGlyphs">Select</text><text x="1096.0" y="807.4" textLength="96.0" lengthAdjust="spacingAndGlyphs">Palette Scale : Auto</text></g>
</svg>
</body></html>
